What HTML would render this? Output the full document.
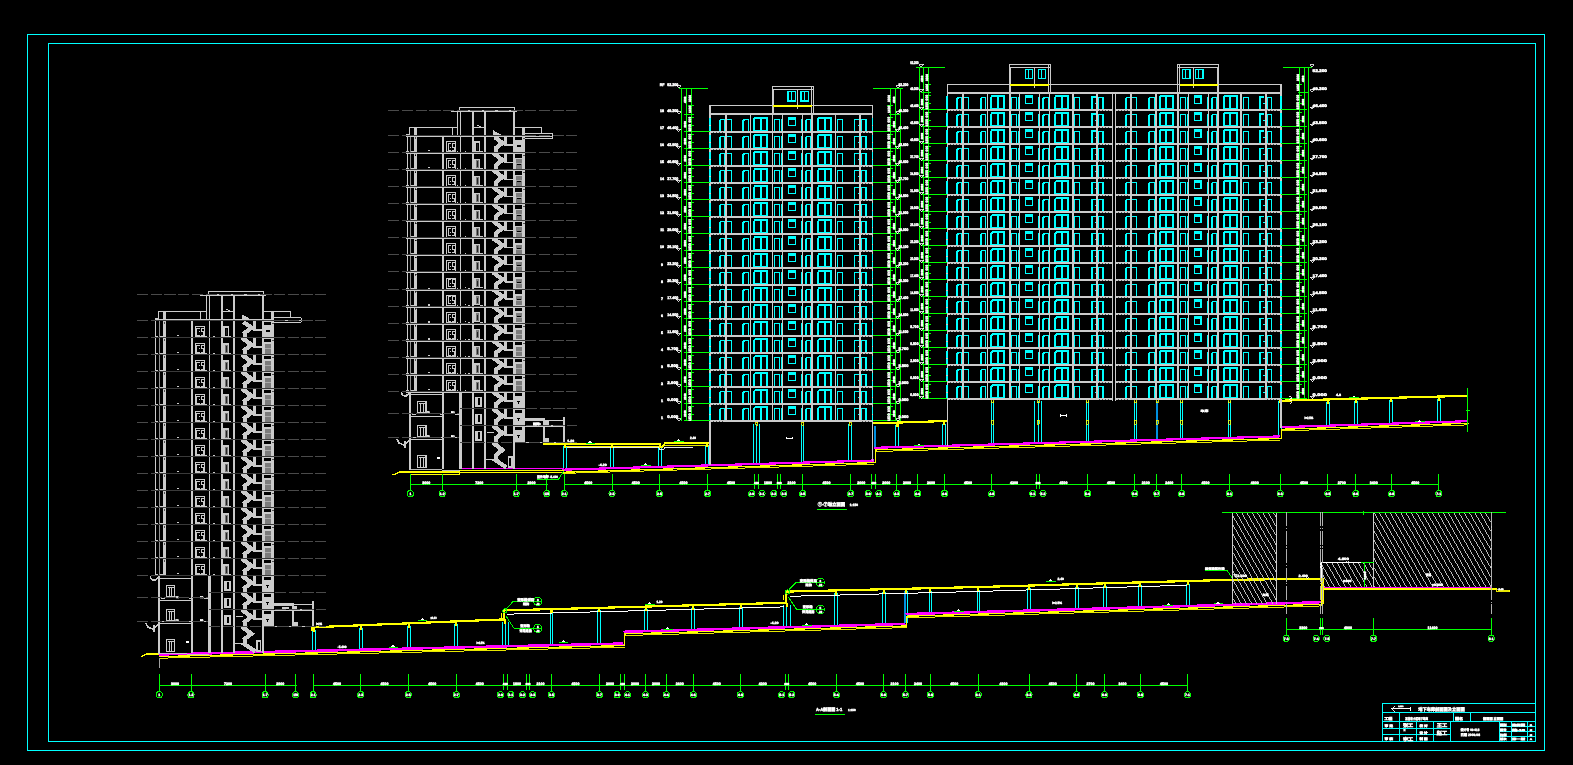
<!DOCTYPE html>
<html lang="zh"><head><meta charset="utf-8"><title>CAD</title>
<style>
html,body{margin:0;padding:0;background:#000;overflow:hidden}
svg{display:block;will-change:transform;transform:translateZ(0)}
text{font-family:"Liberation Sans","Noto Sans CJK SC",sans-serif;fill:#fff;stroke:#fff;stroke-width:.45px;text-rendering:geometricPrecision}
</style></head><body>
<svg width="1573" height="765" viewBox="0 0 1573 765" fill="none" stroke-linecap="butt" shape-rendering="crispEdges">
<rect x="0" y="0" width="1573" height="765" fill="#000"/>
<path d="M27.3 34.2L1544.6 34.2L1544.6 750.3L27.3 750.3ZM48.6 43.4L1535.7 43.4L1535.7 741.4L48.6 741.4ZM1382.3 703.5L1535.7 703.5M1382.5 703.4L1382.5 741.4M1382.3 712.5L1535.7 712.5M1382.3 721.5L1535.7 721.5M1399.5 712.3L1399.5 721.3M1453.5 712.3L1453.5 721.3M1470.5 712.3L1470.5 721.3M1382.3 728.5L1450.7 728.5M1382.3 734.5L1450.7 734.5M1399.5 721.3L1399.5 741.4M1416.5 721.3L1416.5 741.4M1433.5 721.3L1433.5 741.4M1450.5 721.3L1450.5 741.4M1499.5 721.3L1499.5 741.4M1511.5 721.3L1511.5 741.4M1527.5 721.3L1527.5 741.4M1499.3 726.5L1535.7 726.5M1499.3 731.5L1535.7 731.5M1499.3 736.5L1535.7 736.5M312.5 629.8L312.5 649.9M315.5 629.8L315.5 649.9M359.5 627.8L359.5 648.8M362.5 627.8L362.5 648.8M407.5 625.9L407.5 647.6M410.5 625.9L410.5 647.6M454.5 623.9L454.5 646.5M457.5 623.9L457.5 646.5M502.5 621.9L502.5 645.4M505.5 621.9L505.5 645.4M508.5 621.9L508.5 645.4M550.5 611.6L550.5 644.2M552.5 611.6L552.5 644.2M597.5 610.4L597.5 643.1M600.5 610.4L600.5 643.1M644.5 609.1L644.5 630.2M647.5 609.1L647.5 630.2M691.5 607.8L691.5 628.9M694.5 607.8L694.5 628.9M739.5 606.5L739.5 627.5M742.5 606.5L742.5 627.5M783.5 605.4L783.5 626.3M786.5 605.4L786.5 626.3M790.5 605.4L790.5 626.3M834.5 592.9L834.5 624.9M837.5 592.9L837.5 624.9M882.5 591.8L882.5 623.5M885.5 591.8L885.5 623.5" stroke="#00ffff"/>
<path d="M904.9 591.3L904.9 622.9" stroke="#0090e0" stroke-width="2"/>
<path d="M907.5 591.3L907.5 622.9M929.5 590.7L929.5 612.4M931.5 590.7L931.5 612.4M977.5 589.6L977.5 611.1M979.5 589.6L979.5 611.1M1027.5 588.1L1027.5 609.6M1030.5 588.1L1030.5 609.6M1075.5 586.7L1075.5 608.2M1078.5 586.7L1078.5 608.2M1103.5 585.9L1103.5 607.4M1106.5 585.9L1106.5 607.4M1138.5 584.9L1138.5 606.4M1141.5 584.9L1141.5 606.4M1186.5 583.6L1186.5 605.1M1189.5 583.6L1189.5 605.1" stroke="#00ffff"/>
<path d="M506.9 614.2L783.9 606.9M789.8 596.3L980 591.4L1187.5 585.2" stroke="#ffffff"/>
<path d="M159.2 654.5L623.5 643.5M623.5 631.8L905.5 623.9M905.5 614.1L1321.5 602.2" stroke="#ff00ff" stroke-width="2.5"/>
<path d="M141.2 656.5L146.5 654.1L159.2 654" stroke="#ffff00" stroke-width="1.4"/>
<path d="M159.2 656.6L624.7 645.6L624.7 633.9L906.7 626L906.7 616.2L1322.7 604.3" stroke="#ffff00" stroke-width="1.3"/>
<path d="M160.2 658.2L624.5 647.2M624.5 635.5L906.5 627.6M906.5 617.8L1322.5 605.9" stroke="#ffff00" stroke-width="0.9"/>
<path d="M159.5 657.5L159.5 668" stroke="#a0a0a0"/>
<path d="M312.2 627.3L312.2 630.5" stroke="#ffff00" stroke-width="1.6"/>
<path d="M312.2 627.3L503.9 619.4M503.9 610.4L785.9 602.8M785.9 591.6L980 587M980 587L1100 583.5M1100 583.5L1232 579.8M1232 579.8L1321.5 578.7M503.9 620.5L503.9 609" stroke="#ffff00" stroke-width="2.2"/>
<path d="M501.5 613L501.5 618" stroke="#ffff00"/>
<path d="M785.9 603.8L785.9 590.4" stroke="#ffff00" stroke-width="2.2"/>
<path d="M783.5 595L783.5 600" stroke="#ffff00"/>
<path d="M313.8 627.3L313.8 631.5M361.1 625.3L361.1 629.5M408.9 623.4L408.9 627.6M456 621.4L456 625.6M505.3 619.4L505.3 623.6M551.5 609.1L551.5 613.3M599 607.9L599 612.1M646.2 606.6L646.2 610.8M693 605.3L693 609.5M741.2 604L741.2 608.2M786.8 602.9L786.8 607.1M836.2 590.4L836.2 594.6M884.2 589.3L884.2 593.5M906 588.8L906 593M930.3 588.2L930.3 592.4M978.3 587.1L978.3 591.3M1028.8 585.6L1028.8 589.8M1077.2 584.2L1077.2 588.4M1104.8 583.4L1104.8 587.6M1139.9 582.4L1139.9 586.6M1188 581.1L1188 585.3" stroke="#ffff00" stroke-width="2.2"/>
<path d="M1322.3 577.6L1322.3 604.2" stroke="#ffff00" stroke-width="2.6"/>
<path d="M1322.3 588.9L1496.5 588.9" stroke="#ffff00" stroke-width="1.8"/>
<path d="M1496.5 589.2L1496.5 591.6L1509.8 591.6L1509.8 590L1497.5 590" stroke="#ffff00" stroke-width="0.9"/>
<path d="M1323.5 587.5L1491.6 587.5" stroke="#ff00ff"/>
<path d="M563.5 446.4L563.5 468.6M566.5 446.4L566.5 468.6M610.5 446.4L610.5 467.2M613.5 446.4L613.5 467.2M658.5 446.4L658.5 465.8M661.5 446.4L661.5 465.8M705.5 445.7L705.5 464.5M708.5 445.7L708.5 464.5M753.5 424.1L753.5 463M756.5 424.1L756.5 463M759.5 424.1L759.5 463M801.5 424.1L801.5 461.6M803.5 424.1L803.5 461.6M848.5 424.1L848.5 460.3M851.5 424.1L851.5 460.3M895.5 425L895.5 446.2M898.5 425L898.5 446.2M942.5 423.5L942.5 444.9M945.5 423.5L945.5 444.9M991.5 401.3L991.5 443.5M993.5 401.3L993.5 443.5M1034.5 401.3L1034.5 442.3M1038.5 401.3L1038.5 442.3M1041.5 401.3L1041.5 442.3M1086.5 401.3L1086.5 440.8M1088.5 401.3L1088.5 440.8M1134.5 401.3L1134.5 439.5M1136.5 401.3L1136.5 439.5" stroke="#00ffff"/>
<path d="M1156.9 400.8L1156.9 438.9" stroke="#0090e0" stroke-width="2.4"/>
<path d="M1180.5 401.3L1180.5 438.2M1182.5 401.3L1182.5 438.2M1228.5 401.3L1228.5 436.9M1230.5 401.3L1230.5 436.9M1278.5 401.3L1278.5 435.4M1281.5 401.3L1281.5 435.4M1326.5 401.9L1326.5 424.7M1329.5 401.9L1329.5 424.7M1354.5 401.2L1354.5 423.8M1357.5 401.2L1357.5 423.8M1389.5 400.2L1389.5 422.7M1392.5 400.2L1392.5 422.7M1437.5 399L1437.5 421.2M1440.5 399L1440.5 421.2" stroke="#00ffff"/>
<path d="M875.2 426L875.2 446.6" stroke="#0090e0" stroke-width="2"/>
<path d="M566.5 447.9L659 447.9L659 449L664 449L664 447.6L693 447.6" stroke="#ffffff" stroke-width="0.9"/>
<path d="M459.4 468.5L564.3 468.5" stroke="#ff00ff"/>
<path d="M562 469.7L874.3 460.5M874.3 447.8L1280 436.4M1280 427.2L1467.8 421.2" stroke="#ff00ff" stroke-width="2.2"/>
<path d="M392.2 474.6L395.5 474L399.6 472L459.4 472M410.4 474.3L459.4 474.3L459.4 470.5L564.3 470.5" stroke="#ffff00" stroke-width="1.3"/>
<path d="M459.4 472.5L564.3 472.5" stroke="#ffff00"/>
<path d="M564.3 472.2L875.5 462.6L875.5 449.9L1281.2 438.5L1281.2 429.3L1469 423.3" stroke="#ffff00" stroke-width="1.3"/>
<path d="M563 473.4L873.8 464.2M875.3 451.5L1279.5 440.1M1281 430.9L1467.3 424.9" stroke="#ffff00" stroke-width="0.9"/>
<path d="M543.3 443.7L660.4 443.7" stroke="#ffff00" stroke-width="1.8"/>
<path d="M566 446.5L659.5 446.5" stroke="#ffff00"/>
<path d="M660.4 443L660.4 447L662.3 447L664.3 444.6L664.3 443.1L709.3 442.9" stroke="#ffff00" stroke-width="1.6"/>
<path d="M665 445.3L709 445.2" stroke="#ffff00" stroke-width="0.9"/>
<path d="M872.7 423.4L946.7 421M1281 400.7L1467.8 395.8" stroke="#ffff00" stroke-width="2.2"/>
<path d="M1467.5 388.2L1467.5 432M1466 410.5L1469.6 410.5" stroke="#00ff00"/>
<path d="M565 443.9L565 448.1M612.3 443.9L612.3 448.1M660 443.9L660 448.1M707.2 443.2L707.2 447.4" stroke="#ffff00" stroke-width="2.2"/>
<path d="M755.5 422.4L757.5 422.4L757.5 425.4L755.5 425.4ZM801.8 422.4L803.8 422.4L803.8 425.4L801.8 425.4ZM849.1 422.4L851.1 422.4L851.1 425.4L849.1 425.4Z" stroke="#ffff00" stroke-width="0.8"/>
<path d="M897.4 422.5L897.4 426.7M944.2 421L944.2 425.2" stroke="#ffff00" stroke-width="2.2"/>
<path d="M991.5 399.6L993.5 399.6L993.5 402.6L991.5 402.6ZM991.5 420L993.5 420L993.5 424.2L991.5 424.2ZM1037 399.6L1039 399.6L1039 402.6L1037 402.6ZM1037 420L1039 420L1039 424.2L1037 424.2ZM1086.4 399.6L1088.4 399.6L1088.4 402.6L1086.4 402.6ZM1086.4 420L1088.4 420L1088.4 424.2L1086.4 424.2ZM1134.4 399.6L1136.4 399.6L1136.4 402.6L1134.4 402.6ZM1134.4 420L1136.4 420L1136.4 424.2L1134.4 424.2ZM1156.2 399.6L1158.2 399.6L1158.2 402.6L1156.2 402.6ZM1156.2 420L1158.2 420L1158.2 424.2L1156.2 424.2ZM1180.5 399.6L1182.5 399.6L1182.5 402.6L1180.5 402.6ZM1180.5 420L1182.5 420L1182.5 424.2L1180.5 424.2ZM1228.5 399.6L1230.5 399.6L1230.5 402.6L1228.5 402.6ZM1228.5 420L1230.5 420L1230.5 424.2L1228.5 424.2Z" stroke="#ffff00" stroke-width="0.8"/>
<path d="M1280 398.8L1280 403M1328.3 399.4L1328.3 403.6M1356 398.7L1356 402.9M1391.1 397.7L1391.1 401.9M1439.2 396.5L1439.2 400.7" stroke="#ffff00" stroke-width="2.2"/>
<path d="M159.2 685.5L296.5 685.5M313.1 685.5L1187.5 685.5M159.5 674L159.5 691.8M191.5 674L191.5 691.8M265.5 674L265.5 691.8M295.5 674L295.5 691.8M313.5 674L313.5 691.8M360.5 674L360.5 691.8M408.5 674L408.5 691.8M456.5 674L456.5 691.8M503.5 674L503.5 689.7M507.5 674L507.5 689.7M526.5 674L526.5 689.7M529.5 674L529.5 689.7M551.5 674L551.5 691.8M599.5 674L599.5 691.8M620.5 674L620.5 689.7M624.5 674L624.5 689.7M645.5 674L645.5 691.8M666.5 674L666.5 691.8M693.5 674L693.5 691.8M740.5 674L740.5 691.8M785.5 674L785.5 689.7M788.5 674L788.5 689.7M836.5 674L836.5 691.8M883.5 674L883.5 691.8M905.5 674L905.5 691.8M930.5 674L930.5 691.8M978.5 674L978.5 691.8M1029.5 674L1029.5 691.8M1076.5 674L1076.5 691.8M1104.5 674L1104.5 691.8M1140.5 674L1140.5 691.8M1187.5 674L1187.5 691.8" stroke="#00ff00"/>
<circle cx="159.2" cy="694.8" r="3.1" stroke="#00ff00"/>
<circle cx="191" cy="694.8" r="3.1" stroke="#00ff00"/>
<circle cx="265.1" cy="694.8" r="3.1" stroke="#00ff00"/>
<circle cx="295.5" cy="694.8" r="3.1" stroke="#00ff00"/>
<circle cx="313.1" cy="694.8" r="3.1" stroke="#00ff00"/>
<circle cx="360.8" cy="694.8" r="3.1" stroke="#00ff00"/>
<circle cx="408.2" cy="694.8" r="3.1" stroke="#00ff00"/>
<circle cx="456.3" cy="694.8" r="3.1" stroke="#00ff00"/>
<circle cx="500.4" cy="694.8" r="3.1" stroke="#00ff00"/>
<circle cx="510.8" cy="694.8" r="3.1" stroke="#00ff00"/>
<circle cx="522.5" cy="694.8" r="3.1" stroke="#00ff00"/>
<circle cx="532.7" cy="694.8" r="3.1" stroke="#00ff00"/>
<circle cx="551.4" cy="694.8" r="3.1" stroke="#00ff00"/>
<circle cx="599.4" cy="694.8" r="3.1" stroke="#00ff00"/>
<circle cx="617.1" cy="694.8" r="3.1" stroke="#00ff00"/>
<circle cx="627.5" cy="694.8" r="3.1" stroke="#00ff00"/>
<circle cx="645.5" cy="694.8" r="3.1" stroke="#00ff00"/>
<circle cx="666.3" cy="694.8" r="3.1" stroke="#00ff00"/>
<circle cx="693.3" cy="694.8" r="3.1" stroke="#00ff00"/>
<circle cx="740.4" cy="694.8" r="3.1" stroke="#00ff00"/>
<circle cx="781.6" cy="694.8" r="3.1" stroke="#00ff00"/>
<circle cx="791.8" cy="694.8" r="3.1" stroke="#00ff00"/>
<circle cx="836.3" cy="694.8" r="3.1" stroke="#00ff00"/>
<circle cx="883.5" cy="694.8" r="3.1" stroke="#00ff00"/>
<circle cx="905.5" cy="694.8" r="3.1" stroke="#00ff00"/>
<circle cx="930.4" cy="694.8" r="3.1" stroke="#00ff00"/>
<circle cx="978.2" cy="694.8" r="3.1" stroke="#00ff00"/>
<circle cx="1029" cy="694.8" r="3.1" stroke="#00ff00"/>
<circle cx="1076.7" cy="694.8" r="3.1" stroke="#00ff00"/>
<circle cx="1104.5" cy="694.8" r="3.1" stroke="#00ff00"/>
<circle cx="1140.4" cy="694.8" r="3.1" stroke="#00ff00"/>
<circle cx="1187.5" cy="694.8" r="3.1" stroke="#00ff00"/>
<text x="159.2" y="696" font-size="3.4" text-anchor="middle" font-weight="bold">1</text>
<text x="191" y="696" font-size="3.4" text-anchor="middle" font-weight="bold">1-2</text>
<text x="265.1" y="696" font-size="3.4" text-anchor="middle" font-weight="bold">1-7</text>
<text x="295.5" y="696" font-size="3.4" text-anchor="middle" font-weight="bold">1/8</text>
<text x="313.1" y="696" font-size="3.4" text-anchor="middle" font-weight="bold">2-1</text>
<text x="360.8" y="696" font-size="3.4" text-anchor="middle" font-weight="bold">2-3</text>
<text x="408.2" y="696" font-size="3.4" text-anchor="middle" font-weight="bold">2-5</text>
<text x="456.3" y="696" font-size="3.4" text-anchor="middle" font-weight="bold">2-7</text>
<text x="500.4" y="696" font-size="3.4" text-anchor="middle" font-weight="bold">2-9</text>
<text x="510.8" y="696" font-size="3.4" text-anchor="middle" font-weight="bold">3-1</text>
<text x="522.5" y="696" font-size="3.4" text-anchor="middle" font-weight="bold">3-2</text>
<text x="532.7" y="696" font-size="3.4" text-anchor="middle" font-weight="bold">3-3</text>
<text x="551.4" y="696" font-size="3.4" text-anchor="middle" font-weight="bold">3-5</text>
<text x="599.4" y="696" font-size="3.4" text-anchor="middle" font-weight="bold">3-7</text>
<text x="617.1" y="696" font-size="3.4" text-anchor="middle" font-weight="bold">3-9</text>
<text x="627.5" y="696" font-size="3.4" text-anchor="middle" font-weight="bold">4-1</text>
<text x="645.5" y="696" font-size="3.4" text-anchor="middle" font-weight="bold">4-3</text>
<text x="666.3" y="696" font-size="3.4" text-anchor="middle" font-weight="bold">4-4</text>
<text x="693.3" y="696" font-size="3.4" text-anchor="middle" font-weight="bold">4-6</text>
<text x="740.4" y="696" font-size="3.4" text-anchor="middle" font-weight="bold">4-8</text>
<text x="781.6" y="696" font-size="3.4" text-anchor="middle" font-weight="bold">5-1</text>
<text x="791.8" y="696" font-size="3.4" text-anchor="middle" font-weight="bold">5-2</text>
<text x="836.3" y="696" font-size="3.4" text-anchor="middle" font-weight="bold">5-4</text>
<text x="883.5" y="696" font-size="3.4" text-anchor="middle" font-weight="bold">5-6</text>
<text x="905.5" y="696" font-size="3.4" text-anchor="middle" font-weight="bold">5-7</text>
<text x="930.4" y="696" font-size="3.4" text-anchor="middle" font-weight="bold">5-8</text>
<text x="978.2" y="696" font-size="3.4" text-anchor="middle" font-weight="bold">6-1</text>
<text x="1029" y="696" font-size="3.4" text-anchor="middle" font-weight="bold">6-3</text>
<text x="1076.7" y="696" font-size="3.4" text-anchor="middle" font-weight="bold">6-5</text>
<text x="1104.5" y="696" font-size="3.4" text-anchor="middle" font-weight="bold">6-6</text>
<text x="1140.4" y="696" font-size="3.4" text-anchor="middle" font-weight="bold">6-8</text>
<text x="1187.5" y="696" font-size="3.4" text-anchor="middle" font-weight="bold">7-1</text>
<text x="175.1" y="684.5" font-size="3.6" text-anchor="middle" font-weight="bold">3000</text>
<text x="228.1" y="684.5" font-size="3.6" text-anchor="middle" font-weight="bold">7200</text>
<text x="280.3" y="684.5" font-size="3.6" text-anchor="middle" font-weight="bold">2900</text>
<text x="337" y="684.5" font-size="3.6" text-anchor="middle" font-weight="bold">4500</text>
<text x="384.5" y="684.5" font-size="3.6" text-anchor="middle" font-weight="bold">4500</text>
<text x="432.2" y="684.5" font-size="3.6" text-anchor="middle" font-weight="bold">4500</text>
<text x="479.8" y="684.5" font-size="3.6" text-anchor="middle" font-weight="bold">4500</text>
<text x="505.3" y="684.5" font-size="3" text-anchor="middle" font-weight="bold">400</text>
<text x="516.9" y="684.5" font-size="3.6" text-anchor="middle" font-weight="bold">1800</text>
<text x="528" y="684.5" font-size="3" text-anchor="middle" font-weight="bold">300</text>
<text x="540.4" y="684.5" font-size="3.6" text-anchor="middle" font-weight="bold">2100</text>
<text x="575.4" y="684.5" font-size="3.6" text-anchor="middle" font-weight="bold">4500</text>
<text x="610" y="684.5" font-size="3.6" text-anchor="middle" font-weight="bold">2000</text>
<text x="622.5" y="684.5" font-size="3" text-anchor="middle" font-weight="bold">400</text>
<text x="635" y="684.5" font-size="3.6" text-anchor="middle" font-weight="bold">2000</text>
<text x="655.9" y="684.5" font-size="3.6" text-anchor="middle" font-weight="bold">2000</text>
<text x="679.8" y="684.5" font-size="3.6" text-anchor="middle" font-weight="bold">2600</text>
<text x="716.8" y="684.5" font-size="3.6" text-anchor="middle" font-weight="bold">4500</text>
<text x="762.8" y="684.5" font-size="3.6" text-anchor="middle" font-weight="bold">4200</text>
<text x="786.8" y="684.5" font-size="3" text-anchor="middle" font-weight="bold">300</text>
<text x="812.3" y="684.5" font-size="3.6" text-anchor="middle" font-weight="bold">4500</text>
<text x="859.9" y="684.5" font-size="3.6" text-anchor="middle" font-weight="bold">4500</text>
<text x="894.5" y="684.5" font-size="3.6" text-anchor="middle" font-weight="bold">2100</text>
<text x="918" y="684.5" font-size="3.6" text-anchor="middle" font-weight="bold">2400</text>
<text x="954.3" y="684.5" font-size="3.6" text-anchor="middle" font-weight="bold">4500</text>
<text x="1003.6" y="684.5" font-size="3.6" text-anchor="middle" font-weight="bold">4800</text>
<text x="1052.8" y="684.5" font-size="3.6" text-anchor="middle" font-weight="bold">4500</text>
<text x="1090.6" y="684.5" font-size="3.6" text-anchor="middle" font-weight="bold">2700</text>
<text x="1122.5" y="684.5" font-size="3.6" text-anchor="middle" font-weight="bold">3400</text>
<text x="1164" y="684.5" font-size="3.6" text-anchor="middle" font-weight="bold">4500</text>
<path d="M410.4 484.5L547.7 484.5M564.3 484.5L1438.7 484.5M410.5 474.4L410.5 490.6M442.5 474.4L442.5 490.6M516.5 474.4L516.5 490.6M546.5 474.4L546.5 490.6M564.5 474.4L564.5 490.6M612.5 474.4L612.5 490.6M659.5 474.4L659.5 490.6M707.5 474.4L707.5 490.6M754.5 474.4L754.5 488.8M758.5 474.4L758.5 488.8M777.5 474.4L777.5 488.8M780.5 474.4L780.5 488.8M802.5 474.4L802.5 490.6M850.5 474.4L850.5 490.6M871.5 474.4L871.5 488.8M875.5 474.4L875.5 488.8M896.5 474.4L896.5 490.6M917.5 474.4L917.5 490.6M944.5 474.4L944.5 490.6M991.5 474.4L991.5 490.6M1036.5 474.4L1036.5 488.8M1039.5 474.4L1039.5 488.8M1087.5 474.4L1087.5 490.6M1134.5 474.4L1134.5 490.6M1156.5 474.4L1156.5 490.6M1181.5 474.4L1181.5 490.6M1229.5 474.4L1229.5 490.6M1280.5 474.4L1280.5 490.6M1327.5 474.4L1327.5 490.6M1355.5 474.4L1355.5 490.6M1391.5 474.4L1391.5 490.6M1438.5 474.4L1438.5 490.6" stroke="#00ff00"/>
<circle cx="410.4" cy="493.6" r="3.1" stroke="#00ff00"/>
<circle cx="442.2" cy="493.6" r="3.1" stroke="#00ff00"/>
<circle cx="516.3" cy="493.6" r="3.1" stroke="#00ff00"/>
<circle cx="546.7" cy="493.6" r="3.1" stroke="#00ff00"/>
<circle cx="564.3" cy="493.6" r="3.1" stroke="#00ff00"/>
<circle cx="612" cy="493.6" r="3.1" stroke="#00ff00"/>
<circle cx="659.4" cy="493.6" r="3.1" stroke="#00ff00"/>
<circle cx="707.5" cy="493.6" r="3.1" stroke="#00ff00"/>
<circle cx="751.6" cy="493.6" r="3.1" stroke="#00ff00"/>
<circle cx="762" cy="493.6" r="3.1" stroke="#00ff00"/>
<circle cx="773.7" cy="493.6" r="3.1" stroke="#00ff00"/>
<circle cx="783.9" cy="493.6" r="3.1" stroke="#00ff00"/>
<circle cx="802.6" cy="493.6" r="3.1" stroke="#00ff00"/>
<circle cx="850.6" cy="493.6" r="3.1" stroke="#00ff00"/>
<circle cx="868.3" cy="493.6" r="3.1" stroke="#00ff00"/>
<circle cx="878.7" cy="493.6" r="3.1" stroke="#00ff00"/>
<circle cx="896.7" cy="493.6" r="3.1" stroke="#00ff00"/>
<circle cx="917.5" cy="493.6" r="3.1" stroke="#00ff00"/>
<circle cx="944.5" cy="493.6" r="3.1" stroke="#00ff00"/>
<circle cx="991.6" cy="493.6" r="3.1" stroke="#00ff00"/>
<circle cx="1032.8" cy="493.6" r="3.1" stroke="#00ff00"/>
<circle cx="1043" cy="493.6" r="3.1" stroke="#00ff00"/>
<circle cx="1087.5" cy="493.6" r="3.1" stroke="#00ff00"/>
<circle cx="1134.7" cy="493.6" r="3.1" stroke="#00ff00"/>
<circle cx="1156.7" cy="493.6" r="3.1" stroke="#00ff00"/>
<circle cx="1181.6" cy="493.6" r="3.1" stroke="#00ff00"/>
<circle cx="1229.4" cy="493.6" r="3.1" stroke="#00ff00"/>
<circle cx="1280.2" cy="493.6" r="3.1" stroke="#00ff00"/>
<circle cx="1327.9" cy="493.6" r="3.1" stroke="#00ff00"/>
<circle cx="1355.7" cy="493.6" r="3.1" stroke="#00ff00"/>
<circle cx="1391.6" cy="493.6" r="3.1" stroke="#00ff00"/>
<circle cx="1438.7" cy="493.6" r="3.1" stroke="#00ff00"/>
<text x="410.4" y="494.8" font-size="3.4" text-anchor="middle" font-weight="bold">1</text>
<text x="442.2" y="494.8" font-size="3.4" text-anchor="middle" font-weight="bold">1-2</text>
<text x="516.3" y="494.8" font-size="3.4" text-anchor="middle" font-weight="bold">1-7</text>
<text x="546.7" y="494.8" font-size="3.4" text-anchor="middle" font-weight="bold">1/8</text>
<text x="564.3" y="494.8" font-size="3.4" text-anchor="middle" font-weight="bold">2-1</text>
<text x="612" y="494.8" font-size="3.4" text-anchor="middle" font-weight="bold">2-3</text>
<text x="659.4" y="494.8" font-size="3.4" text-anchor="middle" font-weight="bold">2-5</text>
<text x="707.5" y="494.8" font-size="3.4" text-anchor="middle" font-weight="bold">2-7</text>
<text x="751.6" y="494.8" font-size="3.4" text-anchor="middle" font-weight="bold">2-9</text>
<text x="762" y="494.8" font-size="3.4" text-anchor="middle" font-weight="bold">3-1</text>
<text x="773.7" y="494.8" font-size="3.4" text-anchor="middle" font-weight="bold">3-2</text>
<text x="783.9" y="494.8" font-size="3.4" text-anchor="middle" font-weight="bold">3-3</text>
<text x="802.6" y="494.8" font-size="3.4" text-anchor="middle" font-weight="bold">3-5</text>
<text x="850.6" y="494.8" font-size="3.4" text-anchor="middle" font-weight="bold">3-7</text>
<text x="868.3" y="494.8" font-size="3.4" text-anchor="middle" font-weight="bold">3-9</text>
<text x="878.7" y="494.8" font-size="3.4" text-anchor="middle" font-weight="bold">4-1</text>
<text x="896.7" y="494.8" font-size="3.4" text-anchor="middle" font-weight="bold">4-3</text>
<text x="917.5" y="494.8" font-size="3.4" text-anchor="middle" font-weight="bold">4-4</text>
<text x="944.5" y="494.8" font-size="3.4" text-anchor="middle" font-weight="bold">4-6</text>
<text x="991.6" y="494.8" font-size="3.4" text-anchor="middle" font-weight="bold">4-8</text>
<text x="1032.8" y="494.8" font-size="3.4" text-anchor="middle" font-weight="bold">5-1</text>
<text x="1043" y="494.8" font-size="3.4" text-anchor="middle" font-weight="bold">5-2</text>
<text x="1087.5" y="494.8" font-size="3.4" text-anchor="middle" font-weight="bold">5-4</text>
<text x="1134.7" y="494.8" font-size="3.4" text-anchor="middle" font-weight="bold">5-6</text>
<text x="1156.7" y="494.8" font-size="3.4" text-anchor="middle" font-weight="bold">5-7</text>
<text x="1181.6" y="494.8" font-size="3.4" text-anchor="middle" font-weight="bold">5-8</text>
<text x="1229.4" y="494.8" font-size="3.4" text-anchor="middle" font-weight="bold">6-1</text>
<text x="1280.2" y="494.8" font-size="3.4" text-anchor="middle" font-weight="bold">6-3</text>
<text x="1327.9" y="494.8" font-size="3.4" text-anchor="middle" font-weight="bold">6-5</text>
<text x="1355.7" y="494.8" font-size="3.4" text-anchor="middle" font-weight="bold">6-6</text>
<text x="1391.6" y="494.8" font-size="3.4" text-anchor="middle" font-weight="bold">6-8</text>
<text x="1438.7" y="494.8" font-size="3.4" text-anchor="middle" font-weight="bold">7-1</text>
<text x="426.3" y="483.6" font-size="3.6" text-anchor="middle" font-weight="bold">3000</text>
<text x="479.2" y="483.6" font-size="3.6" text-anchor="middle" font-weight="bold">7200</text>
<text x="531.5" y="483.6" font-size="3.6" text-anchor="middle" font-weight="bold">2900</text>
<text x="588.2" y="483.6" font-size="3.6" text-anchor="middle" font-weight="bold">4500</text>
<text x="635.7" y="483.6" font-size="3.6" text-anchor="middle" font-weight="bold">4500</text>
<text x="683.5" y="483.6" font-size="3.6" text-anchor="middle" font-weight="bold">4500</text>
<text x="731" y="483.6" font-size="3.6" text-anchor="middle" font-weight="bold">4500</text>
<text x="756.5" y="483.6" font-size="3" text-anchor="middle" font-weight="bold">400</text>
<text x="768.1" y="483.6" font-size="3.6" text-anchor="middle" font-weight="bold">1800</text>
<text x="779.2" y="483.6" font-size="3" text-anchor="middle" font-weight="bold">300</text>
<text x="791.6" y="483.6" font-size="3.6" text-anchor="middle" font-weight="bold">2100</text>
<text x="826.6" y="483.6" font-size="3.6" text-anchor="middle" font-weight="bold">4500</text>
<text x="861.2" y="483.6" font-size="3.6" text-anchor="middle" font-weight="bold">2000</text>
<text x="873.8" y="483.6" font-size="3" text-anchor="middle" font-weight="bold">400</text>
<text x="886.2" y="483.6" font-size="3.6" text-anchor="middle" font-weight="bold">2000</text>
<text x="907.1" y="483.6" font-size="3.6" text-anchor="middle" font-weight="bold">2000</text>
<text x="931" y="483.6" font-size="3.6" text-anchor="middle" font-weight="bold">2600</text>
<text x="968" y="483.6" font-size="3.6" text-anchor="middle" font-weight="bold">4500</text>
<text x="1014" y="483.6" font-size="3.6" text-anchor="middle" font-weight="bold">4200</text>
<text x="1038" y="483.6" font-size="3" text-anchor="middle" font-weight="bold">300</text>
<text x="1063.5" y="483.6" font-size="3.6" text-anchor="middle" font-weight="bold">4500</text>
<text x="1111.1" y="483.6" font-size="3.6" text-anchor="middle" font-weight="bold">4500</text>
<text x="1145.7" y="483.6" font-size="3.6" text-anchor="middle" font-weight="bold">2100</text>
<text x="1169.2" y="483.6" font-size="3.6" text-anchor="middle" font-weight="bold">2400</text>
<text x="1205.5" y="483.6" font-size="3.6" text-anchor="middle" font-weight="bold">4500</text>
<text x="1254.8" y="483.6" font-size="3.6" text-anchor="middle" font-weight="bold">4800</text>
<text x="1304" y="483.6" font-size="3.6" text-anchor="middle" font-weight="bold">4500</text>
<text x="1341.8" y="483.6" font-size="3.6" text-anchor="middle" font-weight="bold">2700</text>
<text x="1373.7" y="483.6" font-size="3.6" text-anchor="middle" font-weight="bold">3400</text>
<text x="1415.2" y="483.6" font-size="3.6" text-anchor="middle" font-weight="bold">4500</text>
<path d="M1286.3 629.5L1491.6 629.5M1286.5 618.2L1286.5 635.3" stroke="#00ff00"/>
<circle cx="1286.3" cy="638.4" r="3.1" stroke="#00ff00"/>
<path d="M1320.5 618.2L1320.5 635.3" stroke="#00ff00"/>
<circle cx="1316.1" cy="638.4" r="3.1" stroke="#00ff00"/>
<path d="M1322.5 618.2L1322.5 635.3" stroke="#00ff00"/>
<circle cx="1326.9" cy="638.4" r="3.1" stroke="#00ff00"/>
<path d="M1373.5 618.2L1373.5 635.3" stroke="#00ff00"/>
<circle cx="1373.5" cy="638.4" r="3.1" stroke="#00ff00"/>
<path d="M1491.5 618.2L1491.5 635.3" stroke="#00ff00"/>
<circle cx="1491.2" cy="638.4" r="3.1" stroke="#00ff00"/>
<text x="1286.3" y="639.6" font-size="3.4" text-anchor="middle" font-weight="bold">7-3</text>
<text x="1316.1" y="639.6" font-size="3.4" text-anchor="middle" font-weight="bold">7-4</text>
<text x="1326.9" y="639.6" font-size="3.4" text-anchor="middle" font-weight="bold">7-5</text>
<text x="1373.5" y="639.6" font-size="3.4" text-anchor="middle" font-weight="bold">7-7</text>
<text x="1491.2" y="639.6" font-size="3.4" text-anchor="middle" font-weight="bold">8-1</text>
<text x="1303.3" y="628.7" font-size="3.6" text-anchor="middle" font-weight="bold">3300</text>
<text x="1321.5" y="628.7" font-size="2.6" text-anchor="middle" font-weight="bold">200</text>
<text x="1348" y="628.7" font-size="3.6" text-anchor="middle" font-weight="bold">4900</text>
<text x="1432.5" y="628.7" font-size="3.6" text-anchor="middle" font-weight="bold">11400</text>
<text x="817.8" y="506" font-size="4.6" font-weight="bold" textLength="27.4" lengthAdjust="spacingAndGlyphs">①-⑦轴立面图</text>
<text x="849.8" y="506" font-size="3.2" font-weight="bold">1:150</text>
<path d="M817 509.5L847.2 509.5" stroke="#00ff00"/>
<text x="815.9" y="710.8" font-size="4.4" font-weight="bold" textLength="26.3" lengthAdjust="spacingAndGlyphs">A-A剖面图 1-1</text>
<text x="848" y="710.8" font-size="3" font-weight="bold">1:150</text>
<path d="M815.1 714.5L845.1 714.5" stroke="#00ff00"/>
<path d="M459.4 107.2L514.7 107.2L514.7 110.3L459.4 110.3ZM451.4 111.5L516.7 111.5" stroke="#cbcbcb"/>
<path d="M466 110.4L468.5 110.4M480 110.4L482.5 110.4M494 110.4L496.5 110.4M508 110.4L510.5 110.4" stroke="#cbcbcb" stroke-width="1.3"/>
<path d="M457.5 111L457.5 135.4M460.5 111L460.5 469" stroke="#cbcbcb"/>
<path d="M473 111L473 469M485 111L485 469" stroke="#cbcbcb" stroke-width="1.3"/>
<path d="M514 111L514 469" stroke="#cbcbcb" stroke-width="1.5"/>
<path d="M473.5 127.5L484.5 127.5M477.5 125L480.5 126.8" stroke="#cbcbcb"/>
<path d="M409.4 134.4L409.4 127.5L457.7 127.5" stroke="#cbcbcb" stroke-width="1.2"/>
<path d="M452.5 127.5L452.5 135.4M407.5 134L407.5 392" stroke="#cbcbcb"/>
<path d="M410.5 136L410.5 392" stroke="#909090"/>
<path d="M415.4 127.8L415.4 392" stroke="#cbcbcb" stroke-width="2.7"/>
<path d="M406 134.2L410 134.2M406.3 135.9L524.8 135.9M443 135.4L443 469" stroke="#cbcbcb" stroke-width="1.4"/>
<path d="M514.8 127.5L541.7 127.5L541.7 133.6" stroke="#cbcbcb" stroke-width="1.2"/>
<path d="M523.5 127.5L523.5 135.4" stroke="#cbcbcb" stroke-width="2.2"/>
<path d="M524.8 133.6L552 133.6L553 136L552 138.4L524.8 138.4" stroke="#cbcbcb" stroke-width="1.1"/>
<path d="M524.8 136.5L553 136.5M406.2 153.5L513.5 153.5M446.5 141.5L455.5 141.5L455.5 151.9L446.5 151.9ZM448.5 142.9L448.5 150.9M447.5 143.5L450.6 143.5M447.5 150.5L450.6 150.5M449.6 147.5L450.6 147.5M451.7 143.5L454.7 143.5M452.5 142.9L452.5 147.5M451.7 147.5L454.7 147.5M454.5 146.5L454.5 150.9M451.7 150.5L454.7 150.5M456.5 151.5L458 151.5" stroke="#cbcbcb"/>
<path d="M427.6 150.4H429.8V152.4H427.6Z" fill="#cbcbcb"/>
<path d="M428.3 151H429.8V151.8H428.3Z" fill="#000"/>
<path d="M464.5 151.5L466 151.5M467.5 152.5L470 152.5" stroke="#cbcbcb"/>
<path d="M473.6 141.4H480.3V151.8H473.6Z" fill="#cbcbcb"/>
<path d="M476 142.7H479V150.7H476Z" fill="#000"/>
<path d="M477.5 144L477.5 149.7" stroke="#222"/>
<path d="M480.3 151.5L482.5 151.5M406.3 151.5L409 151.5M411 151.5L414 151.5" stroke="#cbcbcb"/>
<circle cx="415.6" cy="138.1" r="0.5" stroke="#000" stroke-width="0.6"/>
<path d="M406.2 170.5L513.5 170.5M446.5 158.6L455.5 158.6L455.5 169L446.5 169ZM448.5 160L448.5 168M447.5 160.5L450.6 160.5M447.5 167.5L450.6 167.5M449.6 164.5L450.6 164.5M451.7 160.5L454.7 160.5M452.5 160L452.5 164.6M451.7 164.5L454.7 164.5M454.5 163.6L454.5 168M451.7 167.5L454.7 167.5M456.5 168.5L458 168.5" stroke="#cbcbcb"/>
<path d="M427.6 167.4H429.8V169.4H427.6Z" fill="#cbcbcb"/>
<path d="M428.3 168H429.8V168.8H428.3Z" fill="#000"/>
<path d="M464.5 168.5L466 168.5M467.5 169.5L470 169.5" stroke="#cbcbcb"/>
<path d="M473.6 158.5H480.3V168.9H473.6Z" fill="#cbcbcb"/>
<path d="M476 159.8H479V167.8H476Z" fill="#777"/>
<path d="M477.5 161.1L477.5 166.8" stroke="#222"/>
<path d="M480.3 168.5L482.5 168.5M406.3 168.5L409 168.5M411 168.5L414 168.5" stroke="#cbcbcb"/>
<circle cx="415.6" cy="155.2" r="0.5" stroke="#000" stroke-width="0.6"/>
<path d="M406.2 187.5L513.5 187.5M446.5 175.6L455.5 175.6L455.5 186L446.5 186ZM448.5 177L448.5 185M447.5 177.5L450.6 177.5M447.5 184.5L450.6 184.5M449.6 181.5L450.6 181.5M451.7 177.5L454.7 177.5M452.5 177L452.5 181.6M451.7 181.5L454.7 181.5M454.5 180.6L454.5 185M451.7 184.5L454.7 184.5M456.5 185.5L458 185.5" stroke="#cbcbcb"/>
<path d="M427.6 184.5H429.8V186.5H427.6Z" fill="#cbcbcb"/>
<path d="M428.3 185.1H429.8V185.9H428.3Z" fill="#000"/>
<path d="M464.5 185.5L466 185.5M467.5 186.5L470 186.5" stroke="#cbcbcb"/>
<path d="M473.6 175.5H480.3V185.9H473.6Z" fill="#cbcbcb"/>
<path d="M476 176.8H479V184.8H476Z" fill="#777"/>
<path d="M477.5 178.1L477.5 183.8" stroke="#222"/>
<path d="M480.3 185.5L482.5 185.5M406.3 185.5L409 185.5M411 185.5L414 185.5" stroke="#cbcbcb"/>
<circle cx="415.6" cy="172.2" r="0.5" stroke="#000" stroke-width="0.6"/>
<path d="M406.2 204.5L513.5 204.5M446.5 192.7L455.5 192.7L455.5 203.1L446.5 203.1ZM448.5 194.1L448.5 202.1M447.5 194.5L450.6 194.5M447.5 201.5L450.6 201.5M449.6 198.5L450.6 198.5M451.7 194.5L454.7 194.5M452.5 194.1L452.5 198.7M451.7 198.5L454.7 198.5M454.5 197.7L454.5 202.1M451.7 201.5L454.7 201.5M456.5 202.5L458 202.5" stroke="#cbcbcb"/>
<path d="M427.6 201.5H429.8V203.5H427.6Z" fill="#cbcbcb"/>
<path d="M428.3 202.1H429.8V202.9H428.3Z" fill="#000"/>
<path d="M464.5 202.5L466 202.5M467.5 203.5L470 203.5" stroke="#cbcbcb"/>
<path d="M473.6 192.6H480.3V203H473.6Z" fill="#cbcbcb"/>
<path d="M476 193.9H479V201.9H476Z" fill="#777"/>
<path d="M477.5 195.2L477.5 200.9" stroke="#222"/>
<path d="M480.3 202.5L482.5 202.5M406.3 202.5L409 202.5M411 202.5L414 202.5" stroke="#cbcbcb"/>
<circle cx="415.6" cy="189.3" r="0.5" stroke="#000" stroke-width="0.6"/>
<path d="M406.2 221.5L513.5 221.5M446.5 209.7L455.5 209.7L455.5 220.1L446.5 220.1ZM448.5 211.1L448.5 219.1M447.5 211.5L450.6 211.5M447.5 218.5L450.6 218.5M449.6 215.5L450.6 215.5M451.7 211.5L454.7 211.5M452.5 211.1L452.5 215.7M451.7 215.5L454.7 215.5M454.5 214.7L454.5 219.1M451.7 218.5L454.7 218.5M456.5 220.5L458 220.5" stroke="#cbcbcb"/>
<path d="M427.6 218.6H429.8V220.6H427.6Z" fill="#cbcbcb"/>
<path d="M428.3 219.2H429.8V220H428.3Z" fill="#000"/>
<path d="M464.5 219.5L466 219.5M467.5 220.5L470 220.5" stroke="#cbcbcb"/>
<path d="M473.6 209.6H480.3V220H473.6Z" fill="#cbcbcb"/>
<path d="M476 210.9H479V218.9H476Z" fill="#777"/>
<path d="M477.5 212.2L477.5 217.9" stroke="#222"/>
<path d="M480.3 219.5L482.5 219.5M406.3 220.5L409 220.5M411 219.5L414 219.5" stroke="#cbcbcb"/>
<circle cx="415.6" cy="206.3" r="0.5" stroke="#000" stroke-width="0.6"/>
<path d="M406.2 238.5L513.5 238.5M446.5 226.8L455.5 226.8L455.5 237.2L446.5 237.2ZM448.5 228.2L448.5 236.2M447.5 228.5L450.6 228.5M447.5 235.5L450.6 235.5M449.6 232.5L450.6 232.5M451.7 228.5L454.7 228.5M452.5 228.2L452.5 232.8M451.7 232.5L454.7 232.5M454.5 231.8L454.5 236.2M451.7 235.5L454.7 235.5M456.5 237.5L458 237.5" stroke="#cbcbcb"/>
<path d="M427.6 235.7H429.8V237.7H427.6Z" fill="#cbcbcb"/>
<path d="M428.3 236.3H429.8V237.1H428.3Z" fill="#000"/>
<path d="M464.5 236.5L466 236.5M467.5 237.5L470 237.5" stroke="#cbcbcb"/>
<path d="M473.6 226.7H480.3V237.1H473.6Z" fill="#cbcbcb"/>
<path d="M476 228H479V236H476Z" fill="#777"/>
<path d="M477.5 229.3L477.5 235" stroke="#222"/>
<path d="M480.3 236.5L482.5 236.5M406.3 237.5L409 237.5M411 236.5L414 236.5" stroke="#cbcbcb"/>
<circle cx="415.6" cy="223.4" r="0.5" stroke="#000" stroke-width="0.6"/>
<path d="M406.2 255.5L513.5 255.5M446.5 243.9L455.5 243.9L455.5 254.3L446.5 254.3ZM448.5 245.3L448.5 253.3M447.5 245.5L450.6 245.5M447.5 252.5L450.6 252.5M449.6 249.5L450.6 249.5M451.7 245.5L454.7 245.5M452.5 245.3L452.5 249.9M451.7 249.5L454.7 249.5M454.5 248.9L454.5 253.3M451.7 252.5L454.7 252.5M456.5 254.5L458 254.5" stroke="#cbcbcb"/>
<path d="M427.6 252.7H429.8V254.7H427.6Z" fill="#cbcbcb"/>
<path d="M428.3 253.3H429.8V254.1H428.3Z" fill="#000"/>
<path d="M464.5 253.5L466 253.5M467.5 254.5L470 254.5" stroke="#cbcbcb"/>
<path d="M473.6 243.8H480.3V254.2H473.6Z" fill="#cbcbcb"/>
<path d="M476 245.1H479V253.1H476Z" fill="#777"/>
<path d="M477.5 246.4L477.5 252.1" stroke="#222"/>
<path d="M480.3 253.5L482.5 253.5M406.3 254.5L409 254.5M411 253.5L414 253.5" stroke="#cbcbcb"/>
<circle cx="415.6" cy="240.5" r="0.5" stroke="#000" stroke-width="0.6"/>
<path d="M406.2 272.5L513.5 272.5M446.5 260.9L455.5 260.9L455.5 271.3L446.5 271.3ZM448.5 262.3L448.5 270.3M447.5 262.5L450.6 262.5M447.5 269.5L450.6 269.5M449.6 266.5L450.6 266.5M451.7 262.5L454.7 262.5M452.5 262.3L452.5 266.9M451.7 266.5L454.7 266.5M454.5 265.9L454.5 270.3M451.7 269.5L454.7 269.5M456.5 271.5L458 271.5" stroke="#cbcbcb"/>
<path d="M427.6 269.8H429.8V271.8H427.6Z" fill="#cbcbcb"/>
<path d="M428.3 270.4H429.8V271.2H428.3Z" fill="#000"/>
<path d="M464.5 270.5L466 270.5M467.5 271.5L470 271.5" stroke="#cbcbcb"/>
<path d="M473.6 260.8H480.3V271.2H473.6Z" fill="#cbcbcb"/>
<path d="M476 262.1H479V270.1H476Z" fill="#777"/>
<path d="M477.5 263.4L477.5 269.1" stroke="#222"/>
<path d="M480.3 270.5L482.5 270.5M406.3 271.5L409 271.5M411 270.5L414 270.5" stroke="#cbcbcb"/>
<circle cx="415.6" cy="257.5" r="0.5" stroke="#000" stroke-width="0.6"/>
<path d="M406.2 290.5L513.5 290.5M446.5 278L455.5 278L455.5 288.4L446.5 288.4ZM448.5 279.4L448.5 287.4M447.5 279.5L450.6 279.5M447.5 286.5L450.6 286.5M449.6 283.5L450.6 283.5M451.7 279.5L454.7 279.5M452.5 279.4L452.5 284M451.7 283.5L454.7 283.5M454.5 283L454.5 287.4M451.7 286.5L454.7 286.5M456.5 288.5L458 288.5" stroke="#cbcbcb"/>
<path d="M427.6 286.8H429.8V288.8H427.6Z" fill="#cbcbcb"/>
<path d="M428.3 287.4H429.8V288.2H428.3Z" fill="#000"/>
<path d="M464.5 287.5L466 287.5M467.5 288.5L470 288.5" stroke="#cbcbcb"/>
<path d="M473.6 277.9H480.3V288.3H473.6Z" fill="#cbcbcb"/>
<path d="M476 279.2H479V287.2H476Z" fill="#777"/>
<path d="M477.5 280.5L477.5 286.2" stroke="#222"/>
<path d="M480.3 287.5L482.5 287.5M406.3 288.5L409 288.5M411 288.5L414 288.5" stroke="#cbcbcb"/>
<circle cx="415.6" cy="274.6" r="0.5" stroke="#000" stroke-width="0.6"/>
<path d="M406.2 307.5L513.5 307.5M446.5 295L455.5 295L455.5 305.4L446.5 305.4ZM448.5 296.4L448.5 304.4M447.5 296.5L450.6 296.5M447.5 303.5L450.6 303.5M449.6 300.5L450.6 300.5M451.7 296.5L454.7 296.5M452.5 296.4L452.5 301M451.7 300.5L454.7 300.5M454.5 300L454.5 304.4M451.7 303.5L454.7 303.5M456.5 305.5L458 305.5" stroke="#cbcbcb"/>
<path d="M427.6 303.9H429.8V305.9H427.6Z" fill="#cbcbcb"/>
<path d="M428.3 304.5H429.8V305.3H428.3Z" fill="#000"/>
<path d="M464.5 304.5L466 304.5M467.5 305.5L470 305.5" stroke="#cbcbcb"/>
<path d="M473.6 294.9H480.3V305.3H473.6Z" fill="#cbcbcb"/>
<path d="M476 296.2H479V304.2H476Z" fill="#777"/>
<path d="M477.5 297.5L477.5 303.2" stroke="#222"/>
<path d="M480.3 305.5L482.5 305.5M406.3 305.5L409 305.5M411 305.5L414 305.5" stroke="#cbcbcb"/>
<circle cx="415.6" cy="291.6" r="0.5" stroke="#000" stroke-width="0.6"/>
<path d="M406.2 324.5L513.5 324.5M446.5 312.1L455.5 312.1L455.5 322.5L446.5 322.5ZM448.5 313.5L448.5 321.5M447.5 314.5L450.6 314.5M447.5 321.5L450.6 321.5M449.6 317.5L450.6 317.5M451.7 314.5L454.7 314.5M452.5 313.5L452.5 318.1M451.7 317.5L454.7 317.5M454.5 317.1L454.5 321.5M451.7 321.5L454.7 321.5M456.5 322.5L458 322.5" stroke="#cbcbcb"/>
<path d="M427.6 321H429.8V323H427.6Z" fill="#cbcbcb"/>
<path d="M428.3 321.6H429.8V322.4H428.3Z" fill="#000"/>
<path d="M464.5 321.5L466 321.5M467.5 322.5L470 322.5" stroke="#cbcbcb"/>
<path d="M473.6 312H480.3V322.4H473.6Z" fill="#cbcbcb"/>
<path d="M476 313.3H479V321.3H476Z" fill="#777"/>
<path d="M477.5 314.6L477.5 320.3" stroke="#222"/>
<path d="M480.3 322.5L482.5 322.5M406.3 322.5L409 322.5M411 322.5L414 322.5" stroke="#cbcbcb"/>
<circle cx="415.6" cy="308.7" r="0.5" stroke="#000" stroke-width="0.6"/>
<path d="M406.2 341.5L513.5 341.5M446.5 329.2L455.5 329.2L455.5 339.6L446.5 339.6ZM448.5 330.6L448.5 338.6M447.5 331.5L450.6 331.5M447.5 338.5L450.6 338.5M449.6 334.5L450.6 334.5M451.7 331.5L454.7 331.5M452.5 330.6L452.5 335.2M451.7 334.5L454.7 334.5M454.5 334.2L454.5 338.6M451.7 338.5L454.7 338.5M456.5 339.5L458 339.5" stroke="#cbcbcb"/>
<path d="M427.6 338H429.8V340H427.6Z" fill="#cbcbcb"/>
<path d="M428.3 338.6H429.8V339.4H428.3Z" fill="#000"/>
<path d="M464.5 339.5L466 339.5M467.5 339.5L470 339.5" stroke="#cbcbcb"/>
<path d="M473.6 329.1H480.3V339.5H473.6Z" fill="#cbcbcb"/>
<path d="M476 330.4H479V338.4H476Z" fill="#777"/>
<path d="M477.5 331.7L477.5 337.4" stroke="#222"/>
<path d="M480.3 339.5L482.5 339.5M406.3 339.5L409 339.5M411 339.5L414 339.5" stroke="#cbcbcb"/>
<circle cx="415.6" cy="325.8" r="0.5" stroke="#000" stroke-width="0.6"/>
<path d="M406.2 358.5L513.5 358.5M446.5 346.2L455.5 346.2L455.5 356.6L446.5 356.6ZM448.5 347.6L448.5 355.6M447.5 348.5L450.6 348.5M447.5 355.5L450.6 355.5M449.6 351.5L450.6 351.5M451.7 348.5L454.7 348.5M452.5 347.6L452.5 352.2M451.7 351.5L454.7 351.5M454.5 351.2L454.5 355.6M451.7 355.5L454.7 355.5M456.5 356.5L458 356.5" stroke="#cbcbcb"/>
<path d="M427.6 355.1H429.8V357.1H427.6Z" fill="#cbcbcb"/>
<path d="M428.3 355.7H429.8V356.5H428.3Z" fill="#000"/>
<path d="M464.5 356.5L466 356.5M467.5 356.5L470 356.5" stroke="#cbcbcb"/>
<path d="M473.6 346.1H480.3V356.5H473.6Z" fill="#cbcbcb"/>
<path d="M476 347.4H479V355.4H476Z" fill="#777"/>
<path d="M477.5 348.7L477.5 354.4" stroke="#222"/>
<path d="M480.3 356.5L482.5 356.5M406.3 356.5L409 356.5M411 356.5L414 356.5" stroke="#cbcbcb"/>
<circle cx="415.6" cy="342.8" r="0.5" stroke="#000" stroke-width="0.6"/>
<path d="M406.2 375.5L513.5 375.5M446.5 363.3L455.5 363.3L455.5 373.7L446.5 373.7ZM448.5 364.7L448.5 372.7M447.5 365.5L450.6 365.5M447.5 372.5L450.6 372.5M449.6 368.5L450.6 368.5M451.7 365.5L454.7 365.5M452.5 364.7L452.5 369.3M451.7 368.5L454.7 368.5M454.5 368.3L454.5 372.7M451.7 372.5L454.7 372.5M456.5 373.5L458 373.5" stroke="#cbcbcb"/>
<path d="M427.6 372.1H429.8V374.1H427.6Z" fill="#cbcbcb"/>
<path d="M428.3 372.7H429.8V373.5H428.3Z" fill="#000"/>
<path d="M464.5 373.5L466 373.5M467.5 373.5L470 373.5" stroke="#cbcbcb"/>
<path d="M473.6 363.2H480.3V373.6H473.6Z" fill="#cbcbcb"/>
<path d="M476 364.5H479V372.5H476Z" fill="#777"/>
<path d="M477.5 365.8L477.5 371.5" stroke="#222"/>
<path d="M480.3 373.5L482.5 373.5M406.3 373.5L409 373.5M411 373.5L414 373.5" stroke="#cbcbcb"/>
<circle cx="415.6" cy="359.9" r="0.5" stroke="#000" stroke-width="0.6"/>
<path d="M406.2 392.5L513.5 392.5M446.5 380.3L455.5 380.3L455.5 390.7L446.5 390.7ZM448.5 381.7L448.5 389.7M447.5 382.5L450.6 382.5M447.5 389.5L450.6 389.5M449.6 385.5L450.6 385.5M451.7 382.5L454.7 382.5M452.5 381.7L452.5 386.3M451.7 385.5L454.7 385.5M454.5 385.3L454.5 389.7M451.7 389.5L454.7 389.5M456.5 390.5L458 390.5" stroke="#cbcbcb"/>
<path d="M427.6 389.2H429.8V391.2H427.6Z" fill="#cbcbcb"/>
<path d="M428.3 389.8H429.8V390.6H428.3Z" fill="#000"/>
<path d="M464.5 390.5L466 390.5M467.5 391.5L470 391.5" stroke="#cbcbcb"/>
<path d="M473.6 380.2H480.3V390.6H473.6Z" fill="#cbcbcb"/>
<path d="M476 381.5H479V389.5H476Z" fill="#777"/>
<path d="M477.5 382.8L477.5 388.5" stroke="#222"/>
<path d="M480.3 390.5L482.5 390.5M406.3 390.5L409 390.5M411 390.5L414 390.5" stroke="#cbcbcb"/>
<circle cx="415.6" cy="376.9" r="0.5" stroke="#000" stroke-width="0.6"/>
<path d="M493.2 130.2L500.8 134.6L493.2 134.8Z" fill="#cbcbcb"/>
<path d="M494.6 137.1L502.6 142.9L495.8 148.1L496.4 151.9L494.6 154.2L502.6 160L495.8 165.2L496.4 169L494.6 171.2L502.6 177L495.8 182.2L496.4 186L494.6 188.3L502.6 194.1L495.8 199.3L496.4 203.1L494.6 205.3L502.6 211.1L495.8 216.3L496.4 220.1L494.6 222.4L502.6 228.2L495.8 233.4L496.4 237.2L494.6 239.5L502.6 245.3L495.8 250.5L496.4 254.3L494.6 256.5L502.6 262.3L495.8 267.5L496.4 271.3L494.6 273.6L502.6 279.4L495.8 284.6L496.4 288.4L494.6 290.6L502.6 296.4L495.8 301.6L496.4 305.4L494.6 307.7L502.6 313.5L495.8 318.7L496.4 322.5L494.6 324.8L502.6 330.6L495.8 335.8L496.4 339.6L494.6 341.8L502.6 347.6L495.8 352.8L496.4 356.6L494.6 358.9L502.6 364.7L495.8 369.9L496.4 373.7L494.6 375.9L502.6 381.7L495.8 386.9L496.4 390.7L494.6 393L502.6 398.8L495.8 404L496.4 407.8L494.6 410.1L502.6 415.9L495.8 421.1L496.4 424.9L494.6 427.1L502.6 432.9L495.8 438.1L496.4 441.9L494.6 444.2L502.6 450L495.8 455.2L496.4 459L495.4 460L506.5 467.5" stroke="#cbcbcb" stroke-width="4.2"/>
<path d="M505.6 136.3L505.6 145.9" stroke="#cbcbcb" stroke-width="2.6"/>
<path d="M505.4 145.2L513.4 145.2" stroke="#cbcbcb" stroke-width="1.6"/>
<path d="M505.6 153.4L505.6 163" stroke="#cbcbcb" stroke-width="2.6"/>
<path d="M505.4 162.3L513.4 162.3" stroke="#cbcbcb" stroke-width="1.6"/>
<path d="M505.6 170.4L505.6 180" stroke="#cbcbcb" stroke-width="2.6"/>
<path d="M505.4 179.3L513.4 179.3" stroke="#cbcbcb" stroke-width="1.6"/>
<path d="M505.6 187.5L505.6 197.1" stroke="#cbcbcb" stroke-width="2.6"/>
<path d="M505.4 196.4L513.4 196.4" stroke="#cbcbcb" stroke-width="1.6"/>
<path d="M505.6 204.5L505.6 214.1" stroke="#cbcbcb" stroke-width="2.6"/>
<path d="M505.4 213.4L513.4 213.4" stroke="#cbcbcb" stroke-width="1.6"/>
<path d="M505.6 221.6L505.6 231.2" stroke="#cbcbcb" stroke-width="2.6"/>
<path d="M505.4 230.5L513.4 230.5" stroke="#cbcbcb" stroke-width="1.6"/>
<path d="M505.6 238.7L505.6 248.3" stroke="#cbcbcb" stroke-width="2.6"/>
<path d="M505.4 247.6L513.4 247.6" stroke="#cbcbcb" stroke-width="1.6"/>
<path d="M505.6 255.7L505.6 265.3" stroke="#cbcbcb" stroke-width="2.6"/>
<path d="M505.4 264.6L513.4 264.6" stroke="#cbcbcb" stroke-width="1.6"/>
<path d="M505.6 272.8L505.6 282.4" stroke="#cbcbcb" stroke-width="2.6"/>
<path d="M505.4 281.7L513.4 281.7" stroke="#cbcbcb" stroke-width="1.6"/>
<path d="M505.6 289.8L505.6 299.4" stroke="#cbcbcb" stroke-width="2.6"/>
<path d="M505.4 298.7L513.4 298.7" stroke="#cbcbcb" stroke-width="1.6"/>
<path d="M505.6 306.9L505.6 316.5" stroke="#cbcbcb" stroke-width="2.6"/>
<path d="M505.4 315.8L513.4 315.8" stroke="#cbcbcb" stroke-width="1.6"/>
<path d="M505.6 324L505.6 333.6" stroke="#cbcbcb" stroke-width="2.6"/>
<path d="M505.4 332.9L513.4 332.9" stroke="#cbcbcb" stroke-width="1.6"/>
<path d="M505.6 341L505.6 350.6" stroke="#cbcbcb" stroke-width="2.6"/>
<path d="M505.4 349.9L513.4 349.9" stroke="#cbcbcb" stroke-width="1.6"/>
<path d="M505.6 358.1L505.6 367.7" stroke="#cbcbcb" stroke-width="2.6"/>
<path d="M505.4 367L513.4 367" stroke="#cbcbcb" stroke-width="1.6"/>
<path d="M505.6 375.1L505.6 384.7" stroke="#cbcbcb" stroke-width="2.6"/>
<path d="M505.4 384L513.4 384" stroke="#cbcbcb" stroke-width="1.6"/>
<path d="M505.6 392.2L505.6 401.8" stroke="#cbcbcb" stroke-width="2.6"/>
<path d="M505.4 401.1L513.4 401.1" stroke="#cbcbcb" stroke-width="1.6"/>
<path d="M505.6 409.3L505.6 418.9" stroke="#cbcbcb" stroke-width="2.6"/>
<path d="M505.4 418.2L513.4 418.2" stroke="#cbcbcb" stroke-width="1.6"/>
<path d="M505.6 426.3L505.6 435.9" stroke="#cbcbcb" stroke-width="2.6"/>
<path d="M505.4 435.2L513.4 435.2" stroke="#cbcbcb" stroke-width="1.6"/>
<path d="M485 459.5L495 459.5" stroke="#cbcbcb"/>
<path d="M507.5 456H512.5V467.5H507.5Z" fill="#cbcbcb"/>
<path d="M509 458H511V466H509Z" fill="#000"/>
<path d="M487 432.5L494 432.5" stroke="#cbcbcb"/>
<path d="M513.3 136.5H524.8V442H513.3Z" fill="#cbcbcb"/>
<path d="M524.5 127.5L524.5 442" stroke="#cbcbcb"/>
<path d="M514.9 136.9H522.3V140.4H514.9ZM516.8 144.9H520.6V147.3H516.8Z" fill="#000"/>
<circle cx="524" cy="138.5" r="0.5" stroke="#000" stroke-width="0.6"/>
<path d="M514.9 154H522.3V157.5H514.9Z" fill="#000"/>
<path d="M516.2 159.2H522V168.8H516.2Z" fill="#7c7c7c"/>
<path d="M517.3 162.9H520.6V164.6H517.3Z" fill="#000"/>
<path d="M516.2 163.5L522 163.5" stroke="#aaa"/>
<circle cx="524" cy="155.6" r="0.5" stroke="#000" stroke-width="0.6"/>
<path d="M514.9 171H522.3V174.5H514.9Z" fill="#000"/>
<path d="M516.2 176.2H522V185.8H516.2Z" fill="#7c7c7c"/>
<path d="M517.3 179.9H520.6V181.6H517.3Z" fill="#000"/>
<path d="M516.2 180.5L522 180.5" stroke="#aaa"/>
<circle cx="524" cy="172.6" r="0.5" stroke="#000" stroke-width="0.6"/>
<path d="M514.9 188.1H522.3V191.6H514.9Z" fill="#000"/>
<path d="M516.2 193.3H522V202.9H516.2Z" fill="#7c7c7c"/>
<path d="M517.3 197H520.6V198.7H517.3Z" fill="#000"/>
<path d="M516.2 197.5L522 197.5" stroke="#aaa"/>
<circle cx="524" cy="189.7" r="0.5" stroke="#000" stroke-width="0.6"/>
<path d="M514.9 205.1H522.3V208.6H514.9Z" fill="#000"/>
<path d="M516.2 210.3H522V219.9H516.2Z" fill="#7c7c7c"/>
<path d="M517.3 214H520.6V215.7H517.3Z" fill="#000"/>
<path d="M516.2 214.5L522 214.5" stroke="#aaa"/>
<circle cx="524" cy="206.7" r="0.5" stroke="#000" stroke-width="0.6"/>
<path d="M514.9 222.2H522.3V225.7H514.9Z" fill="#000"/>
<path d="M516.2 227.4H522V237H516.2Z" fill="#7c7c7c"/>
<path d="M517.3 231.1H520.6V232.8H517.3Z" fill="#000"/>
<path d="M516.2 232.5L522 232.5" stroke="#aaa"/>
<circle cx="524" cy="223.8" r="0.5" stroke="#000" stroke-width="0.6"/>
<path d="M514.9 239.3H522.3V242.8H514.9Z" fill="#000"/>
<path d="M516.2 244.5H522V254.1H516.2Z" fill="#7c7c7c"/>
<path d="M517.3 248.2H520.6V249.9H517.3Z" fill="#000"/>
<path d="M516.2 249.5L522 249.5" stroke="#aaa"/>
<circle cx="524" cy="240.9" r="0.5" stroke="#000" stroke-width="0.6"/>
<path d="M514.9 256.3H522.3V259.8H514.9Z" fill="#000"/>
<path d="M516.2 261.5H522V271.1H516.2Z" fill="#7c7c7c"/>
<path d="M517.3 265.2H520.6V266.9H517.3Z" fill="#000"/>
<path d="M516.2 266.5L522 266.5" stroke="#aaa"/>
<circle cx="524" cy="257.9" r="0.5" stroke="#000" stroke-width="0.6"/>
<path d="M514.9 273.4H522.3V276.9H514.9Z" fill="#000"/>
<path d="M516.2 278.6H522V288.2H516.2Z" fill="#7c7c7c"/>
<path d="M517.3 282.3H520.6V284H517.3Z" fill="#000"/>
<path d="M516.2 283.5L522 283.5" stroke="#aaa"/>
<circle cx="524" cy="275" r="0.5" stroke="#000" stroke-width="0.6"/>
<path d="M514.9 290.4H522.3V293.9H514.9Z" fill="#000"/>
<path d="M516.2 295.6H522V305.2H516.2Z" fill="#7c7c7c"/>
<path d="M517.3 299.3H520.6V301H517.3Z" fill="#000"/>
<path d="M516.2 300.5L522 300.5" stroke="#aaa"/>
<circle cx="524" cy="292" r="0.5" stroke="#000" stroke-width="0.6"/>
<path d="M514.9 307.5H522.3V311H514.9Z" fill="#000"/>
<path d="M516.2 312.7H522V322.3H516.2Z" fill="#7c7c7c"/>
<path d="M517.3 316.4H520.6V318.1H517.3Z" fill="#000"/>
<path d="M516.2 317.5L522 317.5" stroke="#aaa"/>
<circle cx="524" cy="309.1" r="0.5" stroke="#000" stroke-width="0.6"/>
<path d="M514.9 324.6H522.3V328.1H514.9Z" fill="#000"/>
<path d="M516.2 329.8H522V339.4H516.2Z" fill="#7c7c7c"/>
<path d="M517.3 333.5H520.6V335.2H517.3Z" fill="#000"/>
<path d="M516.2 334.5L522 334.5" stroke="#aaa"/>
<circle cx="524" cy="326.2" r="0.5" stroke="#000" stroke-width="0.6"/>
<path d="M514.9 341.6H522.3V345.1H514.9Z" fill="#000"/>
<path d="M516.2 346.8H522V356.4H516.2Z" fill="#7c7c7c"/>
<path d="M517.3 350.5H520.6V352.2H517.3Z" fill="#000"/>
<path d="M516.2 351.5L522 351.5" stroke="#aaa"/>
<circle cx="524" cy="343.2" r="0.5" stroke="#000" stroke-width="0.6"/>
<path d="M514.9 358.7H522.3V362.2H514.9Z" fill="#000"/>
<path d="M516.2 363.9H522V373.5H516.2Z" fill="#7c7c7c"/>
<path d="M517.3 367.6H520.6V369.3H517.3Z" fill="#000"/>
<path d="M516.2 368.5L522 368.5" stroke="#aaa"/>
<circle cx="524" cy="360.3" r="0.5" stroke="#000" stroke-width="0.6"/>
<path d="M514.9 375.7H522.3V379.2H514.9Z" fill="#000"/>
<path d="M516.2 380.9H522V390.5H516.2Z" fill="#7c7c7c"/>
<path d="M517.3 384.6H520.6V386.3H517.3Z" fill="#000"/>
<path d="M516.2 385.5L522 385.5" stroke="#aaa"/>
<circle cx="524" cy="377.3" r="0.5" stroke="#000" stroke-width="0.6"/>
<path d="M514.9 392.8H522.3V396H514.9ZM516.8 401L520.4 401L518.6 403.8ZM514.9 409.9H522.3V413.1H514.9ZM516.8 418.1L520.4 418.1L518.6 420.9ZM514.9 426.9H522.3V430.1H514.9ZM516.8 435.1L520.4 435.1L518.6 437.9Z" fill="#000"/>
<path d="M410.4 391.4L410.4 470" stroke="#cbcbcb" stroke-width="2"/>
<path d="M410.4 394.5L443 394.5M410.4 416.5L443 416.5" stroke="#cbcbcb"/>
<text x="426.5" y="413.4" font-size="2.6" fill="#cbcbcb">C1</text>
<text x="451" y="413.4" font-size="2.6" fill="#cbcbcb">M1</text>
<path d="M412 414.5L416 414.5M440 414.5L444 414.5M455 414.5L459 414.5M410.4 439.5L443 439.5" stroke="#cbcbcb"/>
<text x="426.5" y="436.9" font-size="2.6" fill="#cbcbcb">C1</text>
<text x="451" y="436.9" font-size="2.6" fill="#cbcbcb">M1</text>
<path d="M412 437.5L416 437.5M440 437.5L444 437.5M455 437.5L459 437.5" stroke="#cbcbcb"/>
<path d="M460.6 391.4L460.6 469" stroke="#cbcbcb" stroke-width="2.6"/>
<path d="M417.6 401.8L426 401.8L426 412.6L417.6 412.6Z" stroke="#cbcbcb" stroke-width="1.1"/>
<path d="M420.5 403.6L420.5 412.6M423.5 403.6L423.5 412.6M419 403.5L424.6 403.5" stroke="#cbcbcb"/>
<path d="M417.6 425.3L426 425.3L426 436.4L417.6 436.4Z" stroke="#cbcbcb" stroke-width="1.1"/>
<path d="M420.5 427.1L420.5 436.4M423.5 427.1L423.5 436.4M419 427.5L424.6 427.5" stroke="#cbcbcb"/>
<path d="M417.6 455.7L426 455.7L426 467.5L417.6 467.5Z" stroke="#cbcbcb" stroke-width="1.1"/>
<path d="M420.5 457.5L420.5 467.5M423.5 457.5L423.5 467.5M419 457.5L424.6 457.5" stroke="#cbcbcb"/>
<path d="M437.2 457.3H440.2V458.9H437.2Z" fill="#ffffff"/>
<path d="M401 392.5L403 395.5L406 396L409.5 393M397 439L399 443L404 445L409.5 440.5M405 441L405 447.5" stroke="#cbcbcb" stroke-width="1.6"/>
<path d="M475 396.9H482.4V406.9H475Z" fill="#cbcbcb"/>
<path d="M477.6 398.3H480.4V404.7H477.6Z" fill="#000"/>
<path d="M475 413.8H482.4V424H475Z" fill="#cbcbcb"/>
<path d="M477.6 415.2H480.4V421.8H477.6Z" fill="#000"/>
<path d="M475 431H482.4V441H475Z" fill="#cbcbcb"/>
<path d="M477.6 432.4H480.4V438.8H477.6Z" fill="#000"/>
<path d="M410.4 469L460 470.6" stroke="#cbcbcb" stroke-width="0.9"/>
<path d="M525 418.4H544.6V421.4H525Z" fill="#cbcbcb"/>
<path d="M544 418.4L544 442.5" stroke="#cbcbcb" stroke-width="2"/>
<path d="M564 417L564 442.5" stroke="#cbcbcb" stroke-width="2.4"/>
<path d="M544.6 420.5L563 420.5" stroke="#cbcbcb"/>
<path d="M544.6 421.4H548.5V424.5H544.6Z" fill="#cbcbcb"/>
<path d="M525 426.5L564.5 426.5" stroke="#cbcbcb"/>
<path d="M545 437.5H549V441.5H545Z" fill="#cbcbcb"/>
<path d="M525 442.5L565 442.5" stroke="#cbcbcb"/>
<path d="M533 423H540.5V424.6H533ZM551 424.6H555.5V426H551Z" fill="#cbcbcb"/>
<path d="M388.1 110.5L576.7 110.5M388.1 135.5L576.7 135.5" stroke="#4a4a4a" stroke-dasharray="11.3 2.4"/>
<path d="M406 135.5L525 135.5" stroke="#3a3a3a"/>
<path d="M388.1 152.5L576.7 152.5" stroke="#4a4a4a" stroke-dasharray="11.3 2.4"/>
<path d="M406 152.5L525 152.5" stroke="#3a3a3a"/>
<path d="M388.1 169.5L576.7 169.5" stroke="#4a4a4a" stroke-dasharray="11.3 2.4"/>
<path d="M406 169.5L525 169.5" stroke="#3a3a3a"/>
<path d="M388.1 186.5L576.7 186.5" stroke="#4a4a4a" stroke-dasharray="11.3 2.4"/>
<path d="M406 186.5L525 186.5" stroke="#3a3a3a"/>
<path d="M388.1 203.5L576.7 203.5" stroke="#4a4a4a" stroke-dasharray="11.3 2.4"/>
<path d="M406 203.5L525 203.5" stroke="#3a3a3a"/>
<path d="M388.1 220.5L576.7 220.5" stroke="#4a4a4a" stroke-dasharray="11.3 2.4"/>
<path d="M406 220.5L525 220.5" stroke="#3a3a3a"/>
<path d="M388.1 237.5L576.7 237.5" stroke="#4a4a4a" stroke-dasharray="11.3 2.4"/>
<path d="M406 237.5L525 237.5" stroke="#3a3a3a"/>
<path d="M388.1 254.5L576.7 254.5" stroke="#4a4a4a" stroke-dasharray="11.3 2.4"/>
<path d="M406 254.5L525 254.5" stroke="#3a3a3a"/>
<path d="M388.1 271.5L576.7 271.5" stroke="#4a4a4a" stroke-dasharray="11.3 2.4"/>
<path d="M406 271.5L525 271.5" stroke="#3a3a3a"/>
<path d="M388.1 289.5L576.7 289.5" stroke="#4a4a4a" stroke-dasharray="11.3 2.4"/>
<path d="M406 289.5L525 289.5" stroke="#3a3a3a"/>
<path d="M388.1 306.5L576.7 306.5" stroke="#4a4a4a" stroke-dasharray="11.3 2.4"/>
<path d="M406 306.5L525 306.5" stroke="#3a3a3a"/>
<path d="M388.1 323.5L576.7 323.5" stroke="#4a4a4a" stroke-dasharray="11.3 2.4"/>
<path d="M406 323.5L525 323.5" stroke="#3a3a3a"/>
<path d="M388.1 340.5L576.7 340.5" stroke="#4a4a4a" stroke-dasharray="11.3 2.4"/>
<path d="M406 340.5L525 340.5" stroke="#3a3a3a"/>
<path d="M388.1 357.5L576.7 357.5" stroke="#4a4a4a" stroke-dasharray="11.3 2.4"/>
<path d="M406 357.5L525 357.5" stroke="#3a3a3a"/>
<path d="M388.1 374.5L576.7 374.5" stroke="#4a4a4a" stroke-dasharray="11.3 2.4"/>
<path d="M406 374.5L525 374.5" stroke="#3a3a3a"/>
<path d="M388.1 391.5L576.7 391.5" stroke="#4a4a4a" stroke-dasharray="11.3 2.4"/>
<path d="M406 391.5L525 391.5" stroke="#3a3a3a"/>
<path d="M388.1 413.5L459.4 413.5M388.1 437.5L459.4 437.5" stroke="#4a4a4a" stroke-dasharray="11.3 2.4"/>
<path d="M460 408.5L525 408.5" stroke="#3a3a3a"/>
<path d="M526 408.5L576.7 408.5" stroke="#4a4a4a" stroke-dasharray="11.3 2.4"/>
<path d="M460 425.5L525 425.5" stroke="#3a3a3a"/>
<path d="M526 425.5L576.7 425.5M460 442.5L576.7 442.5" stroke="#4a4a4a" stroke-dasharray="11.3 2.4"/>
<path d="M208.3 291.3L263.6 291.3L263.6 294.4L208.3 294.4ZM200.3 295.5L265.6 295.5" stroke="#cbcbcb"/>
<path d="M214.9 294.5L217.4 294.5M228.9 294.5L231.4 294.5M242.9 294.5L245.4 294.5M256.9 294.5L259.4 294.5" stroke="#cbcbcb" stroke-width="1.3"/>
<path d="M206.5 295.1L206.5 319.5M209.5 295.1L209.5 653.1" stroke="#cbcbcb"/>
<path d="M221.9 295.1L221.9 653.1M233.9 295.1L233.9 653.1" stroke="#cbcbcb" stroke-width="1.3"/>
<path d="M262.9 295.1L262.9 653.1" stroke="#cbcbcb" stroke-width="1.5"/>
<path d="M222.4 311.5L233.4 311.5M226.4 309.1L229.4 310.9" stroke="#cbcbcb"/>
<path d="M158.3 318.5L158.3 311.6L206.6 311.6" stroke="#cbcbcb" stroke-width="1.2"/>
<path d="M200.5 311.6L200.5 319.5M155.5 318.1L155.5 576.1" stroke="#cbcbcb"/>
<path d="M159.5 320.1L159.5 576.1" stroke="#909090"/>
<path d="M164.3 311.9L164.3 576.1" stroke="#cbcbcb" stroke-width="2.7"/>
<path d="M154.9 318.3L158.9 318.3M155.2 320L273.7 320M191.9 319.5L191.9 653.1" stroke="#cbcbcb" stroke-width="1.4"/>
<path d="M263.7 311.6L290.6 311.6L290.6 317.7" stroke="#cbcbcb" stroke-width="1.2"/>
<path d="M272.4 311.6L272.4 319.5" stroke="#cbcbcb" stroke-width="2.2"/>
<path d="M273.7 317.7L300.9 317.7L301.9 320.1L300.9 322.5L273.7 322.5" stroke="#cbcbcb" stroke-width="1.1"/>
<path d="M273.7 320.5L301.9 320.5M174.9 337.5L177.9 337.5M189.4 337.5L193.4 337.5M203.9 337.5L205.9 337.5M216.9 337.5L220.9 337.5M195.4 326.4L204.4 326.4L204.4 336.8L195.4 336.8ZM196.5 327.8L196.5 335.8M196.4 328.5L199.5 328.5M196.4 335.5L199.5 335.5M198.5 331.5L199.5 331.5M200.6 328.5L203.6 328.5M201.5 327.8L201.5 332.4M200.6 331.5L203.6 331.5M203.5 331.4L203.5 335.8M200.6 335.5L203.6 335.5M205.4 336.5L206.9 336.5" stroke="#cbcbcb"/>
<path d="M176.5 335.2H178.7V337.2H176.5Z" fill="#cbcbcb"/>
<path d="M177.2 335.8H178.7V336.6H177.2Z" fill="#000"/>
<path d="M213.4 336.5L214.9 336.5M216.4 337.5L218.9 337.5" stroke="#cbcbcb"/>
<path d="M222.5 326.3H229.2V336.7H222.5Z" fill="#cbcbcb"/>
<path d="M224.9 327.6H227.9V335.6H224.9Z" fill="#000"/>
<path d="M226.5 328.9L226.5 334.6" stroke="#222"/>
<path d="M229.2 336.5L231.4 336.5M155.2 336.5L157.9 336.5M159.9 336.5L162.9 336.5" stroke="#cbcbcb"/>
<circle cx="164.5" cy="323" r="0.5" stroke="#000" stroke-width="0.6"/>
<path d="M174.9 354.5L177.9 354.5M189.4 354.5L193.4 354.5M203.9 354.5L205.9 354.5M216.9 354.5L220.9 354.5M195.4 343.4L204.4 343.4L204.4 353.8L195.4 353.8ZM196.5 344.8L196.5 352.8M196.4 345.5L199.5 345.5M196.4 352.5L199.5 352.5M198.5 348.5L199.5 348.5M200.6 345.5L203.6 345.5M201.5 344.8L201.5 349.4M200.6 348.5L203.6 348.5M203.5 348.4L203.5 352.8M200.6 352.5L203.6 352.5M205.4 353.5L206.9 353.5" stroke="#cbcbcb"/>
<path d="M176.5 352.2H178.7V354.2H176.5Z" fill="#cbcbcb"/>
<path d="M177.2 352.8H178.7V353.6H177.2Z" fill="#000"/>
<path d="M213.4 353.5L214.9 353.5M216.4 354.5L218.9 354.5" stroke="#cbcbcb"/>
<path d="M222.5 343.3H229.2V353.7H222.5Z" fill="#cbcbcb"/>
<path d="M224.9 344.6H227.9V352.6H224.9Z" fill="#777"/>
<path d="M226.5 345.9L226.5 351.6" stroke="#222"/>
<path d="M229.2 353.5L231.4 353.5M155.2 353.5L157.9 353.5M159.9 353.5L162.9 353.5" stroke="#cbcbcb"/>
<circle cx="164.5" cy="340" r="0.5" stroke="#000" stroke-width="0.6"/>
<path d="M174.9 371.5L177.9 371.5M189.4 371.5L193.4 371.5M203.9 371.5L205.9 371.5M216.9 371.5L220.9 371.5M195.4 360.4L204.4 360.4L204.4 370.8L195.4 370.8ZM196.5 361.8L196.5 369.8M196.4 362.5L199.5 362.5M196.4 369.5L199.5 369.5M198.5 365.5L199.5 365.5M200.6 362.5L203.6 362.5M201.5 361.8L201.5 366.4M200.6 365.5L203.6 365.5M203.5 365.4L203.5 369.8M200.6 369.5L203.6 369.5M205.4 370.5L206.9 370.5" stroke="#cbcbcb"/>
<path d="M176.5 369.2H178.7V371.2H176.5Z" fill="#cbcbcb"/>
<path d="M177.2 369.8H178.7V370.6H177.2Z" fill="#000"/>
<path d="M213.4 370.5L214.9 370.5M216.4 371.5L218.9 371.5" stroke="#cbcbcb"/>
<path d="M222.5 360.3H229.2V370.7H222.5Z" fill="#cbcbcb"/>
<path d="M224.9 361.6H227.9V369.6H224.9Z" fill="#777"/>
<path d="M226.5 362.9L226.5 368.6" stroke="#222"/>
<path d="M229.2 370.5L231.4 370.5M155.2 370.5L157.9 370.5M159.9 370.5L162.9 370.5" stroke="#cbcbcb"/>
<circle cx="164.5" cy="357" r="0.5" stroke="#000" stroke-width="0.6"/>
<path d="M174.9 388.5L177.9 388.5M189.4 388.5L193.4 388.5M203.9 388.5L205.9 388.5M216.9 388.5L220.9 388.5M195.4 377.4L204.4 377.4L204.4 387.8L195.4 387.8ZM196.5 378.8L196.5 386.8M196.4 379.5L199.5 379.5M196.4 386.5L199.5 386.5M198.5 382.5L199.5 382.5M200.6 379.5L203.6 379.5M201.5 378.8L201.5 383.4M200.6 382.5L203.6 382.5M203.5 382.4L203.5 386.8M200.6 386.5L203.6 386.5M205.4 387.5L206.9 387.5" stroke="#cbcbcb"/>
<path d="M176.5 386.2H178.7V388.2H176.5Z" fill="#cbcbcb"/>
<path d="M177.2 386.8H178.7V387.6H177.2Z" fill="#000"/>
<path d="M213.4 387.5L214.9 387.5M216.4 388.5L218.9 388.5" stroke="#cbcbcb"/>
<path d="M222.5 377.3H229.2V387.7H222.5Z" fill="#cbcbcb"/>
<path d="M224.9 378.6H227.9V386.6H224.9Z" fill="#777"/>
<path d="M226.5 379.9L226.5 385.6" stroke="#222"/>
<path d="M229.2 387.5L231.4 387.5M155.2 387.5L157.9 387.5M159.9 387.5L162.9 387.5" stroke="#cbcbcb"/>
<circle cx="164.5" cy="374" r="0.5" stroke="#000" stroke-width="0.6"/>
<path d="M174.9 405.5L177.9 405.5M189.4 405.5L193.4 405.5M203.9 405.5L205.9 405.5M216.9 405.5L220.9 405.5M195.4 394.4L204.4 394.4L204.4 404.8L195.4 404.8ZM196.5 395.8L196.5 403.8M196.4 396.5L199.5 396.5M196.4 403.5L199.5 403.5M198.5 399.5L199.5 399.5M200.6 396.5L203.6 396.5M201.5 395.8L201.5 400.4M200.6 399.5L203.6 399.5M203.5 399.4L203.5 403.8M200.6 403.5L203.6 403.5M205.4 404.5L206.9 404.5" stroke="#cbcbcb"/>
<path d="M176.5 403.2H178.7V405.2H176.5Z" fill="#cbcbcb"/>
<path d="M177.2 403.8H178.7V404.6H177.2Z" fill="#000"/>
<path d="M213.4 404.5L214.9 404.5M216.4 405.5L218.9 405.5" stroke="#cbcbcb"/>
<path d="M222.5 394.3H229.2V404.7H222.5Z" fill="#cbcbcb"/>
<path d="M224.9 395.6H227.9V403.6H224.9Z" fill="#777"/>
<path d="M226.5 396.9L226.5 402.6" stroke="#222"/>
<path d="M229.2 404.5L231.4 404.5M155.2 404.5L157.9 404.5M159.9 404.5L162.9 404.5" stroke="#cbcbcb"/>
<circle cx="164.5" cy="391" r="0.5" stroke="#000" stroke-width="0.6"/>
<path d="M174.9 422.5L177.9 422.5M189.4 422.5L193.4 422.5M203.9 422.5L205.9 422.5M216.9 422.5L220.9 422.5M195.4 411.4L204.4 411.4L204.4 421.8L195.4 421.8ZM196.5 412.8L196.5 420.8M196.4 413.5L199.5 413.5M196.4 420.5L199.5 420.5M198.5 416.5L199.5 416.5M200.6 413.5L203.6 413.5M201.5 412.8L201.5 417.4M200.6 416.5L203.6 416.5M203.5 416.4L203.5 420.8M200.6 420.5L203.6 420.5M205.4 421.5L206.9 421.5" stroke="#cbcbcb"/>
<path d="M176.5 420.2H178.7V422.2H176.5Z" fill="#cbcbcb"/>
<path d="M177.2 420.8H178.7V421.6H177.2Z" fill="#000"/>
<path d="M213.4 421.5L214.9 421.5M216.4 422.5L218.9 422.5" stroke="#cbcbcb"/>
<path d="M222.5 411.3H229.2V421.7H222.5Z" fill="#cbcbcb"/>
<path d="M224.9 412.6H227.9V420.6H224.9Z" fill="#777"/>
<path d="M226.5 413.9L226.5 419.6" stroke="#222"/>
<path d="M229.2 421.5L231.4 421.5M155.2 421.5L157.9 421.5M159.9 421.5L162.9 421.5" stroke="#cbcbcb"/>
<circle cx="164.5" cy="408" r="0.5" stroke="#000" stroke-width="0.6"/>
<path d="M174.9 439.5L177.9 439.5M189.4 439.5L193.4 439.5M203.9 439.5L205.9 439.5M216.9 439.5L220.9 439.5M195.4 428.4L204.4 428.4L204.4 438.8L195.4 438.8ZM196.5 429.8L196.5 437.8M196.4 430.5L199.5 430.5M196.4 437.5L199.5 437.5M198.5 433.5L199.5 433.5M200.6 430.5L203.6 430.5M201.5 429.8L201.5 434.4M200.6 433.5L203.6 433.5M203.5 433.4L203.5 437.8M200.6 437.5L203.6 437.5M205.4 438.5L206.9 438.5" stroke="#cbcbcb"/>
<path d="M176.5 437.2H178.7V439.2H176.5Z" fill="#cbcbcb"/>
<path d="M177.2 437.8H178.7V438.6H177.2Z" fill="#000"/>
<path d="M213.4 438.5L214.9 438.5M216.4 439.5L218.9 439.5" stroke="#cbcbcb"/>
<path d="M222.5 428.3H229.2V438.7H222.5Z" fill="#cbcbcb"/>
<path d="M224.9 429.6H227.9V437.6H224.9Z" fill="#777"/>
<path d="M226.5 430.9L226.5 436.6" stroke="#222"/>
<path d="M229.2 438.5L231.4 438.5M155.2 438.5L157.9 438.5M159.9 438.5L162.9 438.5" stroke="#cbcbcb"/>
<circle cx="164.5" cy="425" r="0.5" stroke="#000" stroke-width="0.6"/>
<path d="M174.9 456.5L177.9 456.5M189.4 456.5L193.4 456.5M203.9 456.5L205.9 456.5M216.9 456.5L220.9 456.5M195.4 445.4L204.4 445.4L204.4 455.8L195.4 455.8ZM196.5 446.8L196.5 454.8M196.4 447.5L199.5 447.5M196.4 454.5L199.5 454.5M198.5 450.5L199.5 450.5M200.6 447.5L203.6 447.5M201.5 446.8L201.5 451.4M200.6 450.5L203.6 450.5M203.5 450.4L203.5 454.8M200.6 454.5L203.6 454.5M205.4 455.5L206.9 455.5" stroke="#cbcbcb"/>
<path d="M176.5 454.2H178.7V456.2H176.5Z" fill="#cbcbcb"/>
<path d="M177.2 454.8H178.7V455.6H177.2Z" fill="#000"/>
<path d="M213.4 455.5L214.9 455.5M216.4 456.5L218.9 456.5" stroke="#cbcbcb"/>
<path d="M222.5 445.3H229.2V455.7H222.5Z" fill="#cbcbcb"/>
<path d="M224.9 446.6H227.9V454.6H224.9Z" fill="#777"/>
<path d="M226.5 447.9L226.5 453.6" stroke="#222"/>
<path d="M229.2 455.5L231.4 455.5M155.2 455.5L157.9 455.5M159.9 455.5L162.9 455.5" stroke="#cbcbcb"/>
<circle cx="164.5" cy="442" r="0.5" stroke="#000" stroke-width="0.6"/>
<path d="M174.9 473.5L177.9 473.5M189.4 473.5L193.4 473.5M203.9 473.5L205.9 473.5M216.9 473.5L220.9 473.5M195.4 462.4L204.4 462.4L204.4 472.8L195.4 472.8ZM196.5 463.8L196.5 471.8M196.4 464.5L199.5 464.5M196.4 471.5L199.5 471.5M198.5 467.5L199.5 467.5M200.6 464.5L203.6 464.5M201.5 463.8L201.5 468.4M200.6 467.5L203.6 467.5M203.5 467.4L203.5 471.8M200.6 471.5L203.6 471.5M205.4 472.5L206.9 472.5" stroke="#cbcbcb"/>
<path d="M176.5 471.2H178.7V473.2H176.5Z" fill="#cbcbcb"/>
<path d="M177.2 471.8H178.7V472.6H177.2Z" fill="#000"/>
<path d="M213.4 472.5L214.9 472.5M216.4 473.5L218.9 473.5" stroke="#cbcbcb"/>
<path d="M222.5 462.3H229.2V472.7H222.5Z" fill="#cbcbcb"/>
<path d="M224.9 463.6H227.9V471.6H224.9Z" fill="#777"/>
<path d="M226.5 464.9L226.5 470.6" stroke="#222"/>
<path d="M229.2 472.5L231.4 472.5M155.2 472.5L157.9 472.5M159.9 472.5L162.9 472.5" stroke="#cbcbcb"/>
<circle cx="164.5" cy="459" r="0.5" stroke="#000" stroke-width="0.6"/>
<path d="M174.9 490.5L177.9 490.5M189.4 490.5L193.4 490.5M203.9 490.5L205.9 490.5M216.9 490.5L220.9 490.5M195.4 479.4L204.4 479.4L204.4 489.8L195.4 489.8ZM196.5 480.8L196.5 488.8M196.4 481.5L199.5 481.5M196.4 488.5L199.5 488.5M198.5 484.5L199.5 484.5M200.6 481.5L203.6 481.5M201.5 480.8L201.5 485.4M200.6 484.5L203.6 484.5M203.5 484.4L203.5 488.8M200.6 488.5L203.6 488.5M205.4 489.5L206.9 489.5" stroke="#cbcbcb"/>
<path d="M176.5 488.2H178.7V490.2H176.5Z" fill="#cbcbcb"/>
<path d="M177.2 488.8H178.7V489.6H177.2Z" fill="#000"/>
<path d="M213.4 489.5L214.9 489.5M216.4 490.5L218.9 490.5" stroke="#cbcbcb"/>
<path d="M222.5 479.3H229.2V489.7H222.5Z" fill="#cbcbcb"/>
<path d="M224.9 480.6H227.9V488.6H224.9Z" fill="#777"/>
<path d="M226.5 481.9L226.5 487.6" stroke="#222"/>
<path d="M229.2 489.5L231.4 489.5M155.2 489.5L157.9 489.5M159.9 489.5L162.9 489.5" stroke="#cbcbcb"/>
<circle cx="164.5" cy="476" r="0.5" stroke="#000" stroke-width="0.6"/>
<path d="M174.9 507.5L177.9 507.5M189.4 507.5L193.4 507.5M203.9 507.5L205.9 507.5M216.9 507.5L220.9 507.5M195.4 496.4L204.4 496.4L204.4 506.8L195.4 506.8ZM196.5 497.8L196.5 505.8M196.4 498.5L199.5 498.5M196.4 505.5L199.5 505.5M198.5 501.5L199.5 501.5M200.6 498.5L203.6 498.5M201.5 497.8L201.5 502.4M200.6 501.5L203.6 501.5M203.5 501.4L203.5 505.8M200.6 505.5L203.6 505.5M205.4 506.5L206.9 506.5" stroke="#cbcbcb"/>
<path d="M176.5 505.2H178.7V507.2H176.5Z" fill="#cbcbcb"/>
<path d="M177.2 505.8H178.7V506.6H177.2Z" fill="#000"/>
<path d="M213.4 506.5L214.9 506.5M216.4 507.5L218.9 507.5" stroke="#cbcbcb"/>
<path d="M222.5 496.3H229.2V506.7H222.5Z" fill="#cbcbcb"/>
<path d="M224.9 497.6H227.9V505.6H224.9Z" fill="#777"/>
<path d="M226.5 498.9L226.5 504.6" stroke="#222"/>
<path d="M229.2 506.5L231.4 506.5M155.2 506.5L157.9 506.5M159.9 506.5L162.9 506.5" stroke="#cbcbcb"/>
<circle cx="164.5" cy="493" r="0.5" stroke="#000" stroke-width="0.6"/>
<path d="M174.9 524.5L177.9 524.5M189.4 524.5L193.4 524.5M203.9 524.5L205.9 524.5M216.9 524.5L220.9 524.5M195.4 513.4L204.4 513.4L204.4 523.8L195.4 523.8ZM196.5 514.8L196.5 522.8M196.4 515.5L199.5 515.5M196.4 522.5L199.5 522.5M198.5 518.5L199.5 518.5M200.6 515.5L203.6 515.5M201.5 514.8L201.5 519.4M200.6 518.5L203.6 518.5M203.5 518.4L203.5 522.8M200.6 522.5L203.6 522.5M205.4 523.5L206.9 523.5" stroke="#cbcbcb"/>
<path d="M176.5 522.2H178.7V524.2H176.5Z" fill="#cbcbcb"/>
<path d="M177.2 522.8H178.7V523.6H177.2Z" fill="#000"/>
<path d="M213.4 523.5L214.9 523.5M216.4 524.5L218.9 524.5" stroke="#cbcbcb"/>
<path d="M222.5 513.3H229.2V523.7H222.5Z" fill="#cbcbcb"/>
<path d="M224.9 514.6H227.9V522.6H224.9Z" fill="#777"/>
<path d="M226.5 515.9L226.5 521.6" stroke="#222"/>
<path d="M229.2 523.5L231.4 523.5M155.2 523.5L157.9 523.5M159.9 523.5L162.9 523.5" stroke="#cbcbcb"/>
<circle cx="164.5" cy="510" r="0.5" stroke="#000" stroke-width="0.6"/>
<path d="M174.9 541.5L177.9 541.5M189.4 541.5L193.4 541.5M203.9 541.5L205.9 541.5M216.9 541.5L220.9 541.5M195.4 530.4L204.4 530.4L204.4 540.8L195.4 540.8ZM196.5 531.8L196.5 539.8M196.4 532.5L199.5 532.5M196.4 539.5L199.5 539.5M198.5 535.5L199.5 535.5M200.6 532.5L203.6 532.5M201.5 531.8L201.5 536.4M200.6 535.5L203.6 535.5M203.5 535.4L203.5 539.8M200.6 539.5L203.6 539.5M205.4 540.5L206.9 540.5" stroke="#cbcbcb"/>
<path d="M176.5 539.2H178.7V541.2H176.5Z" fill="#cbcbcb"/>
<path d="M177.2 539.8H178.7V540.6H177.2Z" fill="#000"/>
<path d="M213.4 540.5L214.9 540.5M216.4 541.5L218.9 541.5" stroke="#cbcbcb"/>
<path d="M222.5 530.3H229.2V540.7H222.5Z" fill="#cbcbcb"/>
<path d="M224.9 531.6H227.9V539.6H224.9Z" fill="#777"/>
<path d="M226.5 532.9L226.5 538.6" stroke="#222"/>
<path d="M229.2 540.5L231.4 540.5M155.2 540.5L157.9 540.5M159.9 540.5L162.9 540.5" stroke="#cbcbcb"/>
<circle cx="164.5" cy="527" r="0.5" stroke="#000" stroke-width="0.6"/>
<path d="M174.9 558.5L177.9 558.5M189.4 558.5L193.4 558.5M203.9 558.5L205.9 558.5M216.9 558.5L220.9 558.5M195.4 547.4L204.4 547.4L204.4 557.8L195.4 557.8ZM196.5 548.8L196.5 556.8M196.4 549.5L199.5 549.5M196.4 556.5L199.5 556.5M198.5 552.5L199.5 552.5M200.6 549.5L203.6 549.5M201.5 548.8L201.5 553.4M200.6 552.5L203.6 552.5M203.5 552.4L203.5 556.8M200.6 556.5L203.6 556.5M205.4 557.5L206.9 557.5" stroke="#cbcbcb"/>
<path d="M176.5 556.2H178.7V558.2H176.5Z" fill="#cbcbcb"/>
<path d="M177.2 556.8H178.7V557.6H177.2Z" fill="#000"/>
<path d="M213.4 557.5L214.9 557.5M216.4 558.5L218.9 558.5" stroke="#cbcbcb"/>
<path d="M222.5 547.3H229.2V557.7H222.5Z" fill="#cbcbcb"/>
<path d="M224.9 548.6H227.9V556.6H224.9Z" fill="#777"/>
<path d="M226.5 549.9L226.5 555.6" stroke="#222"/>
<path d="M229.2 557.5L231.4 557.5M155.2 557.5L157.9 557.5M159.9 557.5L162.9 557.5" stroke="#cbcbcb"/>
<circle cx="164.5" cy="544" r="0.5" stroke="#000" stroke-width="0.6"/>
<path d="M174.9 575.5L177.9 575.5M189.4 575.5L193.4 575.5M203.9 575.5L205.9 575.5M216.9 575.5L220.9 575.5M195.4 564.4L204.4 564.4L204.4 574.8L195.4 574.8ZM196.5 565.8L196.5 573.8M196.4 566.5L199.5 566.5M196.4 573.5L199.5 573.5M198.5 569.5L199.5 569.5M200.6 566.5L203.6 566.5M201.5 565.8L201.5 570.4M200.6 569.5L203.6 569.5M203.5 569.4L203.5 573.8M200.6 573.5L203.6 573.5M205.4 574.5L206.9 574.5" stroke="#cbcbcb"/>
<path d="M176.5 573.2H178.7V575.2H176.5Z" fill="#cbcbcb"/>
<path d="M177.2 573.8H178.7V574.6H177.2Z" fill="#000"/>
<path d="M213.4 574.5L214.9 574.5M216.4 575.5L218.9 575.5" stroke="#cbcbcb"/>
<path d="M222.5 564.3H229.2V574.7H222.5Z" fill="#cbcbcb"/>
<path d="M224.9 565.6H227.9V573.6H224.9Z" fill="#777"/>
<path d="M226.5 566.9L226.5 572.6" stroke="#222"/>
<path d="M229.2 574.5L231.4 574.5M155.2 574.5L157.9 574.5M159.9 574.5L162.9 574.5" stroke="#cbcbcb"/>
<circle cx="164.5" cy="561" r="0.5" stroke="#000" stroke-width="0.6"/>
<path d="M242.1 314.3L249.7 318.7L242.1 318.9Z" fill="#cbcbcb"/>
<path d="M243.5 322L251.5 327.8L244.7 333L245.3 336.8L243.5 339L251.5 344.8L244.7 350L245.3 353.8L243.5 356L251.5 361.8L244.7 367L245.3 370.8L243.5 373L251.5 378.8L244.7 384L245.3 387.8L243.5 390L251.5 395.8L244.7 401L245.3 404.8L243.5 407L251.5 412.8L244.7 418L245.3 421.8L243.5 424L251.5 429.8L244.7 435L245.3 438.8L243.5 441L251.5 446.8L244.7 452L245.3 455.8L243.5 458L251.5 463.8L244.7 469L245.3 472.8L243.5 475L251.5 480.8L244.7 486L245.3 489.8L243.5 492L251.5 497.8L244.7 503L245.3 506.8L243.5 509L251.5 514.8L244.7 520L245.3 523.8L243.5 526L251.5 531.8L244.7 537L245.3 540.8L243.5 543L251.5 548.8L244.7 554L245.3 557.8L243.5 560L251.5 565.8L244.7 571L245.3 574.8L243.5 577L251.5 582.8L244.7 588L245.3 591.8L243.5 594L251.5 599.8L244.7 605L245.3 608.8L243.5 611L251.5 616.8L244.7 622L245.3 625.8L243.5 628L251.5 633.8L244.7 639L245.3 642.8L244.3 644.1L255.4 651.6" stroke="#cbcbcb" stroke-width="4.2"/>
<path d="M254.5 321.2L254.5 330.8" stroke="#cbcbcb" stroke-width="2.6"/>
<path d="M254.3 330.1L262.3 330.1" stroke="#cbcbcb" stroke-width="1.6"/>
<path d="M254.5 338.2L254.5 347.8" stroke="#cbcbcb" stroke-width="2.6"/>
<path d="M254.3 347.1L262.3 347.1" stroke="#cbcbcb" stroke-width="1.6"/>
<path d="M254.5 355.2L254.5 364.8" stroke="#cbcbcb" stroke-width="2.6"/>
<path d="M254.3 364.1L262.3 364.1" stroke="#cbcbcb" stroke-width="1.6"/>
<path d="M254.5 372.2L254.5 381.8" stroke="#cbcbcb" stroke-width="2.6"/>
<path d="M254.3 381.1L262.3 381.1" stroke="#cbcbcb" stroke-width="1.6"/>
<path d="M254.5 389.2L254.5 398.8" stroke="#cbcbcb" stroke-width="2.6"/>
<path d="M254.3 398.1L262.3 398.1" stroke="#cbcbcb" stroke-width="1.6"/>
<path d="M254.5 406.2L254.5 415.8" stroke="#cbcbcb" stroke-width="2.6"/>
<path d="M254.3 415.1L262.3 415.1" stroke="#cbcbcb" stroke-width="1.6"/>
<path d="M254.5 423.2L254.5 432.8" stroke="#cbcbcb" stroke-width="2.6"/>
<path d="M254.3 432.1L262.3 432.1" stroke="#cbcbcb" stroke-width="1.6"/>
<path d="M254.5 440.2L254.5 449.8" stroke="#cbcbcb" stroke-width="2.6"/>
<path d="M254.3 449.1L262.3 449.1" stroke="#cbcbcb" stroke-width="1.6"/>
<path d="M254.5 457.2L254.5 466.8" stroke="#cbcbcb" stroke-width="2.6"/>
<path d="M254.3 466.1L262.3 466.1" stroke="#cbcbcb" stroke-width="1.6"/>
<path d="M254.5 474.2L254.5 483.8" stroke="#cbcbcb" stroke-width="2.6"/>
<path d="M254.3 483.1L262.3 483.1" stroke="#cbcbcb" stroke-width="1.6"/>
<path d="M254.5 491.2L254.5 500.8" stroke="#cbcbcb" stroke-width="2.6"/>
<path d="M254.3 500.1L262.3 500.1" stroke="#cbcbcb" stroke-width="1.6"/>
<path d="M254.5 508.2L254.5 517.8" stroke="#cbcbcb" stroke-width="2.6"/>
<path d="M254.3 517.1L262.3 517.1" stroke="#cbcbcb" stroke-width="1.6"/>
<path d="M254.5 525.2L254.5 534.8" stroke="#cbcbcb" stroke-width="2.6"/>
<path d="M254.3 534.1L262.3 534.1" stroke="#cbcbcb" stroke-width="1.6"/>
<path d="M254.5 542.2L254.5 551.8" stroke="#cbcbcb" stroke-width="2.6"/>
<path d="M254.3 551.1L262.3 551.1" stroke="#cbcbcb" stroke-width="1.6"/>
<path d="M254.5 559.2L254.5 568.8" stroke="#cbcbcb" stroke-width="2.6"/>
<path d="M254.3 568.1L262.3 568.1" stroke="#cbcbcb" stroke-width="1.6"/>
<path d="M254.5 576.2L254.5 585.8" stroke="#cbcbcb" stroke-width="2.6"/>
<path d="M254.3 585.1L262.3 585.1" stroke="#cbcbcb" stroke-width="1.6"/>
<path d="M254.5 593.2L254.5 602.8" stroke="#cbcbcb" stroke-width="2.6"/>
<path d="M254.3 602.1L262.3 602.1" stroke="#cbcbcb" stroke-width="1.6"/>
<path d="M254.5 610.2L254.5 619.8" stroke="#cbcbcb" stroke-width="2.6"/>
<path d="M254.3 619.1L262.3 619.1" stroke="#cbcbcb" stroke-width="1.6"/>
<path d="M233.9 643.5L243.9 643.5" stroke="#cbcbcb"/>
<path d="M256.4 640.1H261.4V651.6H256.4Z" fill="#cbcbcb"/>
<path d="M257.9 642.1H259.9V650.1H257.9Z" fill="#000"/>
<path d="M235.9 616.5L242.9 616.5" stroke="#cbcbcb"/>
<path d="M262.2 321.4H273.7V626.1H262.2Z" fill="#cbcbcb"/>
<path d="M273.5 311.6L273.5 626.1" stroke="#cbcbcb"/>
<path d="M263.8 321.8H271.2V325.3H263.8ZM265.7 329.8H269.5V332.2H265.7Z" fill="#000"/>
<circle cx="272.9" cy="323.4" r="0.5" stroke="#000" stroke-width="0.6"/>
<path d="M263.8 338.8H271.2V342.3H263.8Z" fill="#000"/>
<path d="M265.1 344H270.9V353.6H265.1Z" fill="#7c7c7c"/>
<path d="M266.2 347.7H269.5V349.4H266.2Z" fill="#000"/>
<path d="M265.1 348.5L270.9 348.5" stroke="#aaa"/>
<circle cx="272.9" cy="340.4" r="0.5" stroke="#000" stroke-width="0.6"/>
<path d="M263.8 355.8H271.2V359.3H263.8Z" fill="#000"/>
<path d="M265.1 361H270.9V370.6H265.1Z" fill="#7c7c7c"/>
<path d="M266.2 364.7H269.5V366.4H266.2Z" fill="#000"/>
<path d="M265.1 365.5L270.9 365.5" stroke="#aaa"/>
<circle cx="272.9" cy="357.4" r="0.5" stroke="#000" stroke-width="0.6"/>
<path d="M263.8 372.8H271.2V376.3H263.8Z" fill="#000"/>
<path d="M265.1 378H270.9V387.6H265.1Z" fill="#7c7c7c"/>
<path d="M266.2 381.7H269.5V383.4H266.2Z" fill="#000"/>
<path d="M265.1 382.5L270.9 382.5" stroke="#aaa"/>
<circle cx="272.9" cy="374.4" r="0.5" stroke="#000" stroke-width="0.6"/>
<path d="M263.8 389.8H271.2V393.3H263.8Z" fill="#000"/>
<path d="M265.1 395H270.9V404.6H265.1Z" fill="#7c7c7c"/>
<path d="M266.2 398.7H269.5V400.4H266.2Z" fill="#000"/>
<path d="M265.1 399.5L270.9 399.5" stroke="#aaa"/>
<circle cx="272.9" cy="391.4" r="0.5" stroke="#000" stroke-width="0.6"/>
<path d="M263.8 406.8H271.2V410.3H263.8Z" fill="#000"/>
<path d="M265.1 412H270.9V421.6H265.1Z" fill="#7c7c7c"/>
<path d="M266.2 415.7H269.5V417.4H266.2Z" fill="#000"/>
<path d="M265.1 416.5L270.9 416.5" stroke="#aaa"/>
<circle cx="272.9" cy="408.4" r="0.5" stroke="#000" stroke-width="0.6"/>
<path d="M263.8 423.8H271.2V427.3H263.8Z" fill="#000"/>
<path d="M265.1 429H270.9V438.6H265.1Z" fill="#7c7c7c"/>
<path d="M266.2 432.7H269.5V434.4H266.2Z" fill="#000"/>
<path d="M265.1 433.5L270.9 433.5" stroke="#aaa"/>
<circle cx="272.9" cy="425.4" r="0.5" stroke="#000" stroke-width="0.6"/>
<path d="M263.8 440.8H271.2V444.3H263.8Z" fill="#000"/>
<path d="M265.1 446H270.9V455.6H265.1Z" fill="#7c7c7c"/>
<path d="M266.2 449.7H269.5V451.4H266.2Z" fill="#000"/>
<path d="M265.1 450.5L270.9 450.5" stroke="#aaa"/>
<circle cx="272.9" cy="442.4" r="0.5" stroke="#000" stroke-width="0.6"/>
<path d="M263.8 457.8H271.2V461.3H263.8Z" fill="#000"/>
<path d="M265.1 463H270.9V472.6H265.1Z" fill="#7c7c7c"/>
<path d="M266.2 466.7H269.5V468.4H266.2Z" fill="#000"/>
<path d="M265.1 467.5L270.9 467.5" stroke="#aaa"/>
<circle cx="272.9" cy="459.4" r="0.5" stroke="#000" stroke-width="0.6"/>
<path d="M263.8 474.8H271.2V478.3H263.8Z" fill="#000"/>
<path d="M265.1 480H270.9V489.6H265.1Z" fill="#7c7c7c"/>
<path d="M266.2 483.7H269.5V485.4H266.2Z" fill="#000"/>
<path d="M265.1 484.5L270.9 484.5" stroke="#aaa"/>
<circle cx="272.9" cy="476.4" r="0.5" stroke="#000" stroke-width="0.6"/>
<path d="M263.8 491.8H271.2V495.3H263.8Z" fill="#000"/>
<path d="M265.1 497H270.9V506.6H265.1Z" fill="#7c7c7c"/>
<path d="M266.2 500.7H269.5V502.4H266.2Z" fill="#000"/>
<path d="M265.1 501.5L270.9 501.5" stroke="#aaa"/>
<circle cx="272.9" cy="493.4" r="0.5" stroke="#000" stroke-width="0.6"/>
<path d="M263.8 508.8H271.2V512.3H263.8Z" fill="#000"/>
<path d="M265.1 514H270.9V523.6H265.1Z" fill="#7c7c7c"/>
<path d="M266.2 517.7H269.5V519.4H266.2Z" fill="#000"/>
<path d="M265.1 518.5L270.9 518.5" stroke="#aaa"/>
<circle cx="272.9" cy="510.4" r="0.5" stroke="#000" stroke-width="0.6"/>
<path d="M263.8 525.8H271.2V529.3H263.8Z" fill="#000"/>
<path d="M265.1 531H270.9V540.6H265.1Z" fill="#7c7c7c"/>
<path d="M266.2 534.7H269.5V536.4H266.2Z" fill="#000"/>
<path d="M265.1 535.5L270.9 535.5" stroke="#aaa"/>
<circle cx="272.9" cy="527.4" r="0.5" stroke="#000" stroke-width="0.6"/>
<path d="M263.8 542.8H271.2V546.3H263.8Z" fill="#000"/>
<path d="M265.1 548H270.9V557.6H265.1Z" fill="#7c7c7c"/>
<path d="M266.2 551.7H269.5V553.4H266.2Z" fill="#000"/>
<path d="M265.1 552.5L270.9 552.5" stroke="#aaa"/>
<circle cx="272.9" cy="544.4" r="0.5" stroke="#000" stroke-width="0.6"/>
<path d="M263.8 559.8H271.2V563.3H263.8Z" fill="#000"/>
<path d="M265.1 565H270.9V574.6H265.1Z" fill="#7c7c7c"/>
<path d="M266.2 568.7H269.5V570.4H266.2Z" fill="#000"/>
<path d="M265.1 569.5L270.9 569.5" stroke="#aaa"/>
<circle cx="272.9" cy="561.4" r="0.5" stroke="#000" stroke-width="0.6"/>
<path d="M263.8 576.8H271.2V580H263.8ZM265.7 585L269.3 585L267.5 587.8ZM263.8 593.8H271.2V597H263.8ZM265.7 602L269.3 602L267.5 604.8ZM263.8 610.8H271.2V614H263.8ZM265.7 619L269.3 619L267.5 621.8Z" fill="#000"/>
<path d="M159.3 575.5L159.3 654.1" stroke="#cbcbcb" stroke-width="2"/>
<path d="M159.3 578.5L191.9 578.5M159.3 600.5L191.9 600.5" stroke="#cbcbcb"/>
<text x="175.4" y="597.5" font-size="2.6" fill="#cbcbcb">C1</text>
<text x="199.9" y="597.5" font-size="2.6" fill="#cbcbcb">M1</text>
<path d="M160.9 598.5L164.9 598.5M188.9 598.5L192.9 598.5M203.9 598.5L207.9 598.5M159.3 623.5L191.9 623.5" stroke="#cbcbcb"/>
<text x="175.4" y="621" font-size="2.6" fill="#cbcbcb">C1</text>
<text x="199.9" y="621" font-size="2.6" fill="#cbcbcb">M1</text>
<path d="M160.9 621.5L164.9 621.5M188.9 621.5L192.9 621.5M203.9 621.5L207.9 621.5" stroke="#cbcbcb"/>
<path d="M209.5 575.5L209.5 653.1" stroke="#cbcbcb" stroke-width="2.6"/>
<path d="M166.5 585.9L174.9 585.9L174.9 596.7L166.5 596.7Z" stroke="#cbcbcb" stroke-width="1.1"/>
<path d="M169.5 587.7L169.5 596.7M171.5 587.7L171.5 596.7M167.9 587.5L173.5 587.5" stroke="#cbcbcb"/>
<path d="M166.5 609.4L174.9 609.4L174.9 620.5L166.5 620.5Z" stroke="#cbcbcb" stroke-width="1.1"/>
<path d="M169.5 611.2L169.5 620.5M171.5 611.2L171.5 620.5M167.9 611.5L173.5 611.5" stroke="#cbcbcb"/>
<path d="M166.5 639.8L174.9 639.8L174.9 651.6L166.5 651.6Z" stroke="#cbcbcb" stroke-width="1.1"/>
<path d="M169.5 641.6L169.5 651.6M171.5 641.6L171.5 651.6M167.9 641.5L173.5 641.5" stroke="#cbcbcb"/>
<path d="M186.1 641.4H189.1V643H186.1Z" fill="#ffffff"/>
<path d="M149.9 576.6L151.9 579.6L154.9 580.1L158.4 577.1M145.9 623.1L147.9 627.1L152.9 629.1L158.4 624.6M153.9 625.1L153.9 631.6" stroke="#cbcbcb" stroke-width="1.6"/>
<path d="M223.9 581H231.3V591H223.9Z" fill="#cbcbcb"/>
<path d="M226.5 582.4H229.3V588.8H226.5Z" fill="#000"/>
<path d="M223.9 597.9H231.3V608.1H223.9Z" fill="#cbcbcb"/>
<path d="M226.5 599.3H229.3V605.9H226.5Z" fill="#000"/>
<path d="M223.9 615.1H231.3V625.1H223.9Z" fill="#cbcbcb"/>
<path d="M226.5 616.5H229.3V622.9H226.5Z" fill="#000"/>
<path d="M159.3 653.1L208.9 654.7" stroke="#cbcbcb" stroke-width="0.9"/>
<path d="M273.9 602.5H293.5V605.5H273.9Z" fill="#cbcbcb"/>
<path d="M292.9 602.5L292.9 626.6" stroke="#cbcbcb" stroke-width="2"/>
<path d="M312.9 601.1L312.9 626.6" stroke="#cbcbcb" stroke-width="2.4"/>
<path d="M293.5 604.5L311.9 604.5" stroke="#cbcbcb"/>
<path d="M293.5 605.5H297.4V608.6H293.5Z" fill="#cbcbcb"/>
<path d="M273.9 610.5L313.4 610.5" stroke="#cbcbcb"/>
<path d="M293.9 621.6H297.9V625.6H293.9Z" fill="#cbcbcb"/>
<path d="M273.9 626.5L313.9 626.5" stroke="#cbcbcb"/>
<path d="M281.9 607.1H289.4V608.7H281.9ZM299.9 608.7H304.4V610.1H299.9Z" fill="#cbcbcb"/>
<path d="M137 294.5L325.6 294.5M137 320.5L325.6 320.5" stroke="#4a4a4a" stroke-dasharray="11.3 2.4"/>
<path d="M154.9 320.5L273.9 320.5" stroke="#3a3a3a"/>
<path d="M137 337.5L325.6 337.5" stroke="#4a4a4a" stroke-dasharray="11.3 2.4"/>
<path d="M154.9 337.5L273.9 337.5" stroke="#3a3a3a"/>
<path d="M137 354.5L325.6 354.5" stroke="#4a4a4a" stroke-dasharray="11.3 2.4"/>
<path d="M154.9 354.5L273.9 354.5" stroke="#3a3a3a"/>
<path d="M137 371.5L325.6 371.5" stroke="#4a4a4a" stroke-dasharray="11.3 2.4"/>
<path d="M154.9 371.5L273.9 371.5" stroke="#3a3a3a"/>
<path d="M137 388.5L325.6 388.5" stroke="#4a4a4a" stroke-dasharray="11.3 2.4"/>
<path d="M154.9 388.5L273.9 388.5" stroke="#3a3a3a"/>
<path d="M137 405.5L325.6 405.5" stroke="#4a4a4a" stroke-dasharray="11.3 2.4"/>
<path d="M154.9 405.5L273.9 405.5" stroke="#3a3a3a"/>
<path d="M137 422.5L325.6 422.5" stroke="#4a4a4a" stroke-dasharray="11.3 2.4"/>
<path d="M154.9 422.5L273.9 422.5" stroke="#3a3a3a"/>
<path d="M137 439.5L325.6 439.5" stroke="#4a4a4a" stroke-dasharray="11.3 2.4"/>
<path d="M154.9 439.5L273.9 439.5" stroke="#3a3a3a"/>
<path d="M137 456.5L325.6 456.5" stroke="#4a4a4a" stroke-dasharray="11.3 2.4"/>
<path d="M154.9 456.5L273.9 456.5" stroke="#3a3a3a"/>
<path d="M137 473.5L325.6 473.5" stroke="#4a4a4a" stroke-dasharray="11.3 2.4"/>
<path d="M154.9 473.5L273.9 473.5" stroke="#3a3a3a"/>
<path d="M137 490.5L325.6 490.5" stroke="#4a4a4a" stroke-dasharray="11.3 2.4"/>
<path d="M154.9 490.5L273.9 490.5" stroke="#3a3a3a"/>
<path d="M137 507.5L325.6 507.5" stroke="#4a4a4a" stroke-dasharray="11.3 2.4"/>
<path d="M154.9 507.5L273.9 507.5" stroke="#3a3a3a"/>
<path d="M137 524.5L325.6 524.5" stroke="#4a4a4a" stroke-dasharray="11.3 2.4"/>
<path d="M154.9 524.5L273.9 524.5" stroke="#3a3a3a"/>
<path d="M137 541.5L325.6 541.5" stroke="#4a4a4a" stroke-dasharray="11.3 2.4"/>
<path d="M154.9 541.5L273.9 541.5" stroke="#3a3a3a"/>
<path d="M137 558.5L325.6 558.5" stroke="#4a4a4a" stroke-dasharray="11.3 2.4"/>
<path d="M154.9 558.5L273.9 558.5" stroke="#3a3a3a"/>
<path d="M137 575.5L325.6 575.5" stroke="#4a4a4a" stroke-dasharray="11.3 2.4"/>
<path d="M154.9 575.5L273.9 575.5" stroke="#3a3a3a"/>
<path d="M137 597.5L208.3 597.5M137 621.5L208.3 621.5" stroke="#4a4a4a" stroke-dasharray="11.3 2.4"/>
<path d="M208.9 592.5L273.9 592.5" stroke="#3a3a3a"/>
<path d="M274.9 592.5L325.6 592.5" stroke="#4a4a4a" stroke-dasharray="11.3 2.4"/>
<path d="M208.9 609.5L273.9 609.5" stroke="#3a3a3a"/>
<path d="M274.9 609.5L325.6 609.5M208.9 626.5L325.6 626.5" stroke="#4a4a4a" stroke-dasharray="11.3 2.4"/>
<path d="M720 119.8L720 131" stroke="#00ffff" stroke-width="2"/>
<path d="M720 119.5L724.8 119.5" stroke="#00ffff"/>
<path d="M720.3 118.9H721.3V120.9H720.3Z" fill="#00ffff"/>
<path d="M724.5 118.9L724.5 131M726.6 119.4L731.2 119.4L731.2 131" stroke="#00ffff"/>
<path d="M743.3 119.8L743.3 131" stroke="#00ffff" stroke-width="2"/>
<path d="M743.3 119.5L748.8 119.5" stroke="#00ffff"/>
<path d="M743.6 118.9H744.6V120.9H743.6Z" fill="#00ffff"/>
<path d="M748.5 118.9L748.5 131" stroke="#00ffff"/>
<path d="M754 131L754 119.4L755.2 118L767 118L767 131M760.5 118L760.5 131" stroke="#00ffff" stroke-width="2"/>
<path d="M753 130.5L768 130.5M774.5 131L774.5 119.4L779.6 119.4L779.6 131M781.5 118.8L781.5 131" stroke="#00ffff"/>
<path d="M788.5 117.5L795.4 117.5L795.4 125.4L788.5 125.4Z" stroke="#00ffff" stroke-width="1.1"/>
<path d="M788 117H795.9V119.9H788Z" fill="#00ffff"/>
<path d="M801.5 118.8L801.5 131" stroke="#00ffff"/>
<path d="M805.9 119.8L805.9 131" stroke="#00ffff" stroke-width="2"/>
<path d="M805.9 119.5L811.2 119.5" stroke="#00ffff"/>
<path d="M806.2 118.9H807.2V120.9H806.2Z" fill="#00ffff"/>
<path d="M810.5 118.9L810.5 131" stroke="#00ffff"/>
<path d="M818 131L818 119.4L819.2 118L831 118L831 131M824.5 118L824.5 131" stroke="#00ffff" stroke-width="2"/>
<path d="M817 130.5L832 130.5M837.6 131L837.6 119.4L842.6 119.4L842.6 131" stroke="#00ffff"/>
<path d="M854.6 131L854.6 119.4L858.6 119.4" stroke="#00ffff" stroke-width="1.5"/>
<path d="M857.8 125.5L859.4 125.5M861.5 119.4L861.5 131M861 119.5L866.8 119.5" stroke="#00ffff"/>
<path d="M866 119.4L866 131" stroke="#00ffff" stroke-width="1.7"/>
<path d="M720 136.8L720 148" stroke="#00ffff" stroke-width="2"/>
<path d="M720 136.5L724.8 136.5" stroke="#00ffff"/>
<path d="M720.3 135.9H721.3V137.9H720.3Z" fill="#00ffff"/>
<path d="M724.5 135.9L724.5 148M726.6 136.4L731.2 136.4L731.2 148" stroke="#00ffff"/>
<path d="M743.3 136.8L743.3 148" stroke="#00ffff" stroke-width="2"/>
<path d="M743.3 136.5L748.8 136.5" stroke="#00ffff"/>
<path d="M743.6 135.9H744.6V137.9H743.6Z" fill="#00ffff"/>
<path d="M748.5 135.9L748.5 148" stroke="#00ffff"/>
<path d="M754 148L754 136.4L755.2 135L767 135L767 148M760.5 135L760.5 148" stroke="#00ffff" stroke-width="2"/>
<path d="M753 147.5L768 147.5M774.5 148L774.5 136.4L779.6 136.4L779.6 148M781.5 135.8L781.5 148" stroke="#00ffff"/>
<path d="M788.5 134.5L795.4 134.5L795.4 142.4L788.5 142.4Z" stroke="#00ffff" stroke-width="1.1"/>
<path d="M788 134H795.9V136.9H788Z" fill="#00ffff"/>
<path d="M801.5 135.8L801.5 148" stroke="#00ffff"/>
<path d="M805.9 136.8L805.9 148" stroke="#00ffff" stroke-width="2"/>
<path d="M805.9 136.5L811.2 136.5" stroke="#00ffff"/>
<path d="M806.2 135.9H807.2V137.9H806.2Z" fill="#00ffff"/>
<path d="M810.5 135.9L810.5 148" stroke="#00ffff"/>
<path d="M818 148L818 136.4L819.2 135L831 135L831 148M824.5 135L824.5 148" stroke="#00ffff" stroke-width="2"/>
<path d="M817 147.5L832 147.5M837.6 148L837.6 136.4L842.6 136.4L842.6 148" stroke="#00ffff"/>
<path d="M854.6 148L854.6 136.4L858.6 136.4" stroke="#00ffff" stroke-width="1.5"/>
<path d="M857.8 142.5L859.4 142.5M861.5 136.4L861.5 148M861 136.5L866.8 136.5" stroke="#00ffff"/>
<path d="M866 136.4L866 148" stroke="#00ffff" stroke-width="1.7"/>
<path d="M720 153.8L720 165" stroke="#00ffff" stroke-width="2"/>
<path d="M720 153.5L724.8 153.5" stroke="#00ffff"/>
<path d="M720.3 152.9H721.3V154.9H720.3Z" fill="#00ffff"/>
<path d="M724.5 152.9L724.5 165M726.6 153.4L731.2 153.4L731.2 165" stroke="#00ffff"/>
<path d="M743.3 153.8L743.3 165" stroke="#00ffff" stroke-width="2"/>
<path d="M743.3 153.5L748.8 153.5" stroke="#00ffff"/>
<path d="M743.6 152.9H744.6V154.9H743.6Z" fill="#00ffff"/>
<path d="M748.5 152.9L748.5 165" stroke="#00ffff"/>
<path d="M754 165L754 153.4L755.2 152L767 152L767 165M760.5 152L760.5 165" stroke="#00ffff" stroke-width="2"/>
<path d="M753 164.5L768 164.5M774.5 165L774.5 153.4L779.6 153.4L779.6 165M781.5 152.8L781.5 165" stroke="#00ffff"/>
<path d="M788.5 151.5L795.4 151.5L795.4 159.4L788.5 159.4Z" stroke="#00ffff" stroke-width="1.1"/>
<path d="M788 151H795.9V153.9H788Z" fill="#00ffff"/>
<path d="M801.5 152.8L801.5 165" stroke="#00ffff"/>
<path d="M805.9 153.8L805.9 165" stroke="#00ffff" stroke-width="2"/>
<path d="M805.9 153.5L811.2 153.5" stroke="#00ffff"/>
<path d="M806.2 152.9H807.2V154.9H806.2Z" fill="#00ffff"/>
<path d="M810.5 152.9L810.5 165" stroke="#00ffff"/>
<path d="M818 165L818 153.4L819.2 152L831 152L831 165M824.5 152L824.5 165" stroke="#00ffff" stroke-width="2"/>
<path d="M817 164.5L832 164.5M837.6 165L837.6 153.4L842.6 153.4L842.6 165" stroke="#00ffff"/>
<path d="M854.6 165L854.6 153.4L858.6 153.4" stroke="#00ffff" stroke-width="1.5"/>
<path d="M857.8 159.5L859.4 159.5M861.5 153.4L861.5 165M861 153.5L866.8 153.5" stroke="#00ffff"/>
<path d="M866 153.4L866 165" stroke="#00ffff" stroke-width="1.7"/>
<path d="M720 170.9L720 182.1" stroke="#00ffff" stroke-width="2"/>
<path d="M720 170.5L724.8 170.5" stroke="#00ffff"/>
<path d="M720.3 170H721.3V172H720.3Z" fill="#00ffff"/>
<path d="M724.5 170L724.5 182.1M726.6 170.5L731.2 170.5L731.2 182.1" stroke="#00ffff"/>
<path d="M743.3 170.9L743.3 182.1" stroke="#00ffff" stroke-width="2"/>
<path d="M743.3 170.5L748.8 170.5" stroke="#00ffff"/>
<path d="M743.6 170H744.6V172H743.6Z" fill="#00ffff"/>
<path d="M748.5 170L748.5 182.1" stroke="#00ffff"/>
<path d="M754 182.1L754 170.5L755.2 169.1L767 169.1L767 182.1M760.5 169.1L760.5 182.1" stroke="#00ffff" stroke-width="2"/>
<path d="M753 181.5L768 181.5M774.5 182.1L774.5 170.5L779.6 170.5L779.6 182.1M781.5 169.9L781.5 182.1" stroke="#00ffff"/>
<path d="M788.5 168.6L795.4 168.6L795.4 176.5L788.5 176.5Z" stroke="#00ffff" stroke-width="1.1"/>
<path d="M788 168.1H795.9V171H788Z" fill="#00ffff"/>
<path d="M801.5 169.9L801.5 182.1" stroke="#00ffff"/>
<path d="M805.9 170.9L805.9 182.1" stroke="#00ffff" stroke-width="2"/>
<path d="M805.9 170.5L811.2 170.5" stroke="#00ffff"/>
<path d="M806.2 170H807.2V172H806.2Z" fill="#00ffff"/>
<path d="M810.5 170L810.5 182.1" stroke="#00ffff"/>
<path d="M818 182.1L818 170.5L819.2 169.1L831 169.1L831 182.1M824.5 169.1L824.5 182.1" stroke="#00ffff" stroke-width="2"/>
<path d="M817 181.5L832 181.5M837.6 182.1L837.6 170.5L842.6 170.5L842.6 182.1" stroke="#00ffff"/>
<path d="M854.6 182.1L854.6 170.5L858.6 170.5" stroke="#00ffff" stroke-width="1.5"/>
<path d="M857.8 176.5L859.4 176.5M861.5 170.5L861.5 182.1M861 170.5L866.8 170.5" stroke="#00ffff"/>
<path d="M866 170.5L866 182.1" stroke="#00ffff" stroke-width="1.7"/>
<path d="M720 187.9L720 199.1" stroke="#00ffff" stroke-width="2"/>
<path d="M720 187.5L724.8 187.5" stroke="#00ffff"/>
<path d="M720.3 187H721.3V189H720.3Z" fill="#00ffff"/>
<path d="M724.5 187L724.5 199.1M726.6 187.5L731.2 187.5L731.2 199.1" stroke="#00ffff"/>
<path d="M743.3 187.9L743.3 199.1" stroke="#00ffff" stroke-width="2"/>
<path d="M743.3 187.5L748.8 187.5" stroke="#00ffff"/>
<path d="M743.6 187H744.6V189H743.6Z" fill="#00ffff"/>
<path d="M748.5 187L748.5 199.1" stroke="#00ffff"/>
<path d="M754 199.1L754 187.5L755.2 186.1L767 186.1L767 199.1M760.5 186.1L760.5 199.1" stroke="#00ffff" stroke-width="2"/>
<path d="M753 198.5L768 198.5M774.5 199.1L774.5 187.5L779.6 187.5L779.6 199.1M781.5 186.9L781.5 199.1" stroke="#00ffff"/>
<path d="M788.5 185.6L795.4 185.6L795.4 193.5L788.5 193.5Z" stroke="#00ffff" stroke-width="1.1"/>
<path d="M788 185.1H795.9V188H788Z" fill="#00ffff"/>
<path d="M801.5 186.9L801.5 199.1" stroke="#00ffff"/>
<path d="M805.9 187.9L805.9 199.1" stroke="#00ffff" stroke-width="2"/>
<path d="M805.9 187.5L811.2 187.5" stroke="#00ffff"/>
<path d="M806.2 187H807.2V189H806.2Z" fill="#00ffff"/>
<path d="M810.5 187L810.5 199.1" stroke="#00ffff"/>
<path d="M818 199.1L818 187.5L819.2 186.1L831 186.1L831 199.1M824.5 186.1L824.5 199.1" stroke="#00ffff" stroke-width="2"/>
<path d="M817 198.5L832 198.5M837.6 199.1L837.6 187.5L842.6 187.5L842.6 199.1" stroke="#00ffff"/>
<path d="M854.6 199.1L854.6 187.5L858.6 187.5" stroke="#00ffff" stroke-width="1.5"/>
<path d="M857.8 193.5L859.4 193.5M861.5 187.5L861.5 199.1M861 187.5L866.8 187.5" stroke="#00ffff"/>
<path d="M866 187.5L866 199.1" stroke="#00ffff" stroke-width="1.7"/>
<path d="M720 204.9L720 216.1" stroke="#00ffff" stroke-width="2"/>
<path d="M720 204.5L724.8 204.5" stroke="#00ffff"/>
<path d="M720.3 204H721.3V206H720.3Z" fill="#00ffff"/>
<path d="M724.5 204L724.5 216.1M726.6 204.5L731.2 204.5L731.2 216.1" stroke="#00ffff"/>
<path d="M743.3 204.9L743.3 216.1" stroke="#00ffff" stroke-width="2"/>
<path d="M743.3 204.5L748.8 204.5" stroke="#00ffff"/>
<path d="M743.6 204H744.6V206H743.6Z" fill="#00ffff"/>
<path d="M748.5 204L748.5 216.1" stroke="#00ffff"/>
<path d="M754 216.1L754 204.5L755.2 203.1L767 203.1L767 216.1M760.5 203.1L760.5 216.1" stroke="#00ffff" stroke-width="2"/>
<path d="M753 215.5L768 215.5M774.5 216.1L774.5 204.5L779.6 204.5L779.6 216.1M781.5 203.9L781.5 216.1" stroke="#00ffff"/>
<path d="M788.5 202.6L795.4 202.6L795.4 210.5L788.5 210.5Z" stroke="#00ffff" stroke-width="1.1"/>
<path d="M788 202.1H795.9V205H788Z" fill="#00ffff"/>
<path d="M801.5 203.9L801.5 216.1" stroke="#00ffff"/>
<path d="M805.9 204.9L805.9 216.1" stroke="#00ffff" stroke-width="2"/>
<path d="M805.9 204.5L811.2 204.5" stroke="#00ffff"/>
<path d="M806.2 204H807.2V206H806.2Z" fill="#00ffff"/>
<path d="M810.5 204L810.5 216.1" stroke="#00ffff"/>
<path d="M818 216.1L818 204.5L819.2 203.1L831 203.1L831 216.1M824.5 203.1L824.5 216.1" stroke="#00ffff" stroke-width="2"/>
<path d="M817 215.5L832 215.5M837.6 216.1L837.6 204.5L842.6 204.5L842.6 216.1" stroke="#00ffff"/>
<path d="M854.6 216.1L854.6 204.5L858.6 204.5" stroke="#00ffff" stroke-width="1.5"/>
<path d="M857.8 210.5L859.4 210.5M861.5 204.5L861.5 216.1M861 204.5L866.8 204.5" stroke="#00ffff"/>
<path d="M866 204.5L866 216.1" stroke="#00ffff" stroke-width="1.7"/>
<path d="M720 221.9L720 233.1" stroke="#00ffff" stroke-width="2"/>
<path d="M720 221.5L724.8 221.5" stroke="#00ffff"/>
<path d="M720.3 221H721.3V223H720.3Z" fill="#00ffff"/>
<path d="M724.5 221L724.5 233.1M726.6 221.5L731.2 221.5L731.2 233.1" stroke="#00ffff"/>
<path d="M743.3 221.9L743.3 233.1" stroke="#00ffff" stroke-width="2"/>
<path d="M743.3 221.5L748.8 221.5" stroke="#00ffff"/>
<path d="M743.6 221H744.6V223H743.6Z" fill="#00ffff"/>
<path d="M748.5 221L748.5 233.1" stroke="#00ffff"/>
<path d="M754 233.1L754 221.5L755.2 220.1L767 220.1L767 233.1M760.5 220.1L760.5 233.1" stroke="#00ffff" stroke-width="2"/>
<path d="M753 232.5L768 232.5M774.5 233.1L774.5 221.5L779.6 221.5L779.6 233.1M781.5 220.9L781.5 233.1" stroke="#00ffff"/>
<path d="M788.5 219.6L795.4 219.6L795.4 227.5L788.5 227.5Z" stroke="#00ffff" stroke-width="1.1"/>
<path d="M788 219.1H795.9V222H788Z" fill="#00ffff"/>
<path d="M801.5 220.9L801.5 233.1" stroke="#00ffff"/>
<path d="M805.9 221.9L805.9 233.1" stroke="#00ffff" stroke-width="2"/>
<path d="M805.9 221.5L811.2 221.5" stroke="#00ffff"/>
<path d="M806.2 221H807.2V223H806.2Z" fill="#00ffff"/>
<path d="M810.5 221L810.5 233.1" stroke="#00ffff"/>
<path d="M818 233.1L818 221.5L819.2 220.1L831 220.1L831 233.1M824.5 220.1L824.5 233.1" stroke="#00ffff" stroke-width="2"/>
<path d="M817 232.5L832 232.5M837.6 233.1L837.6 221.5L842.6 221.5L842.6 233.1" stroke="#00ffff"/>
<path d="M854.6 233.1L854.6 221.5L858.6 221.5" stroke="#00ffff" stroke-width="1.5"/>
<path d="M857.8 227.5L859.4 227.5M861.5 221.5L861.5 233.1M861 221.5L866.8 221.5" stroke="#00ffff"/>
<path d="M866 221.5L866 233.1" stroke="#00ffff" stroke-width="1.7"/>
<path d="M720 238.9L720 250.1" stroke="#00ffff" stroke-width="2"/>
<path d="M720 238.5L724.8 238.5" stroke="#00ffff"/>
<path d="M720.3 238H721.3V240H720.3Z" fill="#00ffff"/>
<path d="M724.5 238L724.5 250.1M726.6 238.5L731.2 238.5L731.2 250.1" stroke="#00ffff"/>
<path d="M743.3 238.9L743.3 250.1" stroke="#00ffff" stroke-width="2"/>
<path d="M743.3 238.5L748.8 238.5" stroke="#00ffff"/>
<path d="M743.6 238H744.6V240H743.6Z" fill="#00ffff"/>
<path d="M748.5 238L748.5 250.1" stroke="#00ffff"/>
<path d="M754 250.1L754 238.5L755.2 237.1L767 237.1L767 250.1M760.5 237.1L760.5 250.1" stroke="#00ffff" stroke-width="2"/>
<path d="M753 249.5L768 249.5M774.5 250.1L774.5 238.5L779.6 238.5L779.6 250.1M781.5 237.9L781.5 250.1" stroke="#00ffff"/>
<path d="M788.5 236.6L795.4 236.6L795.4 244.5L788.5 244.5Z" stroke="#00ffff" stroke-width="1.1"/>
<path d="M788 236.1H795.9V239H788Z" fill="#00ffff"/>
<path d="M801.5 237.9L801.5 250.1" stroke="#00ffff"/>
<path d="M805.9 238.9L805.9 250.1" stroke="#00ffff" stroke-width="2"/>
<path d="M805.9 238.5L811.2 238.5" stroke="#00ffff"/>
<path d="M806.2 238H807.2V240H806.2Z" fill="#00ffff"/>
<path d="M810.5 238L810.5 250.1" stroke="#00ffff"/>
<path d="M818 250.1L818 238.5L819.2 237.1L831 237.1L831 250.1M824.5 237.1L824.5 250.1" stroke="#00ffff" stroke-width="2"/>
<path d="M817 249.5L832 249.5M837.6 250.1L837.6 238.5L842.6 238.5L842.6 250.1" stroke="#00ffff"/>
<path d="M854.6 250.1L854.6 238.5L858.6 238.5" stroke="#00ffff" stroke-width="1.5"/>
<path d="M857.8 244.5L859.4 244.5M861.5 238.5L861.5 250.1M861 238.5L866.8 238.5" stroke="#00ffff"/>
<path d="M866 238.5L866 250.1" stroke="#00ffff" stroke-width="1.7"/>
<path d="M720 256L720 267.2" stroke="#00ffff" stroke-width="2"/>
<path d="M720 255.5L724.8 255.5" stroke="#00ffff"/>
<path d="M720.3 255.1H721.3V257.1H720.3Z" fill="#00ffff"/>
<path d="M724.5 255.1L724.5 267.2M726.6 255.6L731.2 255.6L731.2 267.2" stroke="#00ffff"/>
<path d="M743.3 256L743.3 267.2" stroke="#00ffff" stroke-width="2"/>
<path d="M743.3 255.5L748.8 255.5" stroke="#00ffff"/>
<path d="M743.6 255.1H744.6V257.1H743.6Z" fill="#00ffff"/>
<path d="M748.5 255.1L748.5 267.2" stroke="#00ffff"/>
<path d="M754 267.2L754 255.6L755.2 254.2L767 254.2L767 267.2M760.5 254.2L760.5 267.2" stroke="#00ffff" stroke-width="2"/>
<path d="M753 266.5L768 266.5M774.5 267.2L774.5 255.6L779.6 255.6L779.6 267.2M781.5 255L781.5 267.2" stroke="#00ffff"/>
<path d="M788.5 253.7L795.4 253.7L795.4 261.6L788.5 261.6Z" stroke="#00ffff" stroke-width="1.1"/>
<path d="M788 253.2H795.9V256.1H788Z" fill="#00ffff"/>
<path d="M801.5 255L801.5 267.2" stroke="#00ffff"/>
<path d="M805.9 256L805.9 267.2" stroke="#00ffff" stroke-width="2"/>
<path d="M805.9 255.5L811.2 255.5" stroke="#00ffff"/>
<path d="M806.2 255.1H807.2V257.1H806.2Z" fill="#00ffff"/>
<path d="M810.5 255.1L810.5 267.2" stroke="#00ffff"/>
<path d="M818 267.2L818 255.6L819.2 254.2L831 254.2L831 267.2M824.5 254.2L824.5 267.2" stroke="#00ffff" stroke-width="2"/>
<path d="M817 266.5L832 266.5M837.6 267.2L837.6 255.6L842.6 255.6L842.6 267.2" stroke="#00ffff"/>
<path d="M854.6 267.2L854.6 255.6L858.6 255.6" stroke="#00ffff" stroke-width="1.5"/>
<path d="M857.8 261.5L859.4 261.5M861.5 255.6L861.5 267.2M861 255.5L866.8 255.5" stroke="#00ffff"/>
<path d="M866 255.6L866 267.2" stroke="#00ffff" stroke-width="1.7"/>
<path d="M720 273L720 284.2" stroke="#00ffff" stroke-width="2"/>
<path d="M720 272.5L724.8 272.5" stroke="#00ffff"/>
<path d="M720.3 272.1H721.3V274.1H720.3Z" fill="#00ffff"/>
<path d="M724.5 272.1L724.5 284.2M726.6 272.6L731.2 272.6L731.2 284.2" stroke="#00ffff"/>
<path d="M743.3 273L743.3 284.2" stroke="#00ffff" stroke-width="2"/>
<path d="M743.3 272.5L748.8 272.5" stroke="#00ffff"/>
<path d="M743.6 272.1H744.6V274.1H743.6Z" fill="#00ffff"/>
<path d="M748.5 272.1L748.5 284.2" stroke="#00ffff"/>
<path d="M754 284.2L754 272.6L755.2 271.2L767 271.2L767 284.2M760.5 271.2L760.5 284.2" stroke="#00ffff" stroke-width="2"/>
<path d="M753 283.5L768 283.5M774.5 284.2L774.5 272.6L779.6 272.6L779.6 284.2M781.5 272L781.5 284.2" stroke="#00ffff"/>
<path d="M788.5 270.7L795.4 270.7L795.4 278.6L788.5 278.6Z" stroke="#00ffff" stroke-width="1.1"/>
<path d="M788 270.2H795.9V273.1H788Z" fill="#00ffff"/>
<path d="M801.5 272L801.5 284.2" stroke="#00ffff"/>
<path d="M805.9 273L805.9 284.2" stroke="#00ffff" stroke-width="2"/>
<path d="M805.9 272.5L811.2 272.5" stroke="#00ffff"/>
<path d="M806.2 272.1H807.2V274.1H806.2Z" fill="#00ffff"/>
<path d="M810.5 272.1L810.5 284.2" stroke="#00ffff"/>
<path d="M818 284.2L818 272.6L819.2 271.2L831 271.2L831 284.2M824.5 271.2L824.5 284.2" stroke="#00ffff" stroke-width="2"/>
<path d="M817 283.5L832 283.5M837.6 284.2L837.6 272.6L842.6 272.6L842.6 284.2" stroke="#00ffff"/>
<path d="M854.6 284.2L854.6 272.6L858.6 272.6" stroke="#00ffff" stroke-width="1.5"/>
<path d="M857.8 278.5L859.4 278.5M861.5 272.6L861.5 284.2M861 272.5L866.8 272.5" stroke="#00ffff"/>
<path d="M866 272.6L866 284.2" stroke="#00ffff" stroke-width="1.7"/>
<path d="M720 290L720 301.2" stroke="#00ffff" stroke-width="2"/>
<path d="M720 289.5L724.8 289.5" stroke="#00ffff"/>
<path d="M720.3 289.1H721.3V291.1H720.3Z" fill="#00ffff"/>
<path d="M724.5 289.1L724.5 301.2M726.6 289.6L731.2 289.6L731.2 301.2" stroke="#00ffff"/>
<path d="M743.3 290L743.3 301.2" stroke="#00ffff" stroke-width="2"/>
<path d="M743.3 289.5L748.8 289.5" stroke="#00ffff"/>
<path d="M743.6 289.1H744.6V291.1H743.6Z" fill="#00ffff"/>
<path d="M748.5 289.1L748.5 301.2" stroke="#00ffff"/>
<path d="M754 301.2L754 289.6L755.2 288.2L767 288.2L767 301.2M760.5 288.2L760.5 301.2" stroke="#00ffff" stroke-width="2"/>
<path d="M753 301.5L768 301.5M774.5 301.2L774.5 289.6L779.6 289.6L779.6 301.2M781.5 289L781.5 301.2" stroke="#00ffff"/>
<path d="M788.5 287.7L795.4 287.7L795.4 295.6L788.5 295.6Z" stroke="#00ffff" stroke-width="1.1"/>
<path d="M788 287.2H795.9V290.1H788Z" fill="#00ffff"/>
<path d="M801.5 289L801.5 301.2" stroke="#00ffff"/>
<path d="M805.9 290L805.9 301.2" stroke="#00ffff" stroke-width="2"/>
<path d="M805.9 289.5L811.2 289.5" stroke="#00ffff"/>
<path d="M806.2 289.1H807.2V291.1H806.2Z" fill="#00ffff"/>
<path d="M810.5 289.1L810.5 301.2" stroke="#00ffff"/>
<path d="M818 301.2L818 289.6L819.2 288.2L831 288.2L831 301.2M824.5 288.2L824.5 301.2" stroke="#00ffff" stroke-width="2"/>
<path d="M817 301.5L832 301.5M837.6 301.2L837.6 289.6L842.6 289.6L842.6 301.2" stroke="#00ffff"/>
<path d="M854.6 301.2L854.6 289.6L858.6 289.6" stroke="#00ffff" stroke-width="1.5"/>
<path d="M857.8 295.5L859.4 295.5M861.5 289.6L861.5 301.2M861 289.5L866.8 289.5" stroke="#00ffff"/>
<path d="M866 289.6L866 301.2" stroke="#00ffff" stroke-width="1.7"/>
<path d="M720 307L720 318.2" stroke="#00ffff" stroke-width="2"/>
<path d="M720 306.5L724.8 306.5" stroke="#00ffff"/>
<path d="M720.3 306.1H721.3V308.1H720.3Z" fill="#00ffff"/>
<path d="M724.5 306.1L724.5 318.2M726.6 306.6L731.2 306.6L731.2 318.2" stroke="#00ffff"/>
<path d="M743.3 307L743.3 318.2" stroke="#00ffff" stroke-width="2"/>
<path d="M743.3 306.5L748.8 306.5" stroke="#00ffff"/>
<path d="M743.6 306.1H744.6V308.1H743.6Z" fill="#00ffff"/>
<path d="M748.5 306.1L748.5 318.2" stroke="#00ffff"/>
<path d="M754 318.2L754 306.6L755.2 305.2L767 305.2L767 318.2M760.5 305.2L760.5 318.2" stroke="#00ffff" stroke-width="2"/>
<path d="M753 318.5L768 318.5M774.5 318.2L774.5 306.6L779.6 306.6L779.6 318.2M781.5 306L781.5 318.2" stroke="#00ffff"/>
<path d="M788.5 304.7L795.4 304.7L795.4 312.6L788.5 312.6Z" stroke="#00ffff" stroke-width="1.1"/>
<path d="M788 304.2H795.9V307.1H788Z" fill="#00ffff"/>
<path d="M801.5 306L801.5 318.2" stroke="#00ffff"/>
<path d="M805.9 307L805.9 318.2" stroke="#00ffff" stroke-width="2"/>
<path d="M805.9 306.5L811.2 306.5" stroke="#00ffff"/>
<path d="M806.2 306.1H807.2V308.1H806.2Z" fill="#00ffff"/>
<path d="M810.5 306.1L810.5 318.2" stroke="#00ffff"/>
<path d="M818 318.2L818 306.6L819.2 305.2L831 305.2L831 318.2M824.5 305.2L824.5 318.2" stroke="#00ffff" stroke-width="2"/>
<path d="M817 318.5L832 318.5M837.6 318.2L837.6 306.6L842.6 306.6L842.6 318.2" stroke="#00ffff"/>
<path d="M854.6 318.2L854.6 306.6L858.6 306.6" stroke="#00ffff" stroke-width="1.5"/>
<path d="M857.8 312.5L859.4 312.5M861.5 306.6L861.5 318.2M861 306.5L866.8 306.5" stroke="#00ffff"/>
<path d="M866 306.6L866 318.2" stroke="#00ffff" stroke-width="1.7"/>
<path d="M720 324L720 335.2" stroke="#00ffff" stroke-width="2"/>
<path d="M720 323.5L724.8 323.5" stroke="#00ffff"/>
<path d="M720.3 323.1H721.3V325.1H720.3Z" fill="#00ffff"/>
<path d="M724.5 323.1L724.5 335.2M726.6 323.6L731.2 323.6L731.2 335.2" stroke="#00ffff"/>
<path d="M743.3 324L743.3 335.2" stroke="#00ffff" stroke-width="2"/>
<path d="M743.3 323.5L748.8 323.5" stroke="#00ffff"/>
<path d="M743.6 323.1H744.6V325.1H743.6Z" fill="#00ffff"/>
<path d="M748.5 323.1L748.5 335.2" stroke="#00ffff"/>
<path d="M754 335.2L754 323.6L755.2 322.2L767 322.2L767 335.2M760.5 322.2L760.5 335.2" stroke="#00ffff" stroke-width="2"/>
<path d="M753 335.5L768 335.5M774.5 335.2L774.5 323.6L779.6 323.6L779.6 335.2M781.5 323L781.5 335.2" stroke="#00ffff"/>
<path d="M788.5 321.7L795.4 321.7L795.4 329.6L788.5 329.6Z" stroke="#00ffff" stroke-width="1.1"/>
<path d="M788 321.2H795.9V324.1H788Z" fill="#00ffff"/>
<path d="M801.5 323L801.5 335.2" stroke="#00ffff"/>
<path d="M805.9 324L805.9 335.2" stroke="#00ffff" stroke-width="2"/>
<path d="M805.9 323.5L811.2 323.5" stroke="#00ffff"/>
<path d="M806.2 323.1H807.2V325.1H806.2Z" fill="#00ffff"/>
<path d="M810.5 323.1L810.5 335.2" stroke="#00ffff"/>
<path d="M818 335.2L818 323.6L819.2 322.2L831 322.2L831 335.2M824.5 322.2L824.5 335.2" stroke="#00ffff" stroke-width="2"/>
<path d="M817 335.5L832 335.5M837.6 335.2L837.6 323.6L842.6 323.6L842.6 335.2" stroke="#00ffff"/>
<path d="M854.6 335.2L854.6 323.6L858.6 323.6" stroke="#00ffff" stroke-width="1.5"/>
<path d="M857.8 329.5L859.4 329.5M861.5 323.6L861.5 335.2M861 323.5L866.8 323.5" stroke="#00ffff"/>
<path d="M866 323.6L866 335.2" stroke="#00ffff" stroke-width="1.7"/>
<path d="M720 341.1L720 352.3" stroke="#00ffff" stroke-width="2"/>
<path d="M720 340.5L724.8 340.5" stroke="#00ffff"/>
<path d="M720.3 340.2H721.3V342.2H720.3Z" fill="#00ffff"/>
<path d="M724.5 340.2L724.5 352.3M726.6 340.7L731.2 340.7L731.2 352.3" stroke="#00ffff"/>
<path d="M743.3 341.1L743.3 352.3" stroke="#00ffff" stroke-width="2"/>
<path d="M743.3 340.5L748.8 340.5" stroke="#00ffff"/>
<path d="M743.6 340.2H744.6V342.2H743.6Z" fill="#00ffff"/>
<path d="M748.5 340.2L748.5 352.3" stroke="#00ffff"/>
<path d="M754 352.3L754 340.7L755.2 339.3L767 339.3L767 352.3M760.5 339.3L760.5 352.3" stroke="#00ffff" stroke-width="2"/>
<path d="M753 352.5L768 352.5M774.5 352.3L774.5 340.7L779.6 340.7L779.6 352.3M781.5 340.1L781.5 352.3" stroke="#00ffff"/>
<path d="M788.5 338.8L795.4 338.8L795.4 346.7L788.5 346.7Z" stroke="#00ffff" stroke-width="1.1"/>
<path d="M788 338.3H795.9V341.2H788Z" fill="#00ffff"/>
<path d="M801.5 340.1L801.5 352.3" stroke="#00ffff"/>
<path d="M805.9 341.1L805.9 352.3" stroke="#00ffff" stroke-width="2"/>
<path d="M805.9 340.5L811.2 340.5" stroke="#00ffff"/>
<path d="M806.2 340.2H807.2V342.2H806.2Z" fill="#00ffff"/>
<path d="M810.5 340.2L810.5 352.3" stroke="#00ffff"/>
<path d="M818 352.3L818 340.7L819.2 339.3L831 339.3L831 352.3M824.5 339.3L824.5 352.3" stroke="#00ffff" stroke-width="2"/>
<path d="M817 352.5L832 352.5M837.6 352.3L837.6 340.7L842.6 340.7L842.6 352.3" stroke="#00ffff"/>
<path d="M854.6 352.3L854.6 340.7L858.6 340.7" stroke="#00ffff" stroke-width="1.5"/>
<path d="M857.8 346.5L859.4 346.5M861.5 340.7L861.5 352.3M861 340.5L866.8 340.5" stroke="#00ffff"/>
<path d="M866 340.7L866 352.3" stroke="#00ffff" stroke-width="1.7"/>
<path d="M720 358.1L720 369.3" stroke="#00ffff" stroke-width="2"/>
<path d="M720 357.5L724.8 357.5" stroke="#00ffff"/>
<path d="M720.3 357.2H721.3V359.2H720.3Z" fill="#00ffff"/>
<path d="M724.5 357.2L724.5 369.3M726.6 357.7L731.2 357.7L731.2 369.3" stroke="#00ffff"/>
<path d="M743.3 358.1L743.3 369.3" stroke="#00ffff" stroke-width="2"/>
<path d="M743.3 357.5L748.8 357.5" stroke="#00ffff"/>
<path d="M743.6 357.2H744.6V359.2H743.6Z" fill="#00ffff"/>
<path d="M748.5 357.2L748.5 369.3" stroke="#00ffff"/>
<path d="M754 369.3L754 357.7L755.2 356.3L767 356.3L767 369.3M760.5 356.3L760.5 369.3" stroke="#00ffff" stroke-width="2"/>
<path d="M753 369.5L768 369.5M774.5 369.3L774.5 357.7L779.6 357.7L779.6 369.3M781.5 357.1L781.5 369.3" stroke="#00ffff"/>
<path d="M788.5 355.8L795.4 355.8L795.4 363.7L788.5 363.7Z" stroke="#00ffff" stroke-width="1.1"/>
<path d="M788 355.3H795.9V358.2H788Z" fill="#00ffff"/>
<path d="M801.5 357.1L801.5 369.3" stroke="#00ffff"/>
<path d="M805.9 358.1L805.9 369.3" stroke="#00ffff" stroke-width="2"/>
<path d="M805.9 357.5L811.2 357.5" stroke="#00ffff"/>
<path d="M806.2 357.2H807.2V359.2H806.2Z" fill="#00ffff"/>
<path d="M810.5 357.2L810.5 369.3" stroke="#00ffff"/>
<path d="M818 369.3L818 357.7L819.2 356.3L831 356.3L831 369.3M824.5 356.3L824.5 369.3" stroke="#00ffff" stroke-width="2"/>
<path d="M817 369.5L832 369.5M837.6 369.3L837.6 357.7L842.6 357.7L842.6 369.3" stroke="#00ffff"/>
<path d="M854.6 369.3L854.6 357.7L858.6 357.7" stroke="#00ffff" stroke-width="1.5"/>
<path d="M857.8 363.5L859.4 363.5M861.5 357.7L861.5 369.3M861 357.5L866.8 357.5" stroke="#00ffff"/>
<path d="M866 357.7L866 369.3" stroke="#00ffff" stroke-width="1.7"/>
<path d="M720 375.1L720 386.3" stroke="#00ffff" stroke-width="2"/>
<path d="M720 374.5L724.8 374.5" stroke="#00ffff"/>
<path d="M720.3 374.2H721.3V376.2H720.3Z" fill="#00ffff"/>
<path d="M724.5 374.2L724.5 386.3M726.6 374.7L731.2 374.7L731.2 386.3" stroke="#00ffff"/>
<path d="M743.3 375.1L743.3 386.3" stroke="#00ffff" stroke-width="2"/>
<path d="M743.3 374.5L748.8 374.5" stroke="#00ffff"/>
<path d="M743.6 374.2H744.6V376.2H743.6Z" fill="#00ffff"/>
<path d="M748.5 374.2L748.5 386.3" stroke="#00ffff"/>
<path d="M754 386.3L754 374.7L755.2 373.3L767 373.3L767 386.3M760.5 373.3L760.5 386.3" stroke="#00ffff" stroke-width="2"/>
<path d="M753 386.5L768 386.5M774.5 386.3L774.5 374.7L779.6 374.7L779.6 386.3M781.5 374.1L781.5 386.3" stroke="#00ffff"/>
<path d="M788.5 372.8L795.4 372.8L795.4 380.7L788.5 380.7Z" stroke="#00ffff" stroke-width="1.1"/>
<path d="M788 372.3H795.9V375.2H788Z" fill="#00ffff"/>
<path d="M801.5 374.1L801.5 386.3" stroke="#00ffff"/>
<path d="M805.9 375.1L805.9 386.3" stroke="#00ffff" stroke-width="2"/>
<path d="M805.9 374.5L811.2 374.5" stroke="#00ffff"/>
<path d="M806.2 374.2H807.2V376.2H806.2Z" fill="#00ffff"/>
<path d="M810.5 374.2L810.5 386.3" stroke="#00ffff"/>
<path d="M818 386.3L818 374.7L819.2 373.3L831 373.3L831 386.3M824.5 373.3L824.5 386.3" stroke="#00ffff" stroke-width="2"/>
<path d="M817 386.5L832 386.5M837.6 386.3L837.6 374.7L842.6 374.7L842.6 386.3" stroke="#00ffff"/>
<path d="M854.6 386.3L854.6 374.7L858.6 374.7" stroke="#00ffff" stroke-width="1.5"/>
<path d="M857.8 380.5L859.4 380.5M861.5 374.7L861.5 386.3M861 374.5L866.8 374.5" stroke="#00ffff"/>
<path d="M866 374.7L866 386.3" stroke="#00ffff" stroke-width="1.7"/>
<path d="M720 392.1L720 403.3" stroke="#00ffff" stroke-width="2"/>
<path d="M720 391.5L724.8 391.5" stroke="#00ffff"/>
<path d="M720.3 391.2H721.3V393.2H720.3Z" fill="#00ffff"/>
<path d="M724.5 391.2L724.5 403.3M726.6 391.7L731.2 391.7L731.2 403.3" stroke="#00ffff"/>
<path d="M743.3 392.1L743.3 403.3" stroke="#00ffff" stroke-width="2"/>
<path d="M743.3 391.5L748.8 391.5" stroke="#00ffff"/>
<path d="M743.6 391.2H744.6V393.2H743.6Z" fill="#00ffff"/>
<path d="M748.5 391.2L748.5 403.3" stroke="#00ffff"/>
<path d="M754 403.3L754 391.7L755.2 390.3L767 390.3L767 403.3M760.5 390.3L760.5 403.3" stroke="#00ffff" stroke-width="2"/>
<path d="M753 403.5L768 403.5M774.5 403.3L774.5 391.7L779.6 391.7L779.6 403.3M781.5 391.1L781.5 403.3" stroke="#00ffff"/>
<path d="M788.5 389.8L795.4 389.8L795.4 397.7L788.5 397.7Z" stroke="#00ffff" stroke-width="1.1"/>
<path d="M788 389.3H795.9V392.2H788Z" fill="#00ffff"/>
<path d="M801.5 391.1L801.5 403.3" stroke="#00ffff"/>
<path d="M805.9 392.1L805.9 403.3" stroke="#00ffff" stroke-width="2"/>
<path d="M805.9 391.5L811.2 391.5" stroke="#00ffff"/>
<path d="M806.2 391.2H807.2V393.2H806.2Z" fill="#00ffff"/>
<path d="M810.5 391.2L810.5 403.3" stroke="#00ffff"/>
<path d="M818 403.3L818 391.7L819.2 390.3L831 390.3L831 403.3M824.5 390.3L824.5 403.3" stroke="#00ffff" stroke-width="2"/>
<path d="M817 403.5L832 403.5M837.6 403.3L837.6 391.7L842.6 391.7L842.6 403.3" stroke="#00ffff"/>
<path d="M854.6 403.3L854.6 391.7L858.6 391.7" stroke="#00ffff" stroke-width="1.5"/>
<path d="M857.8 397.5L859.4 397.5M861.5 391.7L861.5 403.3M861 391.5L866.8 391.5" stroke="#00ffff"/>
<path d="M866 391.7L866 403.3" stroke="#00ffff" stroke-width="1.7"/>
<path d="M720 409.1L720 420.3" stroke="#00ffff" stroke-width="2"/>
<path d="M720 408.5L724.8 408.5" stroke="#00ffff"/>
<path d="M720.3 408.2H721.3V410.2H720.3Z" fill="#00ffff"/>
<path d="M724.5 408.2L724.5 420.3M726.6 408.7L731.2 408.7L731.2 420.3" stroke="#00ffff"/>
<path d="M743.3 409.1L743.3 420.3" stroke="#00ffff" stroke-width="2"/>
<path d="M743.3 408.5L748.8 408.5" stroke="#00ffff"/>
<path d="M743.6 408.2H744.6V410.2H743.6Z" fill="#00ffff"/>
<path d="M748.5 408.2L748.5 420.3" stroke="#00ffff"/>
<path d="M754 420.3L754 408.7L755.2 407.3L767 407.3L767 420.3M760.5 407.3L760.5 420.3" stroke="#00ffff" stroke-width="2"/>
<path d="M753 420.5L768 420.5M774.5 420.3L774.5 408.7L779.6 408.7L779.6 420.3M781.5 408.1L781.5 420.3" stroke="#00ffff"/>
<path d="M788.5 406.8L795.4 406.8L795.4 414.7L788.5 414.7Z" stroke="#00ffff" stroke-width="1.1"/>
<path d="M788 406.3H795.9V409.2H788Z" fill="#00ffff"/>
<path d="M801.5 408.1L801.5 420.3" stroke="#00ffff"/>
<path d="M805.9 409.1L805.9 420.3" stroke="#00ffff" stroke-width="2"/>
<path d="M805.9 408.5L811.2 408.5" stroke="#00ffff"/>
<path d="M806.2 408.2H807.2V410.2H806.2Z" fill="#00ffff"/>
<path d="M810.5 408.2L810.5 420.3" stroke="#00ffff"/>
<path d="M818 420.3L818 408.7L819.2 407.3L831 407.3L831 420.3M824.5 407.3L824.5 420.3" stroke="#00ffff" stroke-width="2"/>
<path d="M817 420.5L832 420.5M837.6 420.3L837.6 408.7L842.6 408.7L842.6 420.3" stroke="#00ffff"/>
<path d="M854.6 420.3L854.6 408.7L858.6 408.7" stroke="#00ffff" stroke-width="1.5"/>
<path d="M857.8 414.5L859.4 414.5M861.5 408.7L861.5 420.3M861 408.5L866.8 408.5" stroke="#00ffff"/>
<path d="M866 408.7L866 420.3" stroke="#00ffff" stroke-width="1.7"/>
<path d="M725.7 114L725.7 422.3" stroke="#cbcbcb" stroke-width="2"/>
<path d="M750.4 114L750.4 422.3M772.6 114L772.6 422.3" stroke="#cbcbcb" stroke-width="1.5"/>
<path d="M782.5 114L782.5 422.3M802.5 114L802.5 422.3" stroke="#cbcbcb"/>
<path d="M812.2 114L812.2 422.3M835.6 114L835.6 422.3" stroke="#cbcbcb" stroke-width="1.5"/>
<path d="M860 114L860 422.3M709.6 132L872.7 132" stroke="#cbcbcb" stroke-width="2"/>
<path d="M712.6 132.5L724.6 132.5M861.6 132.5L870.7 132.5" stroke="#555" stroke-dasharray="1 2"/>
<path d="M709.6 149L872.7 149" stroke="#cbcbcb" stroke-width="2"/>
<path d="M712.6 149.5L724.6 149.5M861.6 149.5L870.7 149.5" stroke="#555" stroke-dasharray="1 2"/>
<path d="M709.6 166L872.7 166" stroke="#cbcbcb" stroke-width="2"/>
<path d="M712.6 166.5L724.6 166.5M861.6 166.5L870.7 166.5" stroke="#555" stroke-dasharray="1 2"/>
<path d="M709.6 183.1L872.7 183.1" stroke="#cbcbcb" stroke-width="2"/>
<path d="M712.6 183.5L724.6 183.5M861.6 183.5L870.7 183.5" stroke="#555" stroke-dasharray="1 2"/>
<path d="M709.6 200.1L872.7 200.1" stroke="#cbcbcb" stroke-width="2"/>
<path d="M712.6 200.5L724.6 200.5M861.6 200.5L870.7 200.5" stroke="#555" stroke-dasharray="1 2"/>
<path d="M709.6 217.1L872.7 217.1" stroke="#cbcbcb" stroke-width="2"/>
<path d="M712.6 217.5L724.6 217.5M861.6 217.5L870.7 217.5" stroke="#555" stroke-dasharray="1 2"/>
<path d="M709.6 234.1L872.7 234.1" stroke="#cbcbcb" stroke-width="2"/>
<path d="M712.6 234.5L724.6 234.5M861.6 234.5L870.7 234.5" stroke="#555" stroke-dasharray="1 2"/>
<path d="M709.6 251.1L872.7 251.1" stroke="#cbcbcb" stroke-width="2"/>
<path d="M712.6 251.5L724.6 251.5M861.6 251.5L870.7 251.5" stroke="#555" stroke-dasharray="1 2"/>
<path d="M709.6 268.2L872.7 268.2" stroke="#cbcbcb" stroke-width="2"/>
<path d="M712.6 268.5L724.6 268.5M861.6 268.5L870.7 268.5" stroke="#555" stroke-dasharray="1 2"/>
<path d="M709.6 285.2L872.7 285.2" stroke="#cbcbcb" stroke-width="2"/>
<path d="M712.6 285.5L724.6 285.5M861.6 285.5L870.7 285.5" stroke="#555" stroke-dasharray="1 2"/>
<path d="M709.6 302.2L872.7 302.2" stroke="#cbcbcb" stroke-width="2"/>
<path d="M712.6 302.5L724.6 302.5M861.6 302.5L870.7 302.5" stroke="#555" stroke-dasharray="1 2"/>
<path d="M709.6 319.2L872.7 319.2" stroke="#cbcbcb" stroke-width="2"/>
<path d="M712.6 319.5L724.6 319.5M861.6 319.5L870.7 319.5" stroke="#555" stroke-dasharray="1 2"/>
<path d="M709.6 336.2L872.7 336.2" stroke="#cbcbcb" stroke-width="2"/>
<path d="M712.6 336.5L724.6 336.5M861.6 336.5L870.7 336.5" stroke="#555" stroke-dasharray="1 2"/>
<path d="M709.6 353.3L872.7 353.3" stroke="#cbcbcb" stroke-width="2"/>
<path d="M712.6 353.5L724.6 353.5M861.6 353.5L870.7 353.5" stroke="#555" stroke-dasharray="1 2"/>
<path d="M709.6 370.3L872.7 370.3" stroke="#cbcbcb" stroke-width="2"/>
<path d="M712.6 370.5L724.6 370.5M861.6 370.5L870.7 370.5" stroke="#555" stroke-dasharray="1 2"/>
<path d="M709.6 387.3L872.7 387.3" stroke="#cbcbcb" stroke-width="2"/>
<path d="M712.6 387.5L724.6 387.5M861.6 387.5L870.7 387.5" stroke="#555" stroke-dasharray="1 2"/>
<path d="M709.6 404.3L872.7 404.3" stroke="#cbcbcb" stroke-width="2"/>
<path d="M712.6 404.5L724.6 404.5M861.6 404.5L870.7 404.5" stroke="#555" stroke-dasharray="1 2"/>
<path d="M709.6 421.3L872.7 421.3" stroke="#cbcbcb" stroke-width="2"/>
<path d="M712.6 421.5L724.6 421.5M861.6 421.5L870.7 421.5" stroke="#555" stroke-dasharray="1 2"/>
<path d="M709.9 464.8L709.9 105.5L872.4 105.5L872.4 461" stroke="#cbcbcb" stroke-width="1.4"/>
<path d="M709.6 114L872.7 114" stroke="#cbcbcb" stroke-width="2"/>
<path d="M709.9 118L709.9 131.1" stroke="#00ffff" stroke-width="1.6"/>
<path d="M709.9 124.8L709.9 125.5" stroke="#cbcbcb" stroke-width="1.6"/>
<path d="M709.9 135L709.9 148.1" stroke="#00ffff" stroke-width="1.6"/>
<path d="M709.9 141.8L709.9 142.5" stroke="#cbcbcb" stroke-width="1.6"/>
<path d="M709.9 152L709.9 165.1" stroke="#00ffff" stroke-width="1.6"/>
<path d="M709.9 158.8L709.9 159.5" stroke="#cbcbcb" stroke-width="1.6"/>
<path d="M709.9 169.1L709.9 182.2" stroke="#00ffff" stroke-width="1.6"/>
<path d="M709.9 175.9L709.9 176.6" stroke="#cbcbcb" stroke-width="1.6"/>
<path d="M709.9 186.1L709.9 199.2" stroke="#00ffff" stroke-width="1.6"/>
<path d="M709.9 192.9L709.9 193.6" stroke="#cbcbcb" stroke-width="1.6"/>
<path d="M709.9 203.1L709.9 216.2" stroke="#00ffff" stroke-width="1.6"/>
<path d="M709.9 209.9L709.9 210.6" stroke="#cbcbcb" stroke-width="1.6"/>
<path d="M709.9 220.1L709.9 233.2" stroke="#00ffff" stroke-width="1.6"/>
<path d="M709.9 226.9L709.9 227.6" stroke="#cbcbcb" stroke-width="1.6"/>
<path d="M709.9 237.1L709.9 250.2" stroke="#00ffff" stroke-width="1.6"/>
<path d="M709.9 243.9L709.9 244.6" stroke="#cbcbcb" stroke-width="1.6"/>
<path d="M709.9 254.2L709.9 267.3" stroke="#00ffff" stroke-width="1.6"/>
<path d="M709.9 261L709.9 261.7" stroke="#cbcbcb" stroke-width="1.6"/>
<path d="M709.9 271.2L709.9 284.3" stroke="#00ffff" stroke-width="1.6"/>
<path d="M709.9 278L709.9 278.7" stroke="#cbcbcb" stroke-width="1.6"/>
<path d="M709.9 288.2L709.9 301.3" stroke="#00ffff" stroke-width="1.6"/>
<path d="M709.9 295L709.9 295.7" stroke="#cbcbcb" stroke-width="1.6"/>
<path d="M709.9 305.2L709.9 318.3" stroke="#00ffff" stroke-width="1.6"/>
<path d="M709.9 312L709.9 312.7" stroke="#cbcbcb" stroke-width="1.6"/>
<path d="M709.9 322.2L709.9 335.3" stroke="#00ffff" stroke-width="1.6"/>
<path d="M709.9 329L709.9 329.7" stroke="#cbcbcb" stroke-width="1.6"/>
<path d="M709.9 339.3L709.9 352.4" stroke="#00ffff" stroke-width="1.6"/>
<path d="M709.9 346.1L709.9 346.8" stroke="#cbcbcb" stroke-width="1.6"/>
<path d="M709.9 356.3L709.9 369.4" stroke="#00ffff" stroke-width="1.6"/>
<path d="M709.9 363.1L709.9 363.8" stroke="#cbcbcb" stroke-width="1.6"/>
<path d="M709.9 373.3L709.9 386.4" stroke="#00ffff" stroke-width="1.6"/>
<path d="M709.9 380.1L709.9 380.8" stroke="#cbcbcb" stroke-width="1.6"/>
<path d="M709.9 390.3L709.9 403.4" stroke="#00ffff" stroke-width="1.6"/>
<path d="M709.9 397.1L709.9 397.8" stroke="#cbcbcb" stroke-width="1.6"/>
<path d="M709.9 407.3L709.9 420.4" stroke="#00ffff" stroke-width="1.6"/>
<path d="M709.9 414.1L709.9 414.8" stroke="#cbcbcb" stroke-width="1.6"/>
<path d="M872.4 118L872.4 131.1" stroke="#00ffff" stroke-width="1.6"/>
<path d="M872.4 124.8L872.4 125.5" stroke="#cbcbcb" stroke-width="1.6"/>
<path d="M872.4 135L872.4 148.1" stroke="#00ffff" stroke-width="1.6"/>
<path d="M872.4 141.8L872.4 142.5" stroke="#cbcbcb" stroke-width="1.6"/>
<path d="M872.4 152L872.4 165.1" stroke="#00ffff" stroke-width="1.6"/>
<path d="M872.4 158.8L872.4 159.5" stroke="#cbcbcb" stroke-width="1.6"/>
<path d="M872.4 169.1L872.4 182.2" stroke="#00ffff" stroke-width="1.6"/>
<path d="M872.4 175.9L872.4 176.6" stroke="#cbcbcb" stroke-width="1.6"/>
<path d="M872.4 186.1L872.4 199.2" stroke="#00ffff" stroke-width="1.6"/>
<path d="M872.4 192.9L872.4 193.6" stroke="#cbcbcb" stroke-width="1.6"/>
<path d="M872.4 203.1L872.4 216.2" stroke="#00ffff" stroke-width="1.6"/>
<path d="M872.4 209.9L872.4 210.6" stroke="#cbcbcb" stroke-width="1.6"/>
<path d="M872.4 220.1L872.4 233.2" stroke="#00ffff" stroke-width="1.6"/>
<path d="M872.4 226.9L872.4 227.6" stroke="#cbcbcb" stroke-width="1.6"/>
<path d="M872.4 237.1L872.4 250.2" stroke="#00ffff" stroke-width="1.6"/>
<path d="M872.4 243.9L872.4 244.6" stroke="#cbcbcb" stroke-width="1.6"/>
<path d="M872.4 254.2L872.4 267.3" stroke="#00ffff" stroke-width="1.6"/>
<path d="M872.4 261L872.4 261.7" stroke="#cbcbcb" stroke-width="1.6"/>
<path d="M872.4 271.2L872.4 284.3" stroke="#00ffff" stroke-width="1.6"/>
<path d="M872.4 278L872.4 278.7" stroke="#cbcbcb" stroke-width="1.6"/>
<path d="M872.4 288.2L872.4 301.3" stroke="#00ffff" stroke-width="1.6"/>
<path d="M872.4 295L872.4 295.7" stroke="#cbcbcb" stroke-width="1.6"/>
<path d="M872.4 305.2L872.4 318.3" stroke="#00ffff" stroke-width="1.6"/>
<path d="M872.4 312L872.4 312.7" stroke="#cbcbcb" stroke-width="1.6"/>
<path d="M872.4 322.2L872.4 335.3" stroke="#00ffff" stroke-width="1.6"/>
<path d="M872.4 329L872.4 329.7" stroke="#cbcbcb" stroke-width="1.6"/>
<path d="M872.4 339.3L872.4 352.4" stroke="#00ffff" stroke-width="1.6"/>
<path d="M872.4 346.1L872.4 346.8" stroke="#cbcbcb" stroke-width="1.6"/>
<path d="M872.4 356.3L872.4 369.4" stroke="#00ffff" stroke-width="1.6"/>
<path d="M872.4 363.1L872.4 363.8" stroke="#cbcbcb" stroke-width="1.6"/>
<path d="M872.4 373.3L872.4 386.4" stroke="#00ffff" stroke-width="1.6"/>
<path d="M872.4 380.1L872.4 380.8" stroke="#cbcbcb" stroke-width="1.6"/>
<path d="M872.4 390.3L872.4 403.4" stroke="#00ffff" stroke-width="1.6"/>
<path d="M872.4 397.1L872.4 397.8" stroke="#cbcbcb" stroke-width="1.6"/>
<path d="M872.4 407.3L872.4 420.4" stroke="#00ffff" stroke-width="1.6"/>
<path d="M872.4 414.1L872.4 414.8" stroke="#cbcbcb" stroke-width="1.6"/>
<path d="M772.3 114L772.3 86.9L813.8 86.9L813.8 114" stroke="#cbcbcb" stroke-width="1.1"/>
<path d="M772.3 89.5L813.8 89.5M773.5 89.5L773.5 114M811.5 86.9L811.5 114M797.5 89.9L797.5 108.9" stroke="#cbcbcb"/>
<path d="M788.1 91.8L795.5 91.8L795.5 100.9L788.1 100.9Z" stroke="#00ffff" stroke-width="1.3"/>
<path d="M791.5 91.8L791.5 100.9" stroke="#00ffff"/>
<path d="M801.1 91.8L808.5 91.8L808.5 100.9L801.1 100.9Z" stroke="#00ffff" stroke-width="1.3"/>
<path d="M804.5 91.8L804.5 100.9" stroke="#00ffff"/>
<path d="M773.1 106.1L811.6 106.1" stroke="#ffff00" stroke-width="1.8"/>
<path d="M957.3 97.6L957.3 108.8" stroke="#00ffff" stroke-width="2"/>
<path d="M957.3 97.5L962.1 97.5" stroke="#00ffff"/>
<path d="M957.6 96.7H958.6V98.7H957.6Z" fill="#00ffff"/>
<path d="M961.5 96.7L961.5 108.8M963.9 97.2L968.5 97.2L968.5 108.8" stroke="#00ffff"/>
<path d="M980.6 97.6L980.6 108.8" stroke="#00ffff" stroke-width="2"/>
<path d="M980.6 97.5L986.1 97.5" stroke="#00ffff"/>
<path d="M980.9 96.7H981.9V98.7H980.9Z" fill="#00ffff"/>
<path d="M985.5 96.7L985.5 108.8" stroke="#00ffff"/>
<path d="M991.3 108.8L991.3 97.2L992.5 95.8L1004.3 95.8L1004.3 108.8M997.8 95.8L997.8 108.8" stroke="#00ffff" stroke-width="2"/>
<path d="M990.3 108.5L1005.3 108.5M1011.8 108.8L1011.8 97.2L1016.9 97.2L1016.9 108.8M1018.5 96.6L1018.5 108.8" stroke="#00ffff"/>
<path d="M1025.8 95.3L1032.7 95.3L1032.7 103.2L1025.8 103.2Z" stroke="#00ffff" stroke-width="1.1"/>
<path d="M1025.3 94.8H1033.2V97.7H1025.3Z" fill="#00ffff"/>
<path d="M1038.5 96.6L1038.5 108.8" stroke="#00ffff"/>
<path d="M1043.2 97.6L1043.2 108.8" stroke="#00ffff" stroke-width="2"/>
<path d="M1043.2 97.5L1048.5 97.5" stroke="#00ffff"/>
<path d="M1043.5 96.7H1044.5V98.7H1043.5Z" fill="#00ffff"/>
<path d="M1048.5 96.7L1048.5 108.8" stroke="#00ffff"/>
<path d="M1055.3 108.8L1055.3 97.2L1056.5 95.8L1068.3 95.8L1068.3 108.8M1061.8 95.8L1061.8 108.8" stroke="#00ffff" stroke-width="2"/>
<path d="M1054.3 108.5L1069.3 108.5M1074.9 108.8L1074.9 97.2L1079.9 97.2L1079.9 108.8" stroke="#00ffff"/>
<path d="M1091.9 108.8L1091.9 97.2L1095.9 97.2" stroke="#00ffff" stroke-width="1.5"/>
<path d="M1095.1 103.5L1096.7 103.5M1098.5 97.2L1098.5 108.8M1098.3 97.5L1104.1 97.5" stroke="#00ffff"/>
<path d="M1103.3 97.2L1103.3 108.8" stroke="#00ffff" stroke-width="1.7"/>
<path d="M957.3 114.6L957.3 125.8" stroke="#00ffff" stroke-width="2"/>
<path d="M957.3 114.5L962.1 114.5" stroke="#00ffff"/>
<path d="M957.6 113.7H958.6V115.7H957.6Z" fill="#00ffff"/>
<path d="M961.5 113.7L961.5 125.8M963.9 114.2L968.5 114.2L968.5 125.8" stroke="#00ffff"/>
<path d="M980.6 114.6L980.6 125.8" stroke="#00ffff" stroke-width="2"/>
<path d="M980.6 114.5L986.1 114.5" stroke="#00ffff"/>
<path d="M980.9 113.7H981.9V115.7H980.9Z" fill="#00ffff"/>
<path d="M985.5 113.7L985.5 125.8" stroke="#00ffff"/>
<path d="M991.3 125.8L991.3 114.2L992.5 112.8L1004.3 112.8L1004.3 125.8M997.8 112.8L997.8 125.8" stroke="#00ffff" stroke-width="2"/>
<path d="M990.3 125.5L1005.3 125.5M1011.8 125.8L1011.8 114.2L1016.9 114.2L1016.9 125.8M1018.5 113.6L1018.5 125.8" stroke="#00ffff"/>
<path d="M1025.8 112.3L1032.7 112.3L1032.7 120.2L1025.8 120.2Z" stroke="#00ffff" stroke-width="1.1"/>
<path d="M1025.3 111.8H1033.2V114.7H1025.3Z" fill="#00ffff"/>
<path d="M1038.5 113.6L1038.5 125.8" stroke="#00ffff"/>
<path d="M1043.2 114.6L1043.2 125.8" stroke="#00ffff" stroke-width="2"/>
<path d="M1043.2 114.5L1048.5 114.5" stroke="#00ffff"/>
<path d="M1043.5 113.7H1044.5V115.7H1043.5Z" fill="#00ffff"/>
<path d="M1048.5 113.7L1048.5 125.8" stroke="#00ffff"/>
<path d="M1055.3 125.8L1055.3 114.2L1056.5 112.8L1068.3 112.8L1068.3 125.8M1061.8 112.8L1061.8 125.8" stroke="#00ffff" stroke-width="2"/>
<path d="M1054.3 125.5L1069.3 125.5M1074.9 125.8L1074.9 114.2L1079.9 114.2L1079.9 125.8" stroke="#00ffff"/>
<path d="M1091.9 125.8L1091.9 114.2L1095.9 114.2" stroke="#00ffff" stroke-width="1.5"/>
<path d="M1095.1 120.5L1096.7 120.5M1098.5 114.2L1098.5 125.8M1098.3 114.5L1104.1 114.5" stroke="#00ffff"/>
<path d="M1103.3 114.2L1103.3 125.8" stroke="#00ffff" stroke-width="1.7"/>
<path d="M957.3 131.6L957.3 142.8" stroke="#00ffff" stroke-width="2"/>
<path d="M957.3 131.5L962.1 131.5" stroke="#00ffff"/>
<path d="M957.6 130.7H958.6V132.7H957.6Z" fill="#00ffff"/>
<path d="M961.5 130.7L961.5 142.8M963.9 131.2L968.5 131.2L968.5 142.8" stroke="#00ffff"/>
<path d="M980.6 131.6L980.6 142.8" stroke="#00ffff" stroke-width="2"/>
<path d="M980.6 131.5L986.1 131.5" stroke="#00ffff"/>
<path d="M980.9 130.7H981.9V132.7H980.9Z" fill="#00ffff"/>
<path d="M985.5 130.7L985.5 142.8" stroke="#00ffff"/>
<path d="M991.3 142.8L991.3 131.2L992.5 129.8L1004.3 129.8L1004.3 142.8M997.8 129.8L997.8 142.8" stroke="#00ffff" stroke-width="2"/>
<path d="M990.3 142.5L1005.3 142.5M1011.8 142.8L1011.8 131.2L1016.9 131.2L1016.9 142.8M1018.5 130.6L1018.5 142.8" stroke="#00ffff"/>
<path d="M1025.8 129.3L1032.7 129.3L1032.7 137.2L1025.8 137.2Z" stroke="#00ffff" stroke-width="1.1"/>
<path d="M1025.3 128.8H1033.2V131.7H1025.3Z" fill="#00ffff"/>
<path d="M1038.5 130.6L1038.5 142.8" stroke="#00ffff"/>
<path d="M1043.2 131.6L1043.2 142.8" stroke="#00ffff" stroke-width="2"/>
<path d="M1043.2 131.5L1048.5 131.5" stroke="#00ffff"/>
<path d="M1043.5 130.7H1044.5V132.7H1043.5Z" fill="#00ffff"/>
<path d="M1048.5 130.7L1048.5 142.8" stroke="#00ffff"/>
<path d="M1055.3 142.8L1055.3 131.2L1056.5 129.8L1068.3 129.8L1068.3 142.8M1061.8 129.8L1061.8 142.8" stroke="#00ffff" stroke-width="2"/>
<path d="M1054.3 142.5L1069.3 142.5M1074.9 142.8L1074.9 131.2L1079.9 131.2L1079.9 142.8" stroke="#00ffff"/>
<path d="M1091.9 142.8L1091.9 131.2L1095.9 131.2" stroke="#00ffff" stroke-width="1.5"/>
<path d="M1095.1 137.5L1096.7 137.5M1098.5 131.2L1098.5 142.8M1098.3 131.5L1104.1 131.5" stroke="#00ffff"/>
<path d="M1103.3 131.2L1103.3 142.8" stroke="#00ffff" stroke-width="1.7"/>
<path d="M957.3 148.7L957.3 159.9" stroke="#00ffff" stroke-width="2"/>
<path d="M957.3 148.5L962.1 148.5" stroke="#00ffff"/>
<path d="M957.6 147.8H958.6V149.8H957.6Z" fill="#00ffff"/>
<path d="M961.5 147.8L961.5 159.9M963.9 148.3L968.5 148.3L968.5 159.9" stroke="#00ffff"/>
<path d="M980.6 148.7L980.6 159.9" stroke="#00ffff" stroke-width="2"/>
<path d="M980.6 148.5L986.1 148.5" stroke="#00ffff"/>
<path d="M980.9 147.8H981.9V149.8H980.9Z" fill="#00ffff"/>
<path d="M985.5 147.8L985.5 159.9" stroke="#00ffff"/>
<path d="M991.3 159.9L991.3 148.3L992.5 146.9L1004.3 146.9L1004.3 159.9M997.8 146.9L997.8 159.9" stroke="#00ffff" stroke-width="2"/>
<path d="M990.3 159.5L1005.3 159.5M1011.8 159.9L1011.8 148.3L1016.9 148.3L1016.9 159.9M1018.5 147.7L1018.5 159.9" stroke="#00ffff"/>
<path d="M1025.8 146.4L1032.7 146.4L1032.7 154.3L1025.8 154.3Z" stroke="#00ffff" stroke-width="1.1"/>
<path d="M1025.3 145.9H1033.2V148.8H1025.3Z" fill="#00ffff"/>
<path d="M1038.5 147.7L1038.5 159.9" stroke="#00ffff"/>
<path d="M1043.2 148.7L1043.2 159.9" stroke="#00ffff" stroke-width="2"/>
<path d="M1043.2 148.5L1048.5 148.5" stroke="#00ffff"/>
<path d="M1043.5 147.8H1044.5V149.8H1043.5Z" fill="#00ffff"/>
<path d="M1048.5 147.8L1048.5 159.9" stroke="#00ffff"/>
<path d="M1055.3 159.9L1055.3 148.3L1056.5 146.9L1068.3 146.9L1068.3 159.9M1061.8 146.9L1061.8 159.9" stroke="#00ffff" stroke-width="2"/>
<path d="M1054.3 159.5L1069.3 159.5M1074.9 159.9L1074.9 148.3L1079.9 148.3L1079.9 159.9" stroke="#00ffff"/>
<path d="M1091.9 159.9L1091.9 148.3L1095.9 148.3" stroke="#00ffff" stroke-width="1.5"/>
<path d="M1095.1 154.5L1096.7 154.5M1098.5 148.3L1098.5 159.9M1098.3 148.5L1104.1 148.5" stroke="#00ffff"/>
<path d="M1103.3 148.3L1103.3 159.9" stroke="#00ffff" stroke-width="1.7"/>
<path d="M957.3 165.7L957.3 176.9" stroke="#00ffff" stroke-width="2"/>
<path d="M957.3 165.5L962.1 165.5" stroke="#00ffff"/>
<path d="M957.6 164.8H958.6V166.8H957.6Z" fill="#00ffff"/>
<path d="M961.5 164.8L961.5 176.9M963.9 165.3L968.5 165.3L968.5 176.9" stroke="#00ffff"/>
<path d="M980.6 165.7L980.6 176.9" stroke="#00ffff" stroke-width="2"/>
<path d="M980.6 165.5L986.1 165.5" stroke="#00ffff"/>
<path d="M980.9 164.8H981.9V166.8H980.9Z" fill="#00ffff"/>
<path d="M985.5 164.8L985.5 176.9" stroke="#00ffff"/>
<path d="M991.3 176.9L991.3 165.3L992.5 163.9L1004.3 163.9L1004.3 176.9M997.8 163.9L997.8 176.9" stroke="#00ffff" stroke-width="2"/>
<path d="M990.3 176.5L1005.3 176.5M1011.8 176.9L1011.8 165.3L1016.9 165.3L1016.9 176.9M1018.5 164.7L1018.5 176.9" stroke="#00ffff"/>
<path d="M1025.8 163.4L1032.7 163.4L1032.7 171.3L1025.8 171.3Z" stroke="#00ffff" stroke-width="1.1"/>
<path d="M1025.3 162.9H1033.2V165.8H1025.3Z" fill="#00ffff"/>
<path d="M1038.5 164.7L1038.5 176.9" stroke="#00ffff"/>
<path d="M1043.2 165.7L1043.2 176.9" stroke="#00ffff" stroke-width="2"/>
<path d="M1043.2 165.5L1048.5 165.5" stroke="#00ffff"/>
<path d="M1043.5 164.8H1044.5V166.8H1043.5Z" fill="#00ffff"/>
<path d="M1048.5 164.8L1048.5 176.9" stroke="#00ffff"/>
<path d="M1055.3 176.9L1055.3 165.3L1056.5 163.9L1068.3 163.9L1068.3 176.9M1061.8 163.9L1061.8 176.9" stroke="#00ffff" stroke-width="2"/>
<path d="M1054.3 176.5L1069.3 176.5M1074.9 176.9L1074.9 165.3L1079.9 165.3L1079.9 176.9" stroke="#00ffff"/>
<path d="M1091.9 176.9L1091.9 165.3L1095.9 165.3" stroke="#00ffff" stroke-width="1.5"/>
<path d="M1095.1 171.5L1096.7 171.5M1098.5 165.3L1098.5 176.9M1098.3 165.5L1104.1 165.5" stroke="#00ffff"/>
<path d="M1103.3 165.3L1103.3 176.9" stroke="#00ffff" stroke-width="1.7"/>
<path d="M957.3 182.7L957.3 193.9" stroke="#00ffff" stroke-width="2"/>
<path d="M957.3 182.5L962.1 182.5" stroke="#00ffff"/>
<path d="M957.6 181.8H958.6V183.8H957.6Z" fill="#00ffff"/>
<path d="M961.5 181.8L961.5 193.9M963.9 182.3L968.5 182.3L968.5 193.9" stroke="#00ffff"/>
<path d="M980.6 182.7L980.6 193.9" stroke="#00ffff" stroke-width="2"/>
<path d="M980.6 182.5L986.1 182.5" stroke="#00ffff"/>
<path d="M980.9 181.8H981.9V183.8H980.9Z" fill="#00ffff"/>
<path d="M985.5 181.8L985.5 193.9" stroke="#00ffff"/>
<path d="M991.3 193.9L991.3 182.3L992.5 180.9L1004.3 180.9L1004.3 193.9M997.8 180.9L997.8 193.9" stroke="#00ffff" stroke-width="2"/>
<path d="M990.3 193.5L1005.3 193.5M1011.8 193.9L1011.8 182.3L1016.9 182.3L1016.9 193.9M1018.5 181.7L1018.5 193.9" stroke="#00ffff"/>
<path d="M1025.8 180.4L1032.7 180.4L1032.7 188.3L1025.8 188.3Z" stroke="#00ffff" stroke-width="1.1"/>
<path d="M1025.3 179.9H1033.2V182.8H1025.3Z" fill="#00ffff"/>
<path d="M1038.5 181.7L1038.5 193.9" stroke="#00ffff"/>
<path d="M1043.2 182.7L1043.2 193.9" stroke="#00ffff" stroke-width="2"/>
<path d="M1043.2 182.5L1048.5 182.5" stroke="#00ffff"/>
<path d="M1043.5 181.8H1044.5V183.8H1043.5Z" fill="#00ffff"/>
<path d="M1048.5 181.8L1048.5 193.9" stroke="#00ffff"/>
<path d="M1055.3 193.9L1055.3 182.3L1056.5 180.9L1068.3 180.9L1068.3 193.9M1061.8 180.9L1061.8 193.9" stroke="#00ffff" stroke-width="2"/>
<path d="M1054.3 193.5L1069.3 193.5M1074.9 193.9L1074.9 182.3L1079.9 182.3L1079.9 193.9" stroke="#00ffff"/>
<path d="M1091.9 193.9L1091.9 182.3L1095.9 182.3" stroke="#00ffff" stroke-width="1.5"/>
<path d="M1095.1 188.5L1096.7 188.5M1098.5 182.3L1098.5 193.9M1098.3 182.5L1104.1 182.5" stroke="#00ffff"/>
<path d="M1103.3 182.3L1103.3 193.9" stroke="#00ffff" stroke-width="1.7"/>
<path d="M957.3 199.7L957.3 210.9" stroke="#00ffff" stroke-width="2"/>
<path d="M957.3 199.5L962.1 199.5" stroke="#00ffff"/>
<path d="M957.6 198.8H958.6V200.8H957.6Z" fill="#00ffff"/>
<path d="M961.5 198.8L961.5 210.9M963.9 199.3L968.5 199.3L968.5 210.9" stroke="#00ffff"/>
<path d="M980.6 199.7L980.6 210.9" stroke="#00ffff" stroke-width="2"/>
<path d="M980.6 199.5L986.1 199.5" stroke="#00ffff"/>
<path d="M980.9 198.8H981.9V200.8H980.9Z" fill="#00ffff"/>
<path d="M985.5 198.8L985.5 210.9" stroke="#00ffff"/>
<path d="M991.3 210.9L991.3 199.3L992.5 197.9L1004.3 197.9L1004.3 210.9M997.8 197.9L997.8 210.9" stroke="#00ffff" stroke-width="2"/>
<path d="M990.3 210.5L1005.3 210.5M1011.8 210.9L1011.8 199.3L1016.9 199.3L1016.9 210.9M1018.5 198.7L1018.5 210.9" stroke="#00ffff"/>
<path d="M1025.8 197.4L1032.7 197.4L1032.7 205.3L1025.8 205.3Z" stroke="#00ffff" stroke-width="1.1"/>
<path d="M1025.3 196.9H1033.2V199.8H1025.3Z" fill="#00ffff"/>
<path d="M1038.5 198.7L1038.5 210.9" stroke="#00ffff"/>
<path d="M1043.2 199.7L1043.2 210.9" stroke="#00ffff" stroke-width="2"/>
<path d="M1043.2 199.5L1048.5 199.5" stroke="#00ffff"/>
<path d="M1043.5 198.8H1044.5V200.8H1043.5Z" fill="#00ffff"/>
<path d="M1048.5 198.8L1048.5 210.9" stroke="#00ffff"/>
<path d="M1055.3 210.9L1055.3 199.3L1056.5 197.9L1068.3 197.9L1068.3 210.9M1061.8 197.9L1061.8 210.9" stroke="#00ffff" stroke-width="2"/>
<path d="M1054.3 210.5L1069.3 210.5M1074.9 210.9L1074.9 199.3L1079.9 199.3L1079.9 210.9" stroke="#00ffff"/>
<path d="M1091.9 210.9L1091.9 199.3L1095.9 199.3" stroke="#00ffff" stroke-width="1.5"/>
<path d="M1095.1 205.5L1096.7 205.5M1098.5 199.3L1098.5 210.9M1098.3 199.5L1104.1 199.5" stroke="#00ffff"/>
<path d="M1103.3 199.3L1103.3 210.9" stroke="#00ffff" stroke-width="1.7"/>
<path d="M957.3 216.7L957.3 227.9" stroke="#00ffff" stroke-width="2"/>
<path d="M957.3 216.5L962.1 216.5" stroke="#00ffff"/>
<path d="M957.6 215.8H958.6V217.8H957.6Z" fill="#00ffff"/>
<path d="M961.5 215.8L961.5 227.9M963.9 216.3L968.5 216.3L968.5 227.9" stroke="#00ffff"/>
<path d="M980.6 216.7L980.6 227.9" stroke="#00ffff" stroke-width="2"/>
<path d="M980.6 216.5L986.1 216.5" stroke="#00ffff"/>
<path d="M980.9 215.8H981.9V217.8H980.9Z" fill="#00ffff"/>
<path d="M985.5 215.8L985.5 227.9" stroke="#00ffff"/>
<path d="M991.3 227.9L991.3 216.3L992.5 214.9L1004.3 214.9L1004.3 227.9M997.8 214.9L997.8 227.9" stroke="#00ffff" stroke-width="2"/>
<path d="M990.3 227.5L1005.3 227.5M1011.8 227.9L1011.8 216.3L1016.9 216.3L1016.9 227.9M1018.5 215.7L1018.5 227.9" stroke="#00ffff"/>
<path d="M1025.8 214.4L1032.7 214.4L1032.7 222.3L1025.8 222.3Z" stroke="#00ffff" stroke-width="1.1"/>
<path d="M1025.3 213.9H1033.2V216.8H1025.3Z" fill="#00ffff"/>
<path d="M1038.5 215.7L1038.5 227.9" stroke="#00ffff"/>
<path d="M1043.2 216.7L1043.2 227.9" stroke="#00ffff" stroke-width="2"/>
<path d="M1043.2 216.5L1048.5 216.5" stroke="#00ffff"/>
<path d="M1043.5 215.8H1044.5V217.8H1043.5Z" fill="#00ffff"/>
<path d="M1048.5 215.8L1048.5 227.9" stroke="#00ffff"/>
<path d="M1055.3 227.9L1055.3 216.3L1056.5 214.9L1068.3 214.9L1068.3 227.9M1061.8 214.9L1061.8 227.9" stroke="#00ffff" stroke-width="2"/>
<path d="M1054.3 227.5L1069.3 227.5M1074.9 227.9L1074.9 216.3L1079.9 216.3L1079.9 227.9" stroke="#00ffff"/>
<path d="M1091.9 227.9L1091.9 216.3L1095.9 216.3" stroke="#00ffff" stroke-width="1.5"/>
<path d="M1095.1 222.5L1096.7 222.5M1098.5 216.3L1098.5 227.9M1098.3 216.5L1104.1 216.5" stroke="#00ffff"/>
<path d="M1103.3 216.3L1103.3 227.9" stroke="#00ffff" stroke-width="1.7"/>
<path d="M957.3 233.8L957.3 245" stroke="#00ffff" stroke-width="2"/>
<path d="M957.3 233.5L962.1 233.5" stroke="#00ffff"/>
<path d="M957.6 232.9H958.6V234.9H957.6Z" fill="#00ffff"/>
<path d="M961.5 232.9L961.5 245M963.9 233.4L968.5 233.4L968.5 245" stroke="#00ffff"/>
<path d="M980.6 233.8L980.6 245" stroke="#00ffff" stroke-width="2"/>
<path d="M980.6 233.5L986.1 233.5" stroke="#00ffff"/>
<path d="M980.9 232.9H981.9V234.9H980.9Z" fill="#00ffff"/>
<path d="M985.5 232.9L985.5 245" stroke="#00ffff"/>
<path d="M991.3 245L991.3 233.4L992.5 232L1004.3 232L1004.3 245M997.8 232L997.8 245" stroke="#00ffff" stroke-width="2"/>
<path d="M990.3 244.5L1005.3 244.5M1011.8 245L1011.8 233.4L1016.9 233.4L1016.9 245M1018.5 232.8L1018.5 245" stroke="#00ffff"/>
<path d="M1025.8 231.5L1032.7 231.5L1032.7 239.4L1025.8 239.4Z" stroke="#00ffff" stroke-width="1.1"/>
<path d="M1025.3 231H1033.2V233.9H1025.3Z" fill="#00ffff"/>
<path d="M1038.5 232.8L1038.5 245" stroke="#00ffff"/>
<path d="M1043.2 233.8L1043.2 245" stroke="#00ffff" stroke-width="2"/>
<path d="M1043.2 233.5L1048.5 233.5" stroke="#00ffff"/>
<path d="M1043.5 232.9H1044.5V234.9H1043.5Z" fill="#00ffff"/>
<path d="M1048.5 232.9L1048.5 245" stroke="#00ffff"/>
<path d="M1055.3 245L1055.3 233.4L1056.5 232L1068.3 232L1068.3 245M1061.8 232L1061.8 245" stroke="#00ffff" stroke-width="2"/>
<path d="M1054.3 244.5L1069.3 244.5M1074.9 245L1074.9 233.4L1079.9 233.4L1079.9 245" stroke="#00ffff"/>
<path d="M1091.9 245L1091.9 233.4L1095.9 233.4" stroke="#00ffff" stroke-width="1.5"/>
<path d="M1095.1 239.5L1096.7 239.5M1098.5 233.4L1098.5 245M1098.3 233.5L1104.1 233.5" stroke="#00ffff"/>
<path d="M1103.3 233.4L1103.3 245" stroke="#00ffff" stroke-width="1.7"/>
<path d="M957.3 250.8L957.3 262" stroke="#00ffff" stroke-width="2"/>
<path d="M957.3 250.5L962.1 250.5" stroke="#00ffff"/>
<path d="M957.6 249.9H958.6V251.9H957.6Z" fill="#00ffff"/>
<path d="M961.5 249.9L961.5 262M963.9 250.4L968.5 250.4L968.5 262" stroke="#00ffff"/>
<path d="M980.6 250.8L980.6 262" stroke="#00ffff" stroke-width="2"/>
<path d="M980.6 250.5L986.1 250.5" stroke="#00ffff"/>
<path d="M980.9 249.9H981.9V251.9H980.9Z" fill="#00ffff"/>
<path d="M985.5 249.9L985.5 262" stroke="#00ffff"/>
<path d="M991.3 262L991.3 250.4L992.5 249L1004.3 249L1004.3 262M997.8 249L997.8 262" stroke="#00ffff" stroke-width="2"/>
<path d="M990.3 261.5L1005.3 261.5M1011.8 262L1011.8 250.4L1016.9 250.4L1016.9 262M1018.5 249.8L1018.5 262" stroke="#00ffff"/>
<path d="M1025.8 248.5L1032.7 248.5L1032.7 256.4L1025.8 256.4Z" stroke="#00ffff" stroke-width="1.1"/>
<path d="M1025.3 248H1033.2V250.9H1025.3Z" fill="#00ffff"/>
<path d="M1038.5 249.8L1038.5 262" stroke="#00ffff"/>
<path d="M1043.2 250.8L1043.2 262" stroke="#00ffff" stroke-width="2"/>
<path d="M1043.2 250.5L1048.5 250.5" stroke="#00ffff"/>
<path d="M1043.5 249.9H1044.5V251.9H1043.5Z" fill="#00ffff"/>
<path d="M1048.5 249.9L1048.5 262" stroke="#00ffff"/>
<path d="M1055.3 262L1055.3 250.4L1056.5 249L1068.3 249L1068.3 262M1061.8 249L1061.8 262" stroke="#00ffff" stroke-width="2"/>
<path d="M1054.3 261.5L1069.3 261.5M1074.9 262L1074.9 250.4L1079.9 250.4L1079.9 262" stroke="#00ffff"/>
<path d="M1091.9 262L1091.9 250.4L1095.9 250.4" stroke="#00ffff" stroke-width="1.5"/>
<path d="M1095.1 256.5L1096.7 256.5M1098.5 250.4L1098.5 262M1098.3 250.5L1104.1 250.5" stroke="#00ffff"/>
<path d="M1103.3 250.4L1103.3 262" stroke="#00ffff" stroke-width="1.7"/>
<path d="M957.3 267.8L957.3 279" stroke="#00ffff" stroke-width="2"/>
<path d="M957.3 267.5L962.1 267.5" stroke="#00ffff"/>
<path d="M957.6 266.9H958.6V268.9H957.6Z" fill="#00ffff"/>
<path d="M961.5 266.9L961.5 279M963.9 267.4L968.5 267.4L968.5 279" stroke="#00ffff"/>
<path d="M980.6 267.8L980.6 279" stroke="#00ffff" stroke-width="2"/>
<path d="M980.6 267.5L986.1 267.5" stroke="#00ffff"/>
<path d="M980.9 266.9H981.9V268.9H980.9Z" fill="#00ffff"/>
<path d="M985.5 266.9L985.5 279" stroke="#00ffff"/>
<path d="M991.3 279L991.3 267.4L992.5 266L1004.3 266L1004.3 279M997.8 266L997.8 279" stroke="#00ffff" stroke-width="2"/>
<path d="M990.3 278.5L1005.3 278.5M1011.8 279L1011.8 267.4L1016.9 267.4L1016.9 279M1018.5 266.8L1018.5 279" stroke="#00ffff"/>
<path d="M1025.8 265.5L1032.7 265.5L1032.7 273.4L1025.8 273.4Z" stroke="#00ffff" stroke-width="1.1"/>
<path d="M1025.3 265H1033.2V267.9H1025.3Z" fill="#00ffff"/>
<path d="M1038.5 266.8L1038.5 279" stroke="#00ffff"/>
<path d="M1043.2 267.8L1043.2 279" stroke="#00ffff" stroke-width="2"/>
<path d="M1043.2 267.5L1048.5 267.5" stroke="#00ffff"/>
<path d="M1043.5 266.9H1044.5V268.9H1043.5Z" fill="#00ffff"/>
<path d="M1048.5 266.9L1048.5 279" stroke="#00ffff"/>
<path d="M1055.3 279L1055.3 267.4L1056.5 266L1068.3 266L1068.3 279M1061.8 266L1061.8 279" stroke="#00ffff" stroke-width="2"/>
<path d="M1054.3 278.5L1069.3 278.5M1074.9 279L1074.9 267.4L1079.9 267.4L1079.9 279" stroke="#00ffff"/>
<path d="M1091.9 279L1091.9 267.4L1095.9 267.4" stroke="#00ffff" stroke-width="1.5"/>
<path d="M1095.1 273.5L1096.7 273.5M1098.5 267.4L1098.5 279M1098.3 267.5L1104.1 267.5" stroke="#00ffff"/>
<path d="M1103.3 267.4L1103.3 279" stroke="#00ffff" stroke-width="1.7"/>
<path d="M957.3 284.8L957.3 296" stroke="#00ffff" stroke-width="2"/>
<path d="M957.3 284.5L962.1 284.5" stroke="#00ffff"/>
<path d="M957.6 283.9H958.6V285.9H957.6Z" fill="#00ffff"/>
<path d="M961.5 283.9L961.5 296M963.9 284.4L968.5 284.4L968.5 296" stroke="#00ffff"/>
<path d="M980.6 284.8L980.6 296" stroke="#00ffff" stroke-width="2"/>
<path d="M980.6 284.5L986.1 284.5" stroke="#00ffff"/>
<path d="M980.9 283.9H981.9V285.9H980.9Z" fill="#00ffff"/>
<path d="M985.5 283.9L985.5 296" stroke="#00ffff"/>
<path d="M991.3 296L991.3 284.4L992.5 283L1004.3 283L1004.3 296M997.8 283L997.8 296" stroke="#00ffff" stroke-width="2"/>
<path d="M990.3 295.5L1005.3 295.5M1011.8 296L1011.8 284.4L1016.9 284.4L1016.9 296M1018.5 283.8L1018.5 296" stroke="#00ffff"/>
<path d="M1025.8 282.5L1032.7 282.5L1032.7 290.4L1025.8 290.4Z" stroke="#00ffff" stroke-width="1.1"/>
<path d="M1025.3 282H1033.2V284.9H1025.3Z" fill="#00ffff"/>
<path d="M1038.5 283.8L1038.5 296" stroke="#00ffff"/>
<path d="M1043.2 284.8L1043.2 296" stroke="#00ffff" stroke-width="2"/>
<path d="M1043.2 284.5L1048.5 284.5" stroke="#00ffff"/>
<path d="M1043.5 283.9H1044.5V285.9H1043.5Z" fill="#00ffff"/>
<path d="M1048.5 283.9L1048.5 296" stroke="#00ffff"/>
<path d="M1055.3 296L1055.3 284.4L1056.5 283L1068.3 283L1068.3 296M1061.8 283L1061.8 296" stroke="#00ffff" stroke-width="2"/>
<path d="M1054.3 295.5L1069.3 295.5M1074.9 296L1074.9 284.4L1079.9 284.4L1079.9 296" stroke="#00ffff"/>
<path d="M1091.9 296L1091.9 284.4L1095.9 284.4" stroke="#00ffff" stroke-width="1.5"/>
<path d="M1095.1 290.5L1096.7 290.5M1098.5 284.4L1098.5 296M1098.3 284.5L1104.1 284.5" stroke="#00ffff"/>
<path d="M1103.3 284.4L1103.3 296" stroke="#00ffff" stroke-width="1.7"/>
<path d="M957.3 301.8L957.3 313" stroke="#00ffff" stroke-width="2"/>
<path d="M957.3 301.5L962.1 301.5" stroke="#00ffff"/>
<path d="M957.6 300.9H958.6V302.9H957.6Z" fill="#00ffff"/>
<path d="M961.5 300.9L961.5 313M963.9 301.4L968.5 301.4L968.5 313" stroke="#00ffff"/>
<path d="M980.6 301.8L980.6 313" stroke="#00ffff" stroke-width="2"/>
<path d="M980.6 301.5L986.1 301.5" stroke="#00ffff"/>
<path d="M980.9 300.9H981.9V302.9H980.9Z" fill="#00ffff"/>
<path d="M985.5 300.9L985.5 313" stroke="#00ffff"/>
<path d="M991.3 313L991.3 301.4L992.5 300L1004.3 300L1004.3 313M997.8 300L997.8 313" stroke="#00ffff" stroke-width="2"/>
<path d="M990.3 312.5L1005.3 312.5M1011.8 313L1011.8 301.4L1016.9 301.4L1016.9 313M1018.5 300.8L1018.5 313" stroke="#00ffff"/>
<path d="M1025.8 299.5L1032.7 299.5L1032.7 307.4L1025.8 307.4Z" stroke="#00ffff" stroke-width="1.1"/>
<path d="M1025.3 299H1033.2V301.9H1025.3Z" fill="#00ffff"/>
<path d="M1038.5 300.8L1038.5 313" stroke="#00ffff"/>
<path d="M1043.2 301.8L1043.2 313" stroke="#00ffff" stroke-width="2"/>
<path d="M1043.2 301.5L1048.5 301.5" stroke="#00ffff"/>
<path d="M1043.5 300.9H1044.5V302.9H1043.5Z" fill="#00ffff"/>
<path d="M1048.5 300.9L1048.5 313" stroke="#00ffff"/>
<path d="M1055.3 313L1055.3 301.4L1056.5 300L1068.3 300L1068.3 313M1061.8 300L1061.8 313" stroke="#00ffff" stroke-width="2"/>
<path d="M1054.3 312.5L1069.3 312.5M1074.9 313L1074.9 301.4L1079.9 301.4L1079.9 313" stroke="#00ffff"/>
<path d="M1091.9 313L1091.9 301.4L1095.9 301.4" stroke="#00ffff" stroke-width="1.5"/>
<path d="M1095.1 307.5L1096.7 307.5M1098.5 301.4L1098.5 313M1098.3 301.5L1104.1 301.5" stroke="#00ffff"/>
<path d="M1103.3 301.4L1103.3 313" stroke="#00ffff" stroke-width="1.7"/>
<path d="M957.3 318.9L957.3 330.1" stroke="#00ffff" stroke-width="2"/>
<path d="M957.3 318.5L962.1 318.5" stroke="#00ffff"/>
<path d="M957.6 318H958.6V320H957.6Z" fill="#00ffff"/>
<path d="M961.5 318L961.5 330.1M963.9 318.5L968.5 318.5L968.5 330.1" stroke="#00ffff"/>
<path d="M980.6 318.9L980.6 330.1" stroke="#00ffff" stroke-width="2"/>
<path d="M980.6 318.5L986.1 318.5" stroke="#00ffff"/>
<path d="M980.9 318H981.9V320H980.9Z" fill="#00ffff"/>
<path d="M985.5 318L985.5 330.1" stroke="#00ffff"/>
<path d="M991.3 330.1L991.3 318.5L992.5 317.1L1004.3 317.1L1004.3 330.1M997.8 317.1L997.8 330.1" stroke="#00ffff" stroke-width="2"/>
<path d="M990.3 329.5L1005.3 329.5M1011.8 330.1L1011.8 318.5L1016.9 318.5L1016.9 330.1M1018.5 317.9L1018.5 330.1" stroke="#00ffff"/>
<path d="M1025.8 316.6L1032.7 316.6L1032.7 324.5L1025.8 324.5Z" stroke="#00ffff" stroke-width="1.1"/>
<path d="M1025.3 316.1H1033.2V319H1025.3Z" fill="#00ffff"/>
<path d="M1038.5 317.9L1038.5 330.1" stroke="#00ffff"/>
<path d="M1043.2 318.9L1043.2 330.1" stroke="#00ffff" stroke-width="2"/>
<path d="M1043.2 318.5L1048.5 318.5" stroke="#00ffff"/>
<path d="M1043.5 318H1044.5V320H1043.5Z" fill="#00ffff"/>
<path d="M1048.5 318L1048.5 330.1" stroke="#00ffff"/>
<path d="M1055.3 330.1L1055.3 318.5L1056.5 317.1L1068.3 317.1L1068.3 330.1M1061.8 317.1L1061.8 330.1" stroke="#00ffff" stroke-width="2"/>
<path d="M1054.3 329.5L1069.3 329.5M1074.9 330.1L1074.9 318.5L1079.9 318.5L1079.9 330.1" stroke="#00ffff"/>
<path d="M1091.9 330.1L1091.9 318.5L1095.9 318.5" stroke="#00ffff" stroke-width="1.5"/>
<path d="M1095.1 324.5L1096.7 324.5M1098.5 318.5L1098.5 330.1M1098.3 318.5L1104.1 318.5" stroke="#00ffff"/>
<path d="M1103.3 318.5L1103.3 330.1" stroke="#00ffff" stroke-width="1.7"/>
<path d="M957.3 335.9L957.3 347.1" stroke="#00ffff" stroke-width="2"/>
<path d="M957.3 335.5L962.1 335.5" stroke="#00ffff"/>
<path d="M957.6 335H958.6V337H957.6Z" fill="#00ffff"/>
<path d="M961.5 335L961.5 347.1M963.9 335.5L968.5 335.5L968.5 347.1" stroke="#00ffff"/>
<path d="M980.6 335.9L980.6 347.1" stroke="#00ffff" stroke-width="2"/>
<path d="M980.6 335.5L986.1 335.5" stroke="#00ffff"/>
<path d="M980.9 335H981.9V337H980.9Z" fill="#00ffff"/>
<path d="M985.5 335L985.5 347.1" stroke="#00ffff"/>
<path d="M991.3 347.1L991.3 335.5L992.5 334.1L1004.3 334.1L1004.3 347.1M997.8 334.1L997.8 347.1" stroke="#00ffff" stroke-width="2"/>
<path d="M990.3 346.5L1005.3 346.5M1011.8 347.1L1011.8 335.5L1016.9 335.5L1016.9 347.1M1018.5 334.9L1018.5 347.1" stroke="#00ffff"/>
<path d="M1025.8 333.6L1032.7 333.6L1032.7 341.5L1025.8 341.5Z" stroke="#00ffff" stroke-width="1.1"/>
<path d="M1025.3 333.1H1033.2V336H1025.3Z" fill="#00ffff"/>
<path d="M1038.5 334.9L1038.5 347.1" stroke="#00ffff"/>
<path d="M1043.2 335.9L1043.2 347.1" stroke="#00ffff" stroke-width="2"/>
<path d="M1043.2 335.5L1048.5 335.5" stroke="#00ffff"/>
<path d="M1043.5 335H1044.5V337H1043.5Z" fill="#00ffff"/>
<path d="M1048.5 335L1048.5 347.1" stroke="#00ffff"/>
<path d="M1055.3 347.1L1055.3 335.5L1056.5 334.1L1068.3 334.1L1068.3 347.1M1061.8 334.1L1061.8 347.1" stroke="#00ffff" stroke-width="2"/>
<path d="M1054.3 346.5L1069.3 346.5M1074.9 347.1L1074.9 335.5L1079.9 335.5L1079.9 347.1" stroke="#00ffff"/>
<path d="M1091.9 347.1L1091.9 335.5L1095.9 335.5" stroke="#00ffff" stroke-width="1.5"/>
<path d="M1095.1 341.5L1096.7 341.5M1098.5 335.5L1098.5 347.1M1098.3 335.5L1104.1 335.5" stroke="#00ffff"/>
<path d="M1103.3 335.5L1103.3 347.1" stroke="#00ffff" stroke-width="1.7"/>
<path d="M957.3 352.9L957.3 364.1" stroke="#00ffff" stroke-width="2"/>
<path d="M957.3 352.5L962.1 352.5" stroke="#00ffff"/>
<path d="M957.6 352H958.6V354H957.6Z" fill="#00ffff"/>
<path d="M961.5 352L961.5 364.1M963.9 352.5L968.5 352.5L968.5 364.1" stroke="#00ffff"/>
<path d="M980.6 352.9L980.6 364.1" stroke="#00ffff" stroke-width="2"/>
<path d="M980.6 352.5L986.1 352.5" stroke="#00ffff"/>
<path d="M980.9 352H981.9V354H980.9Z" fill="#00ffff"/>
<path d="M985.5 352L985.5 364.1" stroke="#00ffff"/>
<path d="M991.3 364.1L991.3 352.5L992.5 351.1L1004.3 351.1L1004.3 364.1M997.8 351.1L997.8 364.1" stroke="#00ffff" stroke-width="2"/>
<path d="M990.3 363.5L1005.3 363.5M1011.8 364.1L1011.8 352.5L1016.9 352.5L1016.9 364.1M1018.5 351.9L1018.5 364.1" stroke="#00ffff"/>
<path d="M1025.8 350.6L1032.7 350.6L1032.7 358.5L1025.8 358.5Z" stroke="#00ffff" stroke-width="1.1"/>
<path d="M1025.3 350.1H1033.2V353H1025.3Z" fill="#00ffff"/>
<path d="M1038.5 351.9L1038.5 364.1" stroke="#00ffff"/>
<path d="M1043.2 352.9L1043.2 364.1" stroke="#00ffff" stroke-width="2"/>
<path d="M1043.2 352.5L1048.5 352.5" stroke="#00ffff"/>
<path d="M1043.5 352H1044.5V354H1043.5Z" fill="#00ffff"/>
<path d="M1048.5 352L1048.5 364.1" stroke="#00ffff"/>
<path d="M1055.3 364.1L1055.3 352.5L1056.5 351.1L1068.3 351.1L1068.3 364.1M1061.8 351.1L1061.8 364.1" stroke="#00ffff" stroke-width="2"/>
<path d="M1054.3 363.5L1069.3 363.5M1074.9 364.1L1074.9 352.5L1079.9 352.5L1079.9 364.1" stroke="#00ffff"/>
<path d="M1091.9 364.1L1091.9 352.5L1095.9 352.5" stroke="#00ffff" stroke-width="1.5"/>
<path d="M1095.1 358.5L1096.7 358.5M1098.5 352.5L1098.5 364.1M1098.3 352.5L1104.1 352.5" stroke="#00ffff"/>
<path d="M1103.3 352.5L1103.3 364.1" stroke="#00ffff" stroke-width="1.7"/>
<path d="M957.3 369.9L957.3 381.1" stroke="#00ffff" stroke-width="2"/>
<path d="M957.3 369.5L962.1 369.5" stroke="#00ffff"/>
<path d="M957.6 369H958.6V371H957.6Z" fill="#00ffff"/>
<path d="M961.5 369L961.5 381.1M963.9 369.5L968.5 369.5L968.5 381.1" stroke="#00ffff"/>
<path d="M980.6 369.9L980.6 381.1" stroke="#00ffff" stroke-width="2"/>
<path d="M980.6 369.5L986.1 369.5" stroke="#00ffff"/>
<path d="M980.9 369H981.9V371H980.9Z" fill="#00ffff"/>
<path d="M985.5 369L985.5 381.1" stroke="#00ffff"/>
<path d="M991.3 381.1L991.3 369.5L992.5 368.1L1004.3 368.1L1004.3 381.1M997.8 368.1L997.8 381.1" stroke="#00ffff" stroke-width="2"/>
<path d="M990.3 380.5L1005.3 380.5M1011.8 381.1L1011.8 369.5L1016.9 369.5L1016.9 381.1M1018.5 368.9L1018.5 381.1" stroke="#00ffff"/>
<path d="M1025.8 367.6L1032.7 367.6L1032.7 375.5L1025.8 375.5Z" stroke="#00ffff" stroke-width="1.1"/>
<path d="M1025.3 367.1H1033.2V370H1025.3Z" fill="#00ffff"/>
<path d="M1038.5 368.9L1038.5 381.1" stroke="#00ffff"/>
<path d="M1043.2 369.9L1043.2 381.1" stroke="#00ffff" stroke-width="2"/>
<path d="M1043.2 369.5L1048.5 369.5" stroke="#00ffff"/>
<path d="M1043.5 369H1044.5V371H1043.5Z" fill="#00ffff"/>
<path d="M1048.5 369L1048.5 381.1" stroke="#00ffff"/>
<path d="M1055.3 381.1L1055.3 369.5L1056.5 368.1L1068.3 368.1L1068.3 381.1M1061.8 368.1L1061.8 381.1" stroke="#00ffff" stroke-width="2"/>
<path d="M1054.3 380.5L1069.3 380.5M1074.9 381.1L1074.9 369.5L1079.9 369.5L1079.9 381.1" stroke="#00ffff"/>
<path d="M1091.9 381.1L1091.9 369.5L1095.9 369.5" stroke="#00ffff" stroke-width="1.5"/>
<path d="M1095.1 375.5L1096.7 375.5M1098.5 369.5L1098.5 381.1M1098.3 369.5L1104.1 369.5" stroke="#00ffff"/>
<path d="M1103.3 369.5L1103.3 381.1" stroke="#00ffff" stroke-width="1.7"/>
<path d="M957.3 386.9L957.3 398.1" stroke="#00ffff" stroke-width="2"/>
<path d="M957.3 386.5L962.1 386.5" stroke="#00ffff"/>
<path d="M957.6 386H958.6V388H957.6Z" fill="#00ffff"/>
<path d="M961.5 386L961.5 398.1M963.9 386.5L968.5 386.5L968.5 398.1" stroke="#00ffff"/>
<path d="M980.6 386.9L980.6 398.1" stroke="#00ffff" stroke-width="2"/>
<path d="M980.6 386.5L986.1 386.5" stroke="#00ffff"/>
<path d="M980.9 386H981.9V388H980.9Z" fill="#00ffff"/>
<path d="M985.5 386L985.5 398.1" stroke="#00ffff"/>
<path d="M991.3 398.1L991.3 386.5L992.5 385.1L1004.3 385.1L1004.3 398.1M997.8 385.1L997.8 398.1" stroke="#00ffff" stroke-width="2"/>
<path d="M990.3 397.5L1005.3 397.5M1011.8 398.1L1011.8 386.5L1016.9 386.5L1016.9 398.1M1018.5 385.9L1018.5 398.1" stroke="#00ffff"/>
<path d="M1025.8 384.6L1032.7 384.6L1032.7 392.5L1025.8 392.5Z" stroke="#00ffff" stroke-width="1.1"/>
<path d="M1025.3 384.1H1033.2V387H1025.3Z" fill="#00ffff"/>
<path d="M1038.5 385.9L1038.5 398.1" stroke="#00ffff"/>
<path d="M1043.2 386.9L1043.2 398.1" stroke="#00ffff" stroke-width="2"/>
<path d="M1043.2 386.5L1048.5 386.5" stroke="#00ffff"/>
<path d="M1043.5 386H1044.5V388H1043.5Z" fill="#00ffff"/>
<path d="M1048.5 386L1048.5 398.1" stroke="#00ffff"/>
<path d="M1055.3 398.1L1055.3 386.5L1056.5 385.1L1068.3 385.1L1068.3 398.1M1061.8 385.1L1061.8 398.1" stroke="#00ffff" stroke-width="2"/>
<path d="M1054.3 397.5L1069.3 397.5M1074.9 398.1L1074.9 386.5L1079.9 386.5L1079.9 398.1" stroke="#00ffff"/>
<path d="M1091.9 398.1L1091.9 386.5L1095.9 386.5" stroke="#00ffff" stroke-width="1.5"/>
<path d="M1095.1 392.5L1096.7 392.5M1098.5 386.5L1098.5 398.1M1098.3 386.5L1104.1 386.5" stroke="#00ffff"/>
<path d="M1103.3 386.5L1103.3 398.1" stroke="#00ffff" stroke-width="1.7"/>
<path d="M963 92.6L963 400.1" stroke="#cbcbcb" stroke-width="2"/>
<path d="M987.7 92.6L987.7 400.1M1009.9 92.6L1009.9 400.1" stroke="#cbcbcb" stroke-width="1.5"/>
<path d="M1019.5 92.6L1019.5 400.1M1039.5 92.6L1039.5 400.1" stroke="#cbcbcb"/>
<path d="M1049.5 92.6L1049.5 400.1M1072.9 92.6L1072.9 400.1" stroke="#cbcbcb" stroke-width="1.5"/>
<path d="M1097.3 92.6L1097.3 400.1M946.9 109.8L1112.4 109.8" stroke="#cbcbcb" stroke-width="2"/>
<path d="M949.9 110.5L961.9 110.5M1098.9 110.5L1110.4 110.5" stroke="#555" stroke-dasharray="1 2"/>
<path d="M946.9 126.8L1112.4 126.8" stroke="#cbcbcb" stroke-width="2"/>
<path d="M949.9 127.5L961.9 127.5M1098.9 127.5L1110.4 127.5" stroke="#555" stroke-dasharray="1 2"/>
<path d="M946.9 143.8L1112.4 143.8" stroke="#cbcbcb" stroke-width="2"/>
<path d="M949.9 144.5L961.9 144.5M1098.9 144.5L1110.4 144.5" stroke="#555" stroke-dasharray="1 2"/>
<path d="M946.9 160.9L1112.4 160.9" stroke="#cbcbcb" stroke-width="2"/>
<path d="M949.9 161.5L961.9 161.5M1098.9 161.5L1110.4 161.5" stroke="#555" stroke-dasharray="1 2"/>
<path d="M946.9 177.9L1112.4 177.9" stroke="#cbcbcb" stroke-width="2"/>
<path d="M949.9 178.5L961.9 178.5M1098.9 178.5L1110.4 178.5" stroke="#555" stroke-dasharray="1 2"/>
<path d="M946.9 194.9L1112.4 194.9" stroke="#cbcbcb" stroke-width="2"/>
<path d="M949.9 195.5L961.9 195.5M1098.9 195.5L1110.4 195.5" stroke="#555" stroke-dasharray="1 2"/>
<path d="M946.9 211.9L1112.4 211.9" stroke="#cbcbcb" stroke-width="2"/>
<path d="M949.9 212.5L961.9 212.5M1098.9 212.5L1110.4 212.5" stroke="#555" stroke-dasharray="1 2"/>
<path d="M946.9 228.9L1112.4 228.9" stroke="#cbcbcb" stroke-width="2"/>
<path d="M949.9 229.5L961.9 229.5M1098.9 229.5L1110.4 229.5" stroke="#555" stroke-dasharray="1 2"/>
<path d="M946.9 246L1112.4 246" stroke="#cbcbcb" stroke-width="2"/>
<path d="M949.9 246.5L961.9 246.5M1098.9 246.5L1110.4 246.5" stroke="#555" stroke-dasharray="1 2"/>
<path d="M946.9 263L1112.4 263" stroke="#cbcbcb" stroke-width="2"/>
<path d="M949.9 263.5L961.9 263.5M1098.9 263.5L1110.4 263.5" stroke="#555" stroke-dasharray="1 2"/>
<path d="M946.9 280L1112.4 280" stroke="#cbcbcb" stroke-width="2"/>
<path d="M949.9 280.5L961.9 280.5M1098.9 280.5L1110.4 280.5" stroke="#555" stroke-dasharray="1 2"/>
<path d="M946.9 297L1112.4 297" stroke="#cbcbcb" stroke-width="2"/>
<path d="M949.9 297.5L961.9 297.5M1098.9 297.5L1110.4 297.5" stroke="#555" stroke-dasharray="1 2"/>
<path d="M946.9 314L1112.4 314" stroke="#cbcbcb" stroke-width="2"/>
<path d="M949.9 314.5L961.9 314.5M1098.9 314.5L1110.4 314.5" stroke="#555" stroke-dasharray="1 2"/>
<path d="M946.9 331.1L1112.4 331.1" stroke="#cbcbcb" stroke-width="2"/>
<path d="M949.9 331.5L961.9 331.5M1098.9 331.5L1110.4 331.5" stroke="#555" stroke-dasharray="1 2"/>
<path d="M946.9 348.1L1112.4 348.1" stroke="#cbcbcb" stroke-width="2"/>
<path d="M949.9 348.5L961.9 348.5M1098.9 348.5L1110.4 348.5" stroke="#555" stroke-dasharray="1 2"/>
<path d="M946.9 365.1L1112.4 365.1" stroke="#cbcbcb" stroke-width="2"/>
<path d="M949.9 365.5L961.9 365.5M1098.9 365.5L1110.4 365.5" stroke="#555" stroke-dasharray="1 2"/>
<path d="M946.9 382.1L1112.4 382.1" stroke="#cbcbcb" stroke-width="2"/>
<path d="M949.9 382.5L961.9 382.5M1098.9 382.5L1110.4 382.5" stroke="#555" stroke-dasharray="1 2"/>
<path d="M946.9 399.1L1112.4 399.1" stroke="#cbcbcb" stroke-width="2"/>
<path d="M949.9 399.5L961.9 399.5M1098.9 399.5L1110.4 399.5" stroke="#555" stroke-dasharray="1 2"/>
<path d="M1125.6 97.6L1125.6 108.8" stroke="#00ffff" stroke-width="2"/>
<path d="M1125.6 97.5L1130.4 97.5" stroke="#00ffff"/>
<path d="M1125.9 96.7H1126.9V98.7H1125.9Z" fill="#00ffff"/>
<path d="M1130.5 96.7L1130.5 108.8M1132.2 97.2L1136.8 97.2L1136.8 108.8" stroke="#00ffff"/>
<path d="M1148.9 97.6L1148.9 108.8" stroke="#00ffff" stroke-width="2"/>
<path d="M1148.9 97.5L1154.4 97.5" stroke="#00ffff"/>
<path d="M1149.2 96.7H1150.2V98.7H1149.2Z" fill="#00ffff"/>
<path d="M1154.5 96.7L1154.5 108.8" stroke="#00ffff"/>
<path d="M1159.6 108.8L1159.6 97.2L1160.8 95.8L1172.6 95.8L1172.6 108.8M1166.1 95.8L1166.1 108.8" stroke="#00ffff" stroke-width="2"/>
<path d="M1158.6 108.5L1173.6 108.5M1180.1 108.8L1180.1 97.2L1185.2 97.2L1185.2 108.8M1187.5 96.6L1187.5 108.8" stroke="#00ffff"/>
<path d="M1194.1 95.3L1201 95.3L1201 103.2L1194.1 103.2Z" stroke="#00ffff" stroke-width="1.1"/>
<path d="M1193.6 94.8H1201.5V97.7H1193.6Z" fill="#00ffff"/>
<path d="M1207.5 96.6L1207.5 108.8" stroke="#00ffff"/>
<path d="M1211.5 97.6L1211.5 108.8" stroke="#00ffff" stroke-width="2"/>
<path d="M1211.5 97.5L1216.8 97.5" stroke="#00ffff"/>
<path d="M1211.8 96.7H1212.8V98.7H1211.8Z" fill="#00ffff"/>
<path d="M1216.5 96.7L1216.5 108.8" stroke="#00ffff"/>
<path d="M1223.6 108.8L1223.6 97.2L1224.8 95.8L1236.6 95.8L1236.6 108.8M1230.1 95.8L1230.1 108.8" stroke="#00ffff" stroke-width="2"/>
<path d="M1222.6 108.5L1237.6 108.5M1243.2 108.8L1243.2 97.2L1248.2 97.2L1248.2 108.8" stroke="#00ffff"/>
<path d="M1260.2 108.8L1260.2 97.2L1264.2 97.2" stroke="#00ffff" stroke-width="1.5"/>
<path d="M1263.4 103.5L1265 103.5M1267.5 97.2L1267.5 108.8M1266.6 97.5L1272.4 97.5" stroke="#00ffff"/>
<path d="M1271.6 97.2L1271.6 108.8" stroke="#00ffff" stroke-width="1.7"/>
<path d="M1125.6 103.5L1127.2 103.5" stroke="#00ffff"/>
<path d="M1125.6 114.6L1125.6 125.8" stroke="#00ffff" stroke-width="2"/>
<path d="M1125.6 114.5L1130.4 114.5" stroke="#00ffff"/>
<path d="M1125.9 113.7H1126.9V115.7H1125.9Z" fill="#00ffff"/>
<path d="M1130.5 113.7L1130.5 125.8M1132.2 114.2L1136.8 114.2L1136.8 125.8" stroke="#00ffff"/>
<path d="M1148.9 114.6L1148.9 125.8" stroke="#00ffff" stroke-width="2"/>
<path d="M1148.9 114.5L1154.4 114.5" stroke="#00ffff"/>
<path d="M1149.2 113.7H1150.2V115.7H1149.2Z" fill="#00ffff"/>
<path d="M1154.5 113.7L1154.5 125.8" stroke="#00ffff"/>
<path d="M1159.6 125.8L1159.6 114.2L1160.8 112.8L1172.6 112.8L1172.6 125.8M1166.1 112.8L1166.1 125.8" stroke="#00ffff" stroke-width="2"/>
<path d="M1158.6 125.5L1173.6 125.5M1180.1 125.8L1180.1 114.2L1185.2 114.2L1185.2 125.8M1187.5 113.6L1187.5 125.8" stroke="#00ffff"/>
<path d="M1194.1 112.3L1201 112.3L1201 120.2L1194.1 120.2Z" stroke="#00ffff" stroke-width="1.1"/>
<path d="M1193.6 111.8H1201.5V114.7H1193.6Z" fill="#00ffff"/>
<path d="M1207.5 113.6L1207.5 125.8" stroke="#00ffff"/>
<path d="M1211.5 114.6L1211.5 125.8" stroke="#00ffff" stroke-width="2"/>
<path d="M1211.5 114.5L1216.8 114.5" stroke="#00ffff"/>
<path d="M1211.8 113.7H1212.8V115.7H1211.8Z" fill="#00ffff"/>
<path d="M1216.5 113.7L1216.5 125.8" stroke="#00ffff"/>
<path d="M1223.6 125.8L1223.6 114.2L1224.8 112.8L1236.6 112.8L1236.6 125.8M1230.1 112.8L1230.1 125.8" stroke="#00ffff" stroke-width="2"/>
<path d="M1222.6 125.5L1237.6 125.5M1243.2 125.8L1243.2 114.2L1248.2 114.2L1248.2 125.8" stroke="#00ffff"/>
<path d="M1260.2 125.8L1260.2 114.2L1264.2 114.2" stroke="#00ffff" stroke-width="1.5"/>
<path d="M1263.4 120.5L1265 120.5M1267.5 114.2L1267.5 125.8M1266.6 114.5L1272.4 114.5" stroke="#00ffff"/>
<path d="M1271.6 114.2L1271.6 125.8" stroke="#00ffff" stroke-width="1.7"/>
<path d="M1125.6 120.5L1127.2 120.5" stroke="#00ffff"/>
<path d="M1125.6 131.6L1125.6 142.8" stroke="#00ffff" stroke-width="2"/>
<path d="M1125.6 131.5L1130.4 131.5" stroke="#00ffff"/>
<path d="M1125.9 130.7H1126.9V132.7H1125.9Z" fill="#00ffff"/>
<path d="M1130.5 130.7L1130.5 142.8M1132.2 131.2L1136.8 131.2L1136.8 142.8" stroke="#00ffff"/>
<path d="M1148.9 131.6L1148.9 142.8" stroke="#00ffff" stroke-width="2"/>
<path d="M1148.9 131.5L1154.4 131.5" stroke="#00ffff"/>
<path d="M1149.2 130.7H1150.2V132.7H1149.2Z" fill="#00ffff"/>
<path d="M1154.5 130.7L1154.5 142.8" stroke="#00ffff"/>
<path d="M1159.6 142.8L1159.6 131.2L1160.8 129.8L1172.6 129.8L1172.6 142.8M1166.1 129.8L1166.1 142.8" stroke="#00ffff" stroke-width="2"/>
<path d="M1158.6 142.5L1173.6 142.5M1180.1 142.8L1180.1 131.2L1185.2 131.2L1185.2 142.8M1187.5 130.6L1187.5 142.8" stroke="#00ffff"/>
<path d="M1194.1 129.3L1201 129.3L1201 137.2L1194.1 137.2Z" stroke="#00ffff" stroke-width="1.1"/>
<path d="M1193.6 128.8H1201.5V131.7H1193.6Z" fill="#00ffff"/>
<path d="M1207.5 130.6L1207.5 142.8" stroke="#00ffff"/>
<path d="M1211.5 131.6L1211.5 142.8" stroke="#00ffff" stroke-width="2"/>
<path d="M1211.5 131.5L1216.8 131.5" stroke="#00ffff"/>
<path d="M1211.8 130.7H1212.8V132.7H1211.8Z" fill="#00ffff"/>
<path d="M1216.5 130.7L1216.5 142.8" stroke="#00ffff"/>
<path d="M1223.6 142.8L1223.6 131.2L1224.8 129.8L1236.6 129.8L1236.6 142.8M1230.1 129.8L1230.1 142.8" stroke="#00ffff" stroke-width="2"/>
<path d="M1222.6 142.5L1237.6 142.5M1243.2 142.8L1243.2 131.2L1248.2 131.2L1248.2 142.8" stroke="#00ffff"/>
<path d="M1260.2 142.8L1260.2 131.2L1264.2 131.2" stroke="#00ffff" stroke-width="1.5"/>
<path d="M1263.4 137.5L1265 137.5M1267.5 131.2L1267.5 142.8M1266.6 131.5L1272.4 131.5" stroke="#00ffff"/>
<path d="M1271.6 131.2L1271.6 142.8" stroke="#00ffff" stroke-width="1.7"/>
<path d="M1125.6 137.5L1127.2 137.5" stroke="#00ffff"/>
<path d="M1125.6 148.7L1125.6 159.9" stroke="#00ffff" stroke-width="2"/>
<path d="M1125.6 148.5L1130.4 148.5" stroke="#00ffff"/>
<path d="M1125.9 147.8H1126.9V149.8H1125.9Z" fill="#00ffff"/>
<path d="M1130.5 147.8L1130.5 159.9M1132.2 148.3L1136.8 148.3L1136.8 159.9" stroke="#00ffff"/>
<path d="M1148.9 148.7L1148.9 159.9" stroke="#00ffff" stroke-width="2"/>
<path d="M1148.9 148.5L1154.4 148.5" stroke="#00ffff"/>
<path d="M1149.2 147.8H1150.2V149.8H1149.2Z" fill="#00ffff"/>
<path d="M1154.5 147.8L1154.5 159.9" stroke="#00ffff"/>
<path d="M1159.6 159.9L1159.6 148.3L1160.8 146.9L1172.6 146.9L1172.6 159.9M1166.1 146.9L1166.1 159.9" stroke="#00ffff" stroke-width="2"/>
<path d="M1158.6 159.5L1173.6 159.5M1180.1 159.9L1180.1 148.3L1185.2 148.3L1185.2 159.9M1187.5 147.7L1187.5 159.9" stroke="#00ffff"/>
<path d="M1194.1 146.4L1201 146.4L1201 154.3L1194.1 154.3Z" stroke="#00ffff" stroke-width="1.1"/>
<path d="M1193.6 145.9H1201.5V148.8H1193.6Z" fill="#00ffff"/>
<path d="M1207.5 147.7L1207.5 159.9" stroke="#00ffff"/>
<path d="M1211.5 148.7L1211.5 159.9" stroke="#00ffff" stroke-width="2"/>
<path d="M1211.5 148.5L1216.8 148.5" stroke="#00ffff"/>
<path d="M1211.8 147.8H1212.8V149.8H1211.8Z" fill="#00ffff"/>
<path d="M1216.5 147.8L1216.5 159.9" stroke="#00ffff"/>
<path d="M1223.6 159.9L1223.6 148.3L1224.8 146.9L1236.6 146.9L1236.6 159.9M1230.1 146.9L1230.1 159.9" stroke="#00ffff" stroke-width="2"/>
<path d="M1222.6 159.5L1237.6 159.5M1243.2 159.9L1243.2 148.3L1248.2 148.3L1248.2 159.9" stroke="#00ffff"/>
<path d="M1260.2 159.9L1260.2 148.3L1264.2 148.3" stroke="#00ffff" stroke-width="1.5"/>
<path d="M1263.4 154.5L1265 154.5M1267.5 148.3L1267.5 159.9M1266.6 148.5L1272.4 148.5" stroke="#00ffff"/>
<path d="M1271.6 148.3L1271.6 159.9" stroke="#00ffff" stroke-width="1.7"/>
<path d="M1125.6 154.5L1127.2 154.5" stroke="#00ffff"/>
<path d="M1125.6 165.7L1125.6 176.9" stroke="#00ffff" stroke-width="2"/>
<path d="M1125.6 165.5L1130.4 165.5" stroke="#00ffff"/>
<path d="M1125.9 164.8H1126.9V166.8H1125.9Z" fill="#00ffff"/>
<path d="M1130.5 164.8L1130.5 176.9M1132.2 165.3L1136.8 165.3L1136.8 176.9" stroke="#00ffff"/>
<path d="M1148.9 165.7L1148.9 176.9" stroke="#00ffff" stroke-width="2"/>
<path d="M1148.9 165.5L1154.4 165.5" stroke="#00ffff"/>
<path d="M1149.2 164.8H1150.2V166.8H1149.2Z" fill="#00ffff"/>
<path d="M1154.5 164.8L1154.5 176.9" stroke="#00ffff"/>
<path d="M1159.6 176.9L1159.6 165.3L1160.8 163.9L1172.6 163.9L1172.6 176.9M1166.1 163.9L1166.1 176.9" stroke="#00ffff" stroke-width="2"/>
<path d="M1158.6 176.5L1173.6 176.5M1180.1 176.9L1180.1 165.3L1185.2 165.3L1185.2 176.9M1187.5 164.7L1187.5 176.9" stroke="#00ffff"/>
<path d="M1194.1 163.4L1201 163.4L1201 171.3L1194.1 171.3Z" stroke="#00ffff" stroke-width="1.1"/>
<path d="M1193.6 162.9H1201.5V165.8H1193.6Z" fill="#00ffff"/>
<path d="M1207.5 164.7L1207.5 176.9" stroke="#00ffff"/>
<path d="M1211.5 165.7L1211.5 176.9" stroke="#00ffff" stroke-width="2"/>
<path d="M1211.5 165.5L1216.8 165.5" stroke="#00ffff"/>
<path d="M1211.8 164.8H1212.8V166.8H1211.8Z" fill="#00ffff"/>
<path d="M1216.5 164.8L1216.5 176.9" stroke="#00ffff"/>
<path d="M1223.6 176.9L1223.6 165.3L1224.8 163.9L1236.6 163.9L1236.6 176.9M1230.1 163.9L1230.1 176.9" stroke="#00ffff" stroke-width="2"/>
<path d="M1222.6 176.5L1237.6 176.5M1243.2 176.9L1243.2 165.3L1248.2 165.3L1248.2 176.9" stroke="#00ffff"/>
<path d="M1260.2 176.9L1260.2 165.3L1264.2 165.3" stroke="#00ffff" stroke-width="1.5"/>
<path d="M1263.4 171.5L1265 171.5M1267.5 165.3L1267.5 176.9M1266.6 165.5L1272.4 165.5" stroke="#00ffff"/>
<path d="M1271.6 165.3L1271.6 176.9" stroke="#00ffff" stroke-width="1.7"/>
<path d="M1125.6 171.5L1127.2 171.5" stroke="#00ffff"/>
<path d="M1125.6 182.7L1125.6 193.9" stroke="#00ffff" stroke-width="2"/>
<path d="M1125.6 182.5L1130.4 182.5" stroke="#00ffff"/>
<path d="M1125.9 181.8H1126.9V183.8H1125.9Z" fill="#00ffff"/>
<path d="M1130.5 181.8L1130.5 193.9M1132.2 182.3L1136.8 182.3L1136.8 193.9" stroke="#00ffff"/>
<path d="M1148.9 182.7L1148.9 193.9" stroke="#00ffff" stroke-width="2"/>
<path d="M1148.9 182.5L1154.4 182.5" stroke="#00ffff"/>
<path d="M1149.2 181.8H1150.2V183.8H1149.2Z" fill="#00ffff"/>
<path d="M1154.5 181.8L1154.5 193.9" stroke="#00ffff"/>
<path d="M1159.6 193.9L1159.6 182.3L1160.8 180.9L1172.6 180.9L1172.6 193.9M1166.1 180.9L1166.1 193.9" stroke="#00ffff" stroke-width="2"/>
<path d="M1158.6 193.5L1173.6 193.5M1180.1 193.9L1180.1 182.3L1185.2 182.3L1185.2 193.9M1187.5 181.7L1187.5 193.9" stroke="#00ffff"/>
<path d="M1194.1 180.4L1201 180.4L1201 188.3L1194.1 188.3Z" stroke="#00ffff" stroke-width="1.1"/>
<path d="M1193.6 179.9H1201.5V182.8H1193.6Z" fill="#00ffff"/>
<path d="M1207.5 181.7L1207.5 193.9" stroke="#00ffff"/>
<path d="M1211.5 182.7L1211.5 193.9" stroke="#00ffff" stroke-width="2"/>
<path d="M1211.5 182.5L1216.8 182.5" stroke="#00ffff"/>
<path d="M1211.8 181.8H1212.8V183.8H1211.8Z" fill="#00ffff"/>
<path d="M1216.5 181.8L1216.5 193.9" stroke="#00ffff"/>
<path d="M1223.6 193.9L1223.6 182.3L1224.8 180.9L1236.6 180.9L1236.6 193.9M1230.1 180.9L1230.1 193.9" stroke="#00ffff" stroke-width="2"/>
<path d="M1222.6 193.5L1237.6 193.5M1243.2 193.9L1243.2 182.3L1248.2 182.3L1248.2 193.9" stroke="#00ffff"/>
<path d="M1260.2 193.9L1260.2 182.3L1264.2 182.3" stroke="#00ffff" stroke-width="1.5"/>
<path d="M1263.4 188.5L1265 188.5M1267.5 182.3L1267.5 193.9M1266.6 182.5L1272.4 182.5" stroke="#00ffff"/>
<path d="M1271.6 182.3L1271.6 193.9" stroke="#00ffff" stroke-width="1.7"/>
<path d="M1125.6 188.5L1127.2 188.5" stroke="#00ffff"/>
<path d="M1125.6 199.7L1125.6 210.9" stroke="#00ffff" stroke-width="2"/>
<path d="M1125.6 199.5L1130.4 199.5" stroke="#00ffff"/>
<path d="M1125.9 198.8H1126.9V200.8H1125.9Z" fill="#00ffff"/>
<path d="M1130.5 198.8L1130.5 210.9M1132.2 199.3L1136.8 199.3L1136.8 210.9" stroke="#00ffff"/>
<path d="M1148.9 199.7L1148.9 210.9" stroke="#00ffff" stroke-width="2"/>
<path d="M1148.9 199.5L1154.4 199.5" stroke="#00ffff"/>
<path d="M1149.2 198.8H1150.2V200.8H1149.2Z" fill="#00ffff"/>
<path d="M1154.5 198.8L1154.5 210.9" stroke="#00ffff"/>
<path d="M1159.6 210.9L1159.6 199.3L1160.8 197.9L1172.6 197.9L1172.6 210.9M1166.1 197.9L1166.1 210.9" stroke="#00ffff" stroke-width="2"/>
<path d="M1158.6 210.5L1173.6 210.5M1180.1 210.9L1180.1 199.3L1185.2 199.3L1185.2 210.9M1187.5 198.7L1187.5 210.9" stroke="#00ffff"/>
<path d="M1194.1 197.4L1201 197.4L1201 205.3L1194.1 205.3Z" stroke="#00ffff" stroke-width="1.1"/>
<path d="M1193.6 196.9H1201.5V199.8H1193.6Z" fill="#00ffff"/>
<path d="M1207.5 198.7L1207.5 210.9" stroke="#00ffff"/>
<path d="M1211.5 199.7L1211.5 210.9" stroke="#00ffff" stroke-width="2"/>
<path d="M1211.5 199.5L1216.8 199.5" stroke="#00ffff"/>
<path d="M1211.8 198.8H1212.8V200.8H1211.8Z" fill="#00ffff"/>
<path d="M1216.5 198.8L1216.5 210.9" stroke="#00ffff"/>
<path d="M1223.6 210.9L1223.6 199.3L1224.8 197.9L1236.6 197.9L1236.6 210.9M1230.1 197.9L1230.1 210.9" stroke="#00ffff" stroke-width="2"/>
<path d="M1222.6 210.5L1237.6 210.5M1243.2 210.9L1243.2 199.3L1248.2 199.3L1248.2 210.9" stroke="#00ffff"/>
<path d="M1260.2 210.9L1260.2 199.3L1264.2 199.3" stroke="#00ffff" stroke-width="1.5"/>
<path d="M1263.4 205.5L1265 205.5M1267.5 199.3L1267.5 210.9M1266.6 199.5L1272.4 199.5" stroke="#00ffff"/>
<path d="M1271.6 199.3L1271.6 210.9" stroke="#00ffff" stroke-width="1.7"/>
<path d="M1125.6 205.5L1127.2 205.5" stroke="#00ffff"/>
<path d="M1125.6 216.7L1125.6 227.9" stroke="#00ffff" stroke-width="2"/>
<path d="M1125.6 216.5L1130.4 216.5" stroke="#00ffff"/>
<path d="M1125.9 215.8H1126.9V217.8H1125.9Z" fill="#00ffff"/>
<path d="M1130.5 215.8L1130.5 227.9M1132.2 216.3L1136.8 216.3L1136.8 227.9" stroke="#00ffff"/>
<path d="M1148.9 216.7L1148.9 227.9" stroke="#00ffff" stroke-width="2"/>
<path d="M1148.9 216.5L1154.4 216.5" stroke="#00ffff"/>
<path d="M1149.2 215.8H1150.2V217.8H1149.2Z" fill="#00ffff"/>
<path d="M1154.5 215.8L1154.5 227.9" stroke="#00ffff"/>
<path d="M1159.6 227.9L1159.6 216.3L1160.8 214.9L1172.6 214.9L1172.6 227.9M1166.1 214.9L1166.1 227.9" stroke="#00ffff" stroke-width="2"/>
<path d="M1158.6 227.5L1173.6 227.5M1180.1 227.9L1180.1 216.3L1185.2 216.3L1185.2 227.9M1187.5 215.7L1187.5 227.9" stroke="#00ffff"/>
<path d="M1194.1 214.4L1201 214.4L1201 222.3L1194.1 222.3Z" stroke="#00ffff" stroke-width="1.1"/>
<path d="M1193.6 213.9H1201.5V216.8H1193.6Z" fill="#00ffff"/>
<path d="M1207.5 215.7L1207.5 227.9" stroke="#00ffff"/>
<path d="M1211.5 216.7L1211.5 227.9" stroke="#00ffff" stroke-width="2"/>
<path d="M1211.5 216.5L1216.8 216.5" stroke="#00ffff"/>
<path d="M1211.8 215.8H1212.8V217.8H1211.8Z" fill="#00ffff"/>
<path d="M1216.5 215.8L1216.5 227.9" stroke="#00ffff"/>
<path d="M1223.6 227.9L1223.6 216.3L1224.8 214.9L1236.6 214.9L1236.6 227.9M1230.1 214.9L1230.1 227.9" stroke="#00ffff" stroke-width="2"/>
<path d="M1222.6 227.5L1237.6 227.5M1243.2 227.9L1243.2 216.3L1248.2 216.3L1248.2 227.9" stroke="#00ffff"/>
<path d="M1260.2 227.9L1260.2 216.3L1264.2 216.3" stroke="#00ffff" stroke-width="1.5"/>
<path d="M1263.4 222.5L1265 222.5M1267.5 216.3L1267.5 227.9M1266.6 216.5L1272.4 216.5" stroke="#00ffff"/>
<path d="M1271.6 216.3L1271.6 227.9" stroke="#00ffff" stroke-width="1.7"/>
<path d="M1125.6 222.5L1127.2 222.5" stroke="#00ffff"/>
<path d="M1125.6 233.8L1125.6 245" stroke="#00ffff" stroke-width="2"/>
<path d="M1125.6 233.5L1130.4 233.5" stroke="#00ffff"/>
<path d="M1125.9 232.9H1126.9V234.9H1125.9Z" fill="#00ffff"/>
<path d="M1130.5 232.9L1130.5 245M1132.2 233.4L1136.8 233.4L1136.8 245" stroke="#00ffff"/>
<path d="M1148.9 233.8L1148.9 245" stroke="#00ffff" stroke-width="2"/>
<path d="M1148.9 233.5L1154.4 233.5" stroke="#00ffff"/>
<path d="M1149.2 232.9H1150.2V234.9H1149.2Z" fill="#00ffff"/>
<path d="M1154.5 232.9L1154.5 245" stroke="#00ffff"/>
<path d="M1159.6 245L1159.6 233.4L1160.8 232L1172.6 232L1172.6 245M1166.1 232L1166.1 245" stroke="#00ffff" stroke-width="2"/>
<path d="M1158.6 244.5L1173.6 244.5M1180.1 245L1180.1 233.4L1185.2 233.4L1185.2 245M1187.5 232.8L1187.5 245" stroke="#00ffff"/>
<path d="M1194.1 231.5L1201 231.5L1201 239.4L1194.1 239.4Z" stroke="#00ffff" stroke-width="1.1"/>
<path d="M1193.6 231H1201.5V233.9H1193.6Z" fill="#00ffff"/>
<path d="M1207.5 232.8L1207.5 245" stroke="#00ffff"/>
<path d="M1211.5 233.8L1211.5 245" stroke="#00ffff" stroke-width="2"/>
<path d="M1211.5 233.5L1216.8 233.5" stroke="#00ffff"/>
<path d="M1211.8 232.9H1212.8V234.9H1211.8Z" fill="#00ffff"/>
<path d="M1216.5 232.9L1216.5 245" stroke="#00ffff"/>
<path d="M1223.6 245L1223.6 233.4L1224.8 232L1236.6 232L1236.6 245M1230.1 232L1230.1 245" stroke="#00ffff" stroke-width="2"/>
<path d="M1222.6 244.5L1237.6 244.5M1243.2 245L1243.2 233.4L1248.2 233.4L1248.2 245" stroke="#00ffff"/>
<path d="M1260.2 245L1260.2 233.4L1264.2 233.4" stroke="#00ffff" stroke-width="1.5"/>
<path d="M1263.4 239.5L1265 239.5M1267.5 233.4L1267.5 245M1266.6 233.5L1272.4 233.5" stroke="#00ffff"/>
<path d="M1271.6 233.4L1271.6 245" stroke="#00ffff" stroke-width="1.7"/>
<path d="M1125.6 239.5L1127.2 239.5" stroke="#00ffff"/>
<path d="M1125.6 250.8L1125.6 262" stroke="#00ffff" stroke-width="2"/>
<path d="M1125.6 250.5L1130.4 250.5" stroke="#00ffff"/>
<path d="M1125.9 249.9H1126.9V251.9H1125.9Z" fill="#00ffff"/>
<path d="M1130.5 249.9L1130.5 262M1132.2 250.4L1136.8 250.4L1136.8 262" stroke="#00ffff"/>
<path d="M1148.9 250.8L1148.9 262" stroke="#00ffff" stroke-width="2"/>
<path d="M1148.9 250.5L1154.4 250.5" stroke="#00ffff"/>
<path d="M1149.2 249.9H1150.2V251.9H1149.2Z" fill="#00ffff"/>
<path d="M1154.5 249.9L1154.5 262" stroke="#00ffff"/>
<path d="M1159.6 262L1159.6 250.4L1160.8 249L1172.6 249L1172.6 262M1166.1 249L1166.1 262" stroke="#00ffff" stroke-width="2"/>
<path d="M1158.6 261.5L1173.6 261.5M1180.1 262L1180.1 250.4L1185.2 250.4L1185.2 262M1187.5 249.8L1187.5 262" stroke="#00ffff"/>
<path d="M1194.1 248.5L1201 248.5L1201 256.4L1194.1 256.4Z" stroke="#00ffff" stroke-width="1.1"/>
<path d="M1193.6 248H1201.5V250.9H1193.6Z" fill="#00ffff"/>
<path d="M1207.5 249.8L1207.5 262" stroke="#00ffff"/>
<path d="M1211.5 250.8L1211.5 262" stroke="#00ffff" stroke-width="2"/>
<path d="M1211.5 250.5L1216.8 250.5" stroke="#00ffff"/>
<path d="M1211.8 249.9H1212.8V251.9H1211.8Z" fill="#00ffff"/>
<path d="M1216.5 249.9L1216.5 262" stroke="#00ffff"/>
<path d="M1223.6 262L1223.6 250.4L1224.8 249L1236.6 249L1236.6 262M1230.1 249L1230.1 262" stroke="#00ffff" stroke-width="2"/>
<path d="M1222.6 261.5L1237.6 261.5M1243.2 262L1243.2 250.4L1248.2 250.4L1248.2 262" stroke="#00ffff"/>
<path d="M1260.2 262L1260.2 250.4L1264.2 250.4" stroke="#00ffff" stroke-width="1.5"/>
<path d="M1263.4 256.5L1265 256.5M1267.5 250.4L1267.5 262M1266.6 250.5L1272.4 250.5" stroke="#00ffff"/>
<path d="M1271.6 250.4L1271.6 262" stroke="#00ffff" stroke-width="1.7"/>
<path d="M1125.6 256.5L1127.2 256.5" stroke="#00ffff"/>
<path d="M1125.6 267.8L1125.6 279" stroke="#00ffff" stroke-width="2"/>
<path d="M1125.6 267.5L1130.4 267.5" stroke="#00ffff"/>
<path d="M1125.9 266.9H1126.9V268.9H1125.9Z" fill="#00ffff"/>
<path d="M1130.5 266.9L1130.5 279M1132.2 267.4L1136.8 267.4L1136.8 279" stroke="#00ffff"/>
<path d="M1148.9 267.8L1148.9 279" stroke="#00ffff" stroke-width="2"/>
<path d="M1148.9 267.5L1154.4 267.5" stroke="#00ffff"/>
<path d="M1149.2 266.9H1150.2V268.9H1149.2Z" fill="#00ffff"/>
<path d="M1154.5 266.9L1154.5 279" stroke="#00ffff"/>
<path d="M1159.6 279L1159.6 267.4L1160.8 266L1172.6 266L1172.6 279M1166.1 266L1166.1 279" stroke="#00ffff" stroke-width="2"/>
<path d="M1158.6 278.5L1173.6 278.5M1180.1 279L1180.1 267.4L1185.2 267.4L1185.2 279M1187.5 266.8L1187.5 279" stroke="#00ffff"/>
<path d="M1194.1 265.5L1201 265.5L1201 273.4L1194.1 273.4Z" stroke="#00ffff" stroke-width="1.1"/>
<path d="M1193.6 265H1201.5V267.9H1193.6Z" fill="#00ffff"/>
<path d="M1207.5 266.8L1207.5 279" stroke="#00ffff"/>
<path d="M1211.5 267.8L1211.5 279" stroke="#00ffff" stroke-width="2"/>
<path d="M1211.5 267.5L1216.8 267.5" stroke="#00ffff"/>
<path d="M1211.8 266.9H1212.8V268.9H1211.8Z" fill="#00ffff"/>
<path d="M1216.5 266.9L1216.5 279" stroke="#00ffff"/>
<path d="M1223.6 279L1223.6 267.4L1224.8 266L1236.6 266L1236.6 279M1230.1 266L1230.1 279" stroke="#00ffff" stroke-width="2"/>
<path d="M1222.6 278.5L1237.6 278.5M1243.2 279L1243.2 267.4L1248.2 267.4L1248.2 279" stroke="#00ffff"/>
<path d="M1260.2 279L1260.2 267.4L1264.2 267.4" stroke="#00ffff" stroke-width="1.5"/>
<path d="M1263.4 273.5L1265 273.5M1267.5 267.4L1267.5 279M1266.6 267.5L1272.4 267.5" stroke="#00ffff"/>
<path d="M1271.6 267.4L1271.6 279" stroke="#00ffff" stroke-width="1.7"/>
<path d="M1125.6 273.5L1127.2 273.5" stroke="#00ffff"/>
<path d="M1125.6 284.8L1125.6 296" stroke="#00ffff" stroke-width="2"/>
<path d="M1125.6 284.5L1130.4 284.5" stroke="#00ffff"/>
<path d="M1125.9 283.9H1126.9V285.9H1125.9Z" fill="#00ffff"/>
<path d="M1130.5 283.9L1130.5 296M1132.2 284.4L1136.8 284.4L1136.8 296" stroke="#00ffff"/>
<path d="M1148.9 284.8L1148.9 296" stroke="#00ffff" stroke-width="2"/>
<path d="M1148.9 284.5L1154.4 284.5" stroke="#00ffff"/>
<path d="M1149.2 283.9H1150.2V285.9H1149.2Z" fill="#00ffff"/>
<path d="M1154.5 283.9L1154.5 296" stroke="#00ffff"/>
<path d="M1159.6 296L1159.6 284.4L1160.8 283L1172.6 283L1172.6 296M1166.1 283L1166.1 296" stroke="#00ffff" stroke-width="2"/>
<path d="M1158.6 295.5L1173.6 295.5M1180.1 296L1180.1 284.4L1185.2 284.4L1185.2 296M1187.5 283.8L1187.5 296" stroke="#00ffff"/>
<path d="M1194.1 282.5L1201 282.5L1201 290.4L1194.1 290.4Z" stroke="#00ffff" stroke-width="1.1"/>
<path d="M1193.6 282H1201.5V284.9H1193.6Z" fill="#00ffff"/>
<path d="M1207.5 283.8L1207.5 296" stroke="#00ffff"/>
<path d="M1211.5 284.8L1211.5 296" stroke="#00ffff" stroke-width="2"/>
<path d="M1211.5 284.5L1216.8 284.5" stroke="#00ffff"/>
<path d="M1211.8 283.9H1212.8V285.9H1211.8Z" fill="#00ffff"/>
<path d="M1216.5 283.9L1216.5 296" stroke="#00ffff"/>
<path d="M1223.6 296L1223.6 284.4L1224.8 283L1236.6 283L1236.6 296M1230.1 283L1230.1 296" stroke="#00ffff" stroke-width="2"/>
<path d="M1222.6 295.5L1237.6 295.5M1243.2 296L1243.2 284.4L1248.2 284.4L1248.2 296" stroke="#00ffff"/>
<path d="M1260.2 296L1260.2 284.4L1264.2 284.4" stroke="#00ffff" stroke-width="1.5"/>
<path d="M1263.4 290.5L1265 290.5M1267.5 284.4L1267.5 296M1266.6 284.5L1272.4 284.5" stroke="#00ffff"/>
<path d="M1271.6 284.4L1271.6 296" stroke="#00ffff" stroke-width="1.7"/>
<path d="M1125.6 290.5L1127.2 290.5" stroke="#00ffff"/>
<path d="M1125.6 301.8L1125.6 313" stroke="#00ffff" stroke-width="2"/>
<path d="M1125.6 301.5L1130.4 301.5" stroke="#00ffff"/>
<path d="M1125.9 300.9H1126.9V302.9H1125.9Z" fill="#00ffff"/>
<path d="M1130.5 300.9L1130.5 313M1132.2 301.4L1136.8 301.4L1136.8 313" stroke="#00ffff"/>
<path d="M1148.9 301.8L1148.9 313" stroke="#00ffff" stroke-width="2"/>
<path d="M1148.9 301.5L1154.4 301.5" stroke="#00ffff"/>
<path d="M1149.2 300.9H1150.2V302.9H1149.2Z" fill="#00ffff"/>
<path d="M1154.5 300.9L1154.5 313" stroke="#00ffff"/>
<path d="M1159.6 313L1159.6 301.4L1160.8 300L1172.6 300L1172.6 313M1166.1 300L1166.1 313" stroke="#00ffff" stroke-width="2"/>
<path d="M1158.6 312.5L1173.6 312.5M1180.1 313L1180.1 301.4L1185.2 301.4L1185.2 313M1187.5 300.8L1187.5 313" stroke="#00ffff"/>
<path d="M1194.1 299.5L1201 299.5L1201 307.4L1194.1 307.4Z" stroke="#00ffff" stroke-width="1.1"/>
<path d="M1193.6 299H1201.5V301.9H1193.6Z" fill="#00ffff"/>
<path d="M1207.5 300.8L1207.5 313" stroke="#00ffff"/>
<path d="M1211.5 301.8L1211.5 313" stroke="#00ffff" stroke-width="2"/>
<path d="M1211.5 301.5L1216.8 301.5" stroke="#00ffff"/>
<path d="M1211.8 300.9H1212.8V302.9H1211.8Z" fill="#00ffff"/>
<path d="M1216.5 300.9L1216.5 313" stroke="#00ffff"/>
<path d="M1223.6 313L1223.6 301.4L1224.8 300L1236.6 300L1236.6 313M1230.1 300L1230.1 313" stroke="#00ffff" stroke-width="2"/>
<path d="M1222.6 312.5L1237.6 312.5M1243.2 313L1243.2 301.4L1248.2 301.4L1248.2 313" stroke="#00ffff"/>
<path d="M1260.2 313L1260.2 301.4L1264.2 301.4" stroke="#00ffff" stroke-width="1.5"/>
<path d="M1263.4 307.5L1265 307.5M1267.5 301.4L1267.5 313M1266.6 301.5L1272.4 301.5" stroke="#00ffff"/>
<path d="M1271.6 301.4L1271.6 313" stroke="#00ffff" stroke-width="1.7"/>
<path d="M1125.6 307.5L1127.2 307.5" stroke="#00ffff"/>
<path d="M1125.6 318.9L1125.6 330.1" stroke="#00ffff" stroke-width="2"/>
<path d="M1125.6 318.5L1130.4 318.5" stroke="#00ffff"/>
<path d="M1125.9 318H1126.9V320H1125.9Z" fill="#00ffff"/>
<path d="M1130.5 318L1130.5 330.1M1132.2 318.5L1136.8 318.5L1136.8 330.1" stroke="#00ffff"/>
<path d="M1148.9 318.9L1148.9 330.1" stroke="#00ffff" stroke-width="2"/>
<path d="M1148.9 318.5L1154.4 318.5" stroke="#00ffff"/>
<path d="M1149.2 318H1150.2V320H1149.2Z" fill="#00ffff"/>
<path d="M1154.5 318L1154.5 330.1" stroke="#00ffff"/>
<path d="M1159.6 330.1L1159.6 318.5L1160.8 317.1L1172.6 317.1L1172.6 330.1M1166.1 317.1L1166.1 330.1" stroke="#00ffff" stroke-width="2"/>
<path d="M1158.6 329.5L1173.6 329.5M1180.1 330.1L1180.1 318.5L1185.2 318.5L1185.2 330.1M1187.5 317.9L1187.5 330.1" stroke="#00ffff"/>
<path d="M1194.1 316.6L1201 316.6L1201 324.5L1194.1 324.5Z" stroke="#00ffff" stroke-width="1.1"/>
<path d="M1193.6 316.1H1201.5V319H1193.6Z" fill="#00ffff"/>
<path d="M1207.5 317.9L1207.5 330.1" stroke="#00ffff"/>
<path d="M1211.5 318.9L1211.5 330.1" stroke="#00ffff" stroke-width="2"/>
<path d="M1211.5 318.5L1216.8 318.5" stroke="#00ffff"/>
<path d="M1211.8 318H1212.8V320H1211.8Z" fill="#00ffff"/>
<path d="M1216.5 318L1216.5 330.1" stroke="#00ffff"/>
<path d="M1223.6 330.1L1223.6 318.5L1224.8 317.1L1236.6 317.1L1236.6 330.1M1230.1 317.1L1230.1 330.1" stroke="#00ffff" stroke-width="2"/>
<path d="M1222.6 329.5L1237.6 329.5M1243.2 330.1L1243.2 318.5L1248.2 318.5L1248.2 330.1" stroke="#00ffff"/>
<path d="M1260.2 330.1L1260.2 318.5L1264.2 318.5" stroke="#00ffff" stroke-width="1.5"/>
<path d="M1263.4 324.5L1265 324.5M1267.5 318.5L1267.5 330.1M1266.6 318.5L1272.4 318.5" stroke="#00ffff"/>
<path d="M1271.6 318.5L1271.6 330.1" stroke="#00ffff" stroke-width="1.7"/>
<path d="M1125.6 324.5L1127.2 324.5" stroke="#00ffff"/>
<path d="M1125.6 335.9L1125.6 347.1" stroke="#00ffff" stroke-width="2"/>
<path d="M1125.6 335.5L1130.4 335.5" stroke="#00ffff"/>
<path d="M1125.9 335H1126.9V337H1125.9Z" fill="#00ffff"/>
<path d="M1130.5 335L1130.5 347.1M1132.2 335.5L1136.8 335.5L1136.8 347.1" stroke="#00ffff"/>
<path d="M1148.9 335.9L1148.9 347.1" stroke="#00ffff" stroke-width="2"/>
<path d="M1148.9 335.5L1154.4 335.5" stroke="#00ffff"/>
<path d="M1149.2 335H1150.2V337H1149.2Z" fill="#00ffff"/>
<path d="M1154.5 335L1154.5 347.1" stroke="#00ffff"/>
<path d="M1159.6 347.1L1159.6 335.5L1160.8 334.1L1172.6 334.1L1172.6 347.1M1166.1 334.1L1166.1 347.1" stroke="#00ffff" stroke-width="2"/>
<path d="M1158.6 346.5L1173.6 346.5M1180.1 347.1L1180.1 335.5L1185.2 335.5L1185.2 347.1M1187.5 334.9L1187.5 347.1" stroke="#00ffff"/>
<path d="M1194.1 333.6L1201 333.6L1201 341.5L1194.1 341.5Z" stroke="#00ffff" stroke-width="1.1"/>
<path d="M1193.6 333.1H1201.5V336H1193.6Z" fill="#00ffff"/>
<path d="M1207.5 334.9L1207.5 347.1" stroke="#00ffff"/>
<path d="M1211.5 335.9L1211.5 347.1" stroke="#00ffff" stroke-width="2"/>
<path d="M1211.5 335.5L1216.8 335.5" stroke="#00ffff"/>
<path d="M1211.8 335H1212.8V337H1211.8Z" fill="#00ffff"/>
<path d="M1216.5 335L1216.5 347.1" stroke="#00ffff"/>
<path d="M1223.6 347.1L1223.6 335.5L1224.8 334.1L1236.6 334.1L1236.6 347.1M1230.1 334.1L1230.1 347.1" stroke="#00ffff" stroke-width="2"/>
<path d="M1222.6 346.5L1237.6 346.5M1243.2 347.1L1243.2 335.5L1248.2 335.5L1248.2 347.1" stroke="#00ffff"/>
<path d="M1260.2 347.1L1260.2 335.5L1264.2 335.5" stroke="#00ffff" stroke-width="1.5"/>
<path d="M1263.4 341.5L1265 341.5M1267.5 335.5L1267.5 347.1M1266.6 335.5L1272.4 335.5" stroke="#00ffff"/>
<path d="M1271.6 335.5L1271.6 347.1" stroke="#00ffff" stroke-width="1.7"/>
<path d="M1125.6 341.5L1127.2 341.5" stroke="#00ffff"/>
<path d="M1125.6 352.9L1125.6 364.1" stroke="#00ffff" stroke-width="2"/>
<path d="M1125.6 352.5L1130.4 352.5" stroke="#00ffff"/>
<path d="M1125.9 352H1126.9V354H1125.9Z" fill="#00ffff"/>
<path d="M1130.5 352L1130.5 364.1M1132.2 352.5L1136.8 352.5L1136.8 364.1" stroke="#00ffff"/>
<path d="M1148.9 352.9L1148.9 364.1" stroke="#00ffff" stroke-width="2"/>
<path d="M1148.9 352.5L1154.4 352.5" stroke="#00ffff"/>
<path d="M1149.2 352H1150.2V354H1149.2Z" fill="#00ffff"/>
<path d="M1154.5 352L1154.5 364.1" stroke="#00ffff"/>
<path d="M1159.6 364.1L1159.6 352.5L1160.8 351.1L1172.6 351.1L1172.6 364.1M1166.1 351.1L1166.1 364.1" stroke="#00ffff" stroke-width="2"/>
<path d="M1158.6 363.5L1173.6 363.5M1180.1 364.1L1180.1 352.5L1185.2 352.5L1185.2 364.1M1187.5 351.9L1187.5 364.1" stroke="#00ffff"/>
<path d="M1194.1 350.6L1201 350.6L1201 358.5L1194.1 358.5Z" stroke="#00ffff" stroke-width="1.1"/>
<path d="M1193.6 350.1H1201.5V353H1193.6Z" fill="#00ffff"/>
<path d="M1207.5 351.9L1207.5 364.1" stroke="#00ffff"/>
<path d="M1211.5 352.9L1211.5 364.1" stroke="#00ffff" stroke-width="2"/>
<path d="M1211.5 352.5L1216.8 352.5" stroke="#00ffff"/>
<path d="M1211.8 352H1212.8V354H1211.8Z" fill="#00ffff"/>
<path d="M1216.5 352L1216.5 364.1" stroke="#00ffff"/>
<path d="M1223.6 364.1L1223.6 352.5L1224.8 351.1L1236.6 351.1L1236.6 364.1M1230.1 351.1L1230.1 364.1" stroke="#00ffff" stroke-width="2"/>
<path d="M1222.6 363.5L1237.6 363.5M1243.2 364.1L1243.2 352.5L1248.2 352.5L1248.2 364.1" stroke="#00ffff"/>
<path d="M1260.2 364.1L1260.2 352.5L1264.2 352.5" stroke="#00ffff" stroke-width="1.5"/>
<path d="M1263.4 358.5L1265 358.5M1267.5 352.5L1267.5 364.1M1266.6 352.5L1272.4 352.5" stroke="#00ffff"/>
<path d="M1271.6 352.5L1271.6 364.1" stroke="#00ffff" stroke-width="1.7"/>
<path d="M1125.6 358.5L1127.2 358.5" stroke="#00ffff"/>
<path d="M1125.6 369.9L1125.6 381.1" stroke="#00ffff" stroke-width="2"/>
<path d="M1125.6 369.5L1130.4 369.5" stroke="#00ffff"/>
<path d="M1125.9 369H1126.9V371H1125.9Z" fill="#00ffff"/>
<path d="M1130.5 369L1130.5 381.1M1132.2 369.5L1136.8 369.5L1136.8 381.1" stroke="#00ffff"/>
<path d="M1148.9 369.9L1148.9 381.1" stroke="#00ffff" stroke-width="2"/>
<path d="M1148.9 369.5L1154.4 369.5" stroke="#00ffff"/>
<path d="M1149.2 369H1150.2V371H1149.2Z" fill="#00ffff"/>
<path d="M1154.5 369L1154.5 381.1" stroke="#00ffff"/>
<path d="M1159.6 381.1L1159.6 369.5L1160.8 368.1L1172.6 368.1L1172.6 381.1M1166.1 368.1L1166.1 381.1" stroke="#00ffff" stroke-width="2"/>
<path d="M1158.6 380.5L1173.6 380.5M1180.1 381.1L1180.1 369.5L1185.2 369.5L1185.2 381.1M1187.5 368.9L1187.5 381.1" stroke="#00ffff"/>
<path d="M1194.1 367.6L1201 367.6L1201 375.5L1194.1 375.5Z" stroke="#00ffff" stroke-width="1.1"/>
<path d="M1193.6 367.1H1201.5V370H1193.6Z" fill="#00ffff"/>
<path d="M1207.5 368.9L1207.5 381.1" stroke="#00ffff"/>
<path d="M1211.5 369.9L1211.5 381.1" stroke="#00ffff" stroke-width="2"/>
<path d="M1211.5 369.5L1216.8 369.5" stroke="#00ffff"/>
<path d="M1211.8 369H1212.8V371H1211.8Z" fill="#00ffff"/>
<path d="M1216.5 369L1216.5 381.1" stroke="#00ffff"/>
<path d="M1223.6 381.1L1223.6 369.5L1224.8 368.1L1236.6 368.1L1236.6 381.1M1230.1 368.1L1230.1 381.1" stroke="#00ffff" stroke-width="2"/>
<path d="M1222.6 380.5L1237.6 380.5M1243.2 381.1L1243.2 369.5L1248.2 369.5L1248.2 381.1" stroke="#00ffff"/>
<path d="M1260.2 381.1L1260.2 369.5L1264.2 369.5" stroke="#00ffff" stroke-width="1.5"/>
<path d="M1263.4 375.5L1265 375.5M1267.5 369.5L1267.5 381.1M1266.6 369.5L1272.4 369.5" stroke="#00ffff"/>
<path d="M1271.6 369.5L1271.6 381.1" stroke="#00ffff" stroke-width="1.7"/>
<path d="M1125.6 375.5L1127.2 375.5" stroke="#00ffff"/>
<path d="M1125.6 386.9L1125.6 398.1" stroke="#00ffff" stroke-width="2"/>
<path d="M1125.6 386.5L1130.4 386.5" stroke="#00ffff"/>
<path d="M1125.9 386H1126.9V388H1125.9Z" fill="#00ffff"/>
<path d="M1130.5 386L1130.5 398.1M1132.2 386.5L1136.8 386.5L1136.8 398.1" stroke="#00ffff"/>
<path d="M1148.9 386.9L1148.9 398.1" stroke="#00ffff" stroke-width="2"/>
<path d="M1148.9 386.5L1154.4 386.5" stroke="#00ffff"/>
<path d="M1149.2 386H1150.2V388H1149.2Z" fill="#00ffff"/>
<path d="M1154.5 386L1154.5 398.1" stroke="#00ffff"/>
<path d="M1159.6 398.1L1159.6 386.5L1160.8 385.1L1172.6 385.1L1172.6 398.1M1166.1 385.1L1166.1 398.1" stroke="#00ffff" stroke-width="2"/>
<path d="M1158.6 397.5L1173.6 397.5M1180.1 398.1L1180.1 386.5L1185.2 386.5L1185.2 398.1M1187.5 385.9L1187.5 398.1" stroke="#00ffff"/>
<path d="M1194.1 384.6L1201 384.6L1201 392.5L1194.1 392.5Z" stroke="#00ffff" stroke-width="1.1"/>
<path d="M1193.6 384.1H1201.5V387H1193.6Z" fill="#00ffff"/>
<path d="M1207.5 385.9L1207.5 398.1" stroke="#00ffff"/>
<path d="M1211.5 386.9L1211.5 398.1" stroke="#00ffff" stroke-width="2"/>
<path d="M1211.5 386.5L1216.8 386.5" stroke="#00ffff"/>
<path d="M1211.8 386H1212.8V388H1211.8Z" fill="#00ffff"/>
<path d="M1216.5 386L1216.5 398.1" stroke="#00ffff"/>
<path d="M1223.6 398.1L1223.6 386.5L1224.8 385.1L1236.6 385.1L1236.6 398.1M1230.1 385.1L1230.1 398.1" stroke="#00ffff" stroke-width="2"/>
<path d="M1222.6 397.5L1237.6 397.5M1243.2 398.1L1243.2 386.5L1248.2 386.5L1248.2 398.1" stroke="#00ffff"/>
<path d="M1260.2 398.1L1260.2 386.5L1264.2 386.5" stroke="#00ffff" stroke-width="1.5"/>
<path d="M1263.4 392.5L1265 392.5M1267.5 386.5L1267.5 398.1M1266.6 386.5L1272.4 386.5" stroke="#00ffff"/>
<path d="M1271.6 386.5L1271.6 398.1" stroke="#00ffff" stroke-width="1.7"/>
<path d="M1125.6 392.5L1127.2 392.5" stroke="#00ffff"/>
<path d="M1131.3 92.6L1131.3 400.1" stroke="#cbcbcb" stroke-width="2"/>
<path d="M1156 92.6L1156 400.1M1178.2 92.6L1178.2 400.1" stroke="#cbcbcb" stroke-width="1.5"/>
<path d="M1188.5 92.6L1188.5 400.1M1208.5 92.6L1208.5 400.1" stroke="#cbcbcb"/>
<path d="M1217.8 92.6L1217.8 400.1M1241.2 92.6L1241.2 400.1" stroke="#cbcbcb" stroke-width="1.5"/>
<path d="M1265.6 92.6L1265.6 400.1M1115.2 109.8L1281.2 109.8" stroke="#cbcbcb" stroke-width="2"/>
<path d="M1118.2 110.5L1130.2 110.5M1267.2 110.5L1279.2 110.5" stroke="#555" stroke-dasharray="1 2"/>
<path d="M1115.2 126.8L1281.2 126.8" stroke="#cbcbcb" stroke-width="2"/>
<path d="M1118.2 127.5L1130.2 127.5M1267.2 127.5L1279.2 127.5" stroke="#555" stroke-dasharray="1 2"/>
<path d="M1115.2 143.8L1281.2 143.8" stroke="#cbcbcb" stroke-width="2"/>
<path d="M1118.2 144.5L1130.2 144.5M1267.2 144.5L1279.2 144.5" stroke="#555" stroke-dasharray="1 2"/>
<path d="M1115.2 160.9L1281.2 160.9" stroke="#cbcbcb" stroke-width="2"/>
<path d="M1118.2 161.5L1130.2 161.5M1267.2 161.5L1279.2 161.5" stroke="#555" stroke-dasharray="1 2"/>
<path d="M1115.2 177.9L1281.2 177.9" stroke="#cbcbcb" stroke-width="2"/>
<path d="M1118.2 178.5L1130.2 178.5M1267.2 178.5L1279.2 178.5" stroke="#555" stroke-dasharray="1 2"/>
<path d="M1115.2 194.9L1281.2 194.9" stroke="#cbcbcb" stroke-width="2"/>
<path d="M1118.2 195.5L1130.2 195.5M1267.2 195.5L1279.2 195.5" stroke="#555" stroke-dasharray="1 2"/>
<path d="M1115.2 211.9L1281.2 211.9" stroke="#cbcbcb" stroke-width="2"/>
<path d="M1118.2 212.5L1130.2 212.5M1267.2 212.5L1279.2 212.5" stroke="#555" stroke-dasharray="1 2"/>
<path d="M1115.2 228.9L1281.2 228.9" stroke="#cbcbcb" stroke-width="2"/>
<path d="M1118.2 229.5L1130.2 229.5M1267.2 229.5L1279.2 229.5" stroke="#555" stroke-dasharray="1 2"/>
<path d="M1115.2 246L1281.2 246" stroke="#cbcbcb" stroke-width="2"/>
<path d="M1118.2 246.5L1130.2 246.5M1267.2 246.5L1279.2 246.5" stroke="#555" stroke-dasharray="1 2"/>
<path d="M1115.2 263L1281.2 263" stroke="#cbcbcb" stroke-width="2"/>
<path d="M1118.2 263.5L1130.2 263.5M1267.2 263.5L1279.2 263.5" stroke="#555" stroke-dasharray="1 2"/>
<path d="M1115.2 280L1281.2 280" stroke="#cbcbcb" stroke-width="2"/>
<path d="M1118.2 280.5L1130.2 280.5M1267.2 280.5L1279.2 280.5" stroke="#555" stroke-dasharray="1 2"/>
<path d="M1115.2 297L1281.2 297" stroke="#cbcbcb" stroke-width="2"/>
<path d="M1118.2 297.5L1130.2 297.5M1267.2 297.5L1279.2 297.5" stroke="#555" stroke-dasharray="1 2"/>
<path d="M1115.2 314L1281.2 314" stroke="#cbcbcb" stroke-width="2"/>
<path d="M1118.2 314.5L1130.2 314.5M1267.2 314.5L1279.2 314.5" stroke="#555" stroke-dasharray="1 2"/>
<path d="M1115.2 331.1L1281.2 331.1" stroke="#cbcbcb" stroke-width="2"/>
<path d="M1118.2 331.5L1130.2 331.5M1267.2 331.5L1279.2 331.5" stroke="#555" stroke-dasharray="1 2"/>
<path d="M1115.2 348.1L1281.2 348.1" stroke="#cbcbcb" stroke-width="2"/>
<path d="M1118.2 348.5L1130.2 348.5M1267.2 348.5L1279.2 348.5" stroke="#555" stroke-dasharray="1 2"/>
<path d="M1115.2 365.1L1281.2 365.1" stroke="#cbcbcb" stroke-width="2"/>
<path d="M1118.2 365.5L1130.2 365.5M1267.2 365.5L1279.2 365.5" stroke="#555" stroke-dasharray="1 2"/>
<path d="M1115.2 382.1L1281.2 382.1" stroke="#cbcbcb" stroke-width="2"/>
<path d="M1118.2 382.5L1130.2 382.5M1267.2 382.5L1279.2 382.5" stroke="#555" stroke-dasharray="1 2"/>
<path d="M1115.2 399.1L1281.2 399.1" stroke="#cbcbcb" stroke-width="2"/>
<path d="M1118.2 399.5L1130.2 399.5M1267.2 399.5L1279.2 399.5" stroke="#555" stroke-dasharray="1 2"/>
<path d="M947.2 446.2L947.2 84.6L1280.9 84.6L1280.9 427.6" stroke="#cbcbcb" stroke-width="1.4"/>
<path d="M946.9 92.6L1281.2 92.6" stroke="#cbcbcb" stroke-width="2"/>
<path d="M1112.6 92.6L1112.6 400.6M1115.4 92.6L1115.4 400.6" stroke="#cbcbcb" stroke-width="1.5"/>
<path d="M947.2 95.8L947.2 108.9" stroke="#00ffff" stroke-width="1.6"/>
<path d="M947.2 102.6L947.2 103.3" stroke="#cbcbcb" stroke-width="1.6"/>
<path d="M947.2 112.8L947.2 125.9" stroke="#00ffff" stroke-width="1.6"/>
<path d="M947.2 119.6L947.2 120.3" stroke="#cbcbcb" stroke-width="1.6"/>
<path d="M947.2 129.8L947.2 142.9" stroke="#00ffff" stroke-width="1.6"/>
<path d="M947.2 136.6L947.2 137.3" stroke="#cbcbcb" stroke-width="1.6"/>
<path d="M947.2 146.9L947.2 160" stroke="#00ffff" stroke-width="1.6"/>
<path d="M947.2 153.7L947.2 154.4" stroke="#cbcbcb" stroke-width="1.6"/>
<path d="M947.2 163.9L947.2 177" stroke="#00ffff" stroke-width="1.6"/>
<path d="M947.2 170.7L947.2 171.4" stroke="#cbcbcb" stroke-width="1.6"/>
<path d="M947.2 180.9L947.2 194" stroke="#00ffff" stroke-width="1.6"/>
<path d="M947.2 187.7L947.2 188.4" stroke="#cbcbcb" stroke-width="1.6"/>
<path d="M947.2 197.9L947.2 211" stroke="#00ffff" stroke-width="1.6"/>
<path d="M947.2 204.7L947.2 205.4" stroke="#cbcbcb" stroke-width="1.6"/>
<path d="M947.2 214.9L947.2 228" stroke="#00ffff" stroke-width="1.6"/>
<path d="M947.2 221.7L947.2 222.4" stroke="#cbcbcb" stroke-width="1.6"/>
<path d="M947.2 232L947.2 245.1" stroke="#00ffff" stroke-width="1.6"/>
<path d="M947.2 238.8L947.2 239.5" stroke="#cbcbcb" stroke-width="1.6"/>
<path d="M947.2 249L947.2 262.1" stroke="#00ffff" stroke-width="1.6"/>
<path d="M947.2 255.8L947.2 256.5" stroke="#cbcbcb" stroke-width="1.6"/>
<path d="M947.2 266L947.2 279.1" stroke="#00ffff" stroke-width="1.6"/>
<path d="M947.2 272.8L947.2 273.5" stroke="#cbcbcb" stroke-width="1.6"/>
<path d="M947.2 283L947.2 296.1" stroke="#00ffff" stroke-width="1.6"/>
<path d="M947.2 289.8L947.2 290.5" stroke="#cbcbcb" stroke-width="1.6"/>
<path d="M947.2 300L947.2 313.1" stroke="#00ffff" stroke-width="1.6"/>
<path d="M947.2 306.8L947.2 307.5" stroke="#cbcbcb" stroke-width="1.6"/>
<path d="M947.2 317.1L947.2 330.2" stroke="#00ffff" stroke-width="1.6"/>
<path d="M947.2 323.9L947.2 324.6" stroke="#cbcbcb" stroke-width="1.6"/>
<path d="M947.2 334.1L947.2 347.2" stroke="#00ffff" stroke-width="1.6"/>
<path d="M947.2 340.9L947.2 341.6" stroke="#cbcbcb" stroke-width="1.6"/>
<path d="M947.2 351.1L947.2 364.2" stroke="#00ffff" stroke-width="1.6"/>
<path d="M947.2 357.9L947.2 358.6" stroke="#cbcbcb" stroke-width="1.6"/>
<path d="M947.2 368.1L947.2 381.2" stroke="#00ffff" stroke-width="1.6"/>
<path d="M947.2 374.9L947.2 375.6" stroke="#cbcbcb" stroke-width="1.6"/>
<path d="M947.2 385.1L947.2 398.2" stroke="#00ffff" stroke-width="1.6"/>
<path d="M947.2 391.9L947.2 392.6" stroke="#cbcbcb" stroke-width="1.6"/>
<path d="M1280.9 95.8L1280.9 108.9" stroke="#00ffff" stroke-width="1.6"/>
<path d="M1280.9 102.6L1280.9 103.3" stroke="#cbcbcb" stroke-width="1.6"/>
<path d="M1280.9 112.8L1280.9 125.9" stroke="#00ffff" stroke-width="1.6"/>
<path d="M1280.9 119.6L1280.9 120.3" stroke="#cbcbcb" stroke-width="1.6"/>
<path d="M1280.9 129.8L1280.9 142.9" stroke="#00ffff" stroke-width="1.6"/>
<path d="M1280.9 136.6L1280.9 137.3" stroke="#cbcbcb" stroke-width="1.6"/>
<path d="M1280.9 146.9L1280.9 160" stroke="#00ffff" stroke-width="1.6"/>
<path d="M1280.9 153.7L1280.9 154.4" stroke="#cbcbcb" stroke-width="1.6"/>
<path d="M1280.9 163.9L1280.9 177" stroke="#00ffff" stroke-width="1.6"/>
<path d="M1280.9 170.7L1280.9 171.4" stroke="#cbcbcb" stroke-width="1.6"/>
<path d="M1280.9 180.9L1280.9 194" stroke="#00ffff" stroke-width="1.6"/>
<path d="M1280.9 187.7L1280.9 188.4" stroke="#cbcbcb" stroke-width="1.6"/>
<path d="M1280.9 197.9L1280.9 211" stroke="#00ffff" stroke-width="1.6"/>
<path d="M1280.9 204.7L1280.9 205.4" stroke="#cbcbcb" stroke-width="1.6"/>
<path d="M1280.9 214.9L1280.9 228" stroke="#00ffff" stroke-width="1.6"/>
<path d="M1280.9 221.7L1280.9 222.4" stroke="#cbcbcb" stroke-width="1.6"/>
<path d="M1280.9 232L1280.9 245.1" stroke="#00ffff" stroke-width="1.6"/>
<path d="M1280.9 238.8L1280.9 239.5" stroke="#cbcbcb" stroke-width="1.6"/>
<path d="M1280.9 249L1280.9 262.1" stroke="#00ffff" stroke-width="1.6"/>
<path d="M1280.9 255.8L1280.9 256.5" stroke="#cbcbcb" stroke-width="1.6"/>
<path d="M1280.9 266L1280.9 279.1" stroke="#00ffff" stroke-width="1.6"/>
<path d="M1280.9 272.8L1280.9 273.5" stroke="#cbcbcb" stroke-width="1.6"/>
<path d="M1280.9 283L1280.9 296.1" stroke="#00ffff" stroke-width="1.6"/>
<path d="M1280.9 289.8L1280.9 290.5" stroke="#cbcbcb" stroke-width="1.6"/>
<path d="M1280.9 300L1280.9 313.1" stroke="#00ffff" stroke-width="1.6"/>
<path d="M1280.9 306.8L1280.9 307.5" stroke="#cbcbcb" stroke-width="1.6"/>
<path d="M1280.9 317.1L1280.9 330.2" stroke="#00ffff" stroke-width="1.6"/>
<path d="M1280.9 323.9L1280.9 324.6" stroke="#cbcbcb" stroke-width="1.6"/>
<path d="M1280.9 334.1L1280.9 347.2" stroke="#00ffff" stroke-width="1.6"/>
<path d="M1280.9 340.9L1280.9 341.6" stroke="#cbcbcb" stroke-width="1.6"/>
<path d="M1280.9 351.1L1280.9 364.2" stroke="#00ffff" stroke-width="1.6"/>
<path d="M1280.9 357.9L1280.9 358.6" stroke="#cbcbcb" stroke-width="1.6"/>
<path d="M1280.9 368.1L1280.9 381.2" stroke="#00ffff" stroke-width="1.6"/>
<path d="M1280.9 374.9L1280.9 375.6" stroke="#cbcbcb" stroke-width="1.6"/>
<path d="M1280.9 385.1L1280.9 398.2" stroke="#00ffff" stroke-width="1.6"/>
<path d="M1280.9 391.9L1280.9 392.6" stroke="#cbcbcb" stroke-width="1.6"/>
<path d="M1009.4 92.6L1009.4 64.4L1050.7 64.4L1050.7 92.6" stroke="#cbcbcb" stroke-width="1.1"/>
<path d="M1009.4 67.5L1050.7 67.5M1010.5 67L1010.5 92.6M1048.5 64.4L1048.5 92.6M1034.5 67.4L1034.5 88" stroke="#cbcbcb"/>
<path d="M1025.2 69.3L1032.6 69.3L1032.6 78.4L1025.2 78.4Z" stroke="#00ffff" stroke-width="1.3"/>
<path d="M1028.5 69.3L1028.5 78.4" stroke="#00ffff"/>
<path d="M1038.2 69.3L1045.6 69.3L1045.6 78.4L1038.2 78.4Z" stroke="#00ffff" stroke-width="1.3"/>
<path d="M1041.5 69.3L1041.5 78.4" stroke="#00ffff"/>
<path d="M1010.2 85.2L1048.5 85.2" stroke="#ffff00" stroke-width="1.8"/>
<g transform="translate(2396.2 0) scale(-1 1)">
<path d="M1177.5 92.6L1177.5 64.4L1218.7 64.4L1218.7 92.6" stroke="#cbcbcb" stroke-width="1.1"/>
<path d="M1177.5 67.5L1218.7 67.5M1178.5 67L1178.5 92.6M1216.5 64.4L1216.5 92.6M1202.5 67.4L1202.5 88" stroke="#cbcbcb"/>
<path d="M1193.3 69.3L1200.7 69.3L1200.7 78.4L1193.3 78.4Z" stroke="#00ffff" stroke-width="1.3"/>
<path d="M1197.5 69.3L1197.5 78.4" stroke="#00ffff"/>
<path d="M1206.3 69.3L1213.7 69.3L1213.7 78.4L1206.3 78.4Z" stroke="#00ffff" stroke-width="1.3"/>
<path d="M1210.5 69.3L1210.5 78.4" stroke="#00ffff"/>
<path d="M1178.3 85.2L1216.5 85.2" stroke="#ffff00" stroke-width="1.8"/>
</g>
<path d="M681.5 88.4L681.5 421.3M686.5 88.4L686.5 421.3M691.5 88.4L691.5 421.3M679.3 88.5L707.9 88.5M688.1 105.5L693.8 105.5M684 114.5L693.8 114.5M684 131.5L709.6 131.5M688.1 117.5L693.8 117.5M688.1 125.5L693.8 125.5M688.1 134.5L693.8 134.5M684 148.5L709.6 148.5M688.1 134.5L693.8 134.5M688.1 142.5L693.8 142.5M688.1 151.5L693.8 151.5M684 165.5L709.6 165.5M688.1 151.5L693.8 151.5M688.1 159.5L693.8 159.5M688.1 168.5L693.8 168.5M684 182.5L709.6 182.5M688.1 168.5L693.8 168.5M688.1 176.5L693.8 176.5M688.1 185.5L693.8 185.5M684 199.5L709.6 199.5M688.1 185.5L693.8 185.5M688.1 193.5L693.8 193.5M688.1 202.5L693.8 202.5M684 216.5L709.6 216.5M688.1 202.5L693.8 202.5M688.1 210.5L693.8 210.5M688.1 219.5L693.8 219.5M684 233.5L709.6 233.5M688.1 219.5L693.8 219.5M688.1 227.5L693.8 227.5M688.1 236.5L693.8 236.5M684 250.5L709.6 250.5M688.1 236.5L693.8 236.5M688.1 244.5L693.8 244.5M688.1 253.5L693.8 253.5M684 267.5L709.6 267.5M688.1 253.5L693.8 253.5M688.1 261.5L693.8 261.5M688.1 270.5L693.8 270.5M684 284.5L709.6 284.5M688.1 270.5L693.8 270.5M688.1 278.5L693.8 278.5M688.1 287.5L693.8 287.5M684 301.5L709.6 301.5M688.1 287.5L693.8 287.5M688.1 295.5L693.8 295.5M688.1 304.5L693.8 304.5M684 318.5L709.6 318.5M688.1 304.5L693.8 304.5M688.1 312.5L693.8 312.5M688.1 321.5L693.8 321.5M684 335.5L709.6 335.5M688.1 321.5L693.8 321.5M688.1 329.5L693.8 329.5M688.1 338.5L693.8 338.5M684 352.5L709.6 352.5M688.1 338.5L693.8 338.5M688.1 346.5L693.8 346.5M688.1 355.5L693.8 355.5M684 369.5L709.6 369.5M688.1 355.5L693.8 355.5M688.1 363.5L693.8 363.5M688.1 372.5L693.8 372.5M684 386.5L709.6 386.5M688.1 372.5L693.8 372.5M688.1 380.5L693.8 380.5M688.1 389.5L693.8 389.5M684 403.5L709.6 403.5M688.1 389.5L693.8 389.5M688.1 397.5L693.8 397.5M688.1 406.5L693.8 406.5M684 420.5L709.6 420.5M688.1 406.5L693.8 406.5M688.1 414.5L693.8 414.5" stroke="#00ff00"/>
<text x="690.8" y="131.6" font-size="3.4" transform="rotate(-90 690.8 131.6)" font-weight="bold">1500</text>
<text x="690.8" y="122.6" font-size="3.4" transform="rotate(-90 690.8 122.6)" font-weight="bold">900</text>
<text x="685.9" y="127.5" font-size="2.9" transform="rotate(-90 685.9 127.5)" font-weight="bold">2900</text>
<text x="690.8" y="148.6" font-size="3.4" transform="rotate(-90 690.8 148.6)" font-weight="bold">1500</text>
<text x="690.8" y="139.6" font-size="3.4" transform="rotate(-90 690.8 139.6)" font-weight="bold">900</text>
<text x="685.9" y="144.5" font-size="2.9" transform="rotate(-90 685.9 144.5)" font-weight="bold">2900</text>
<text x="690.8" y="165.6" font-size="3.4" transform="rotate(-90 690.8 165.6)" font-weight="bold">1500</text>
<text x="690.8" y="156.6" font-size="3.4" transform="rotate(-90 690.8 156.6)" font-weight="bold">900</text>
<text x="685.9" y="161.5" font-size="2.9" transform="rotate(-90 685.9 161.5)" font-weight="bold">2900</text>
<text x="690.8" y="182.7" font-size="3.4" transform="rotate(-90 690.8 182.7)" font-weight="bold">1500</text>
<text x="690.8" y="173.7" font-size="3.4" transform="rotate(-90 690.8 173.7)" font-weight="bold">900</text>
<text x="685.9" y="178.6" font-size="2.9" transform="rotate(-90 685.9 178.6)" font-weight="bold">2900</text>
<text x="690.8" y="199.7" font-size="3.4" transform="rotate(-90 690.8 199.7)" font-weight="bold">1500</text>
<text x="690.8" y="190.7" font-size="3.4" transform="rotate(-90 690.8 190.7)" font-weight="bold">900</text>
<text x="685.9" y="195.6" font-size="2.9" transform="rotate(-90 685.9 195.6)" font-weight="bold">2900</text>
<text x="690.8" y="216.7" font-size="3.4" transform="rotate(-90 690.8 216.7)" font-weight="bold">1500</text>
<text x="690.8" y="207.7" font-size="3.4" transform="rotate(-90 690.8 207.7)" font-weight="bold">900</text>
<text x="685.9" y="212.6" font-size="2.9" transform="rotate(-90 685.9 212.6)" font-weight="bold">2900</text>
<text x="690.8" y="233.7" font-size="3.4" transform="rotate(-90 690.8 233.7)" font-weight="bold">1500</text>
<text x="690.8" y="224.7" font-size="3.4" transform="rotate(-90 690.8 224.7)" font-weight="bold">900</text>
<text x="685.9" y="229.6" font-size="2.9" transform="rotate(-90 685.9 229.6)" font-weight="bold">2900</text>
<text x="690.8" y="250.7" font-size="3.4" transform="rotate(-90 690.8 250.7)" font-weight="bold">1500</text>
<text x="690.8" y="241.7" font-size="3.4" transform="rotate(-90 690.8 241.7)" font-weight="bold">900</text>
<text x="685.9" y="246.6" font-size="2.9" transform="rotate(-90 685.9 246.6)" font-weight="bold">2900</text>
<text x="690.8" y="267.8" font-size="3.4" transform="rotate(-90 690.8 267.8)" font-weight="bold">1500</text>
<text x="690.8" y="258.8" font-size="3.4" transform="rotate(-90 690.8 258.8)" font-weight="bold">900</text>
<text x="685.9" y="263.7" font-size="2.9" transform="rotate(-90 685.9 263.7)" font-weight="bold">2900</text>
<text x="690.8" y="284.8" font-size="3.4" transform="rotate(-90 690.8 284.8)" font-weight="bold">1500</text>
<text x="690.8" y="275.8" font-size="3.4" transform="rotate(-90 690.8 275.8)" font-weight="bold">900</text>
<text x="685.9" y="280.7" font-size="2.9" transform="rotate(-90 685.9 280.7)" font-weight="bold">2900</text>
<text x="690.8" y="301.8" font-size="3.4" transform="rotate(-90 690.8 301.8)" font-weight="bold">1500</text>
<text x="690.8" y="292.8" font-size="3.4" transform="rotate(-90 690.8 292.8)" font-weight="bold">900</text>
<text x="685.9" y="297.7" font-size="2.9" transform="rotate(-90 685.9 297.7)" font-weight="bold">2900</text>
<text x="690.8" y="318.8" font-size="3.4" transform="rotate(-90 690.8 318.8)" font-weight="bold">1500</text>
<text x="690.8" y="309.8" font-size="3.4" transform="rotate(-90 690.8 309.8)" font-weight="bold">900</text>
<text x="685.9" y="314.7" font-size="2.9" transform="rotate(-90 685.9 314.7)" font-weight="bold">2900</text>
<text x="690.8" y="335.8" font-size="3.4" transform="rotate(-90 690.8 335.8)" font-weight="bold">1500</text>
<text x="690.8" y="326.8" font-size="3.4" transform="rotate(-90 690.8 326.8)" font-weight="bold">900</text>
<text x="685.9" y="331.7" font-size="2.9" transform="rotate(-90 685.9 331.7)" font-weight="bold">2900</text>
<text x="690.8" y="352.9" font-size="3.4" transform="rotate(-90 690.8 352.9)" font-weight="bold">1500</text>
<text x="690.8" y="343.9" font-size="3.4" transform="rotate(-90 690.8 343.9)" font-weight="bold">900</text>
<text x="685.9" y="348.8" font-size="2.9" transform="rotate(-90 685.9 348.8)" font-weight="bold">2900</text>
<text x="690.8" y="369.9" font-size="3.4" transform="rotate(-90 690.8 369.9)" font-weight="bold">1500</text>
<text x="690.8" y="360.9" font-size="3.4" transform="rotate(-90 690.8 360.9)" font-weight="bold">900</text>
<text x="685.9" y="365.8" font-size="2.9" transform="rotate(-90 685.9 365.8)" font-weight="bold">2900</text>
<text x="690.8" y="386.9" font-size="3.4" transform="rotate(-90 690.8 386.9)" font-weight="bold">1500</text>
<text x="690.8" y="377.9" font-size="3.4" transform="rotate(-90 690.8 377.9)" font-weight="bold">900</text>
<text x="685.9" y="382.8" font-size="2.9" transform="rotate(-90 685.9 382.8)" font-weight="bold">2900</text>
<text x="690.8" y="403.9" font-size="3.4" transform="rotate(-90 690.8 403.9)" font-weight="bold">1500</text>
<text x="690.8" y="394.9" font-size="3.4" transform="rotate(-90 690.8 394.9)" font-weight="bold">900</text>
<text x="685.9" y="399.8" font-size="2.9" transform="rotate(-90 685.9 399.8)" font-weight="bold">2900</text>
<text x="690.8" y="420.9" font-size="3.4" transform="rotate(-90 690.8 420.9)" font-weight="bold">1500</text>
<text x="690.8" y="411.9" font-size="3.4" transform="rotate(-90 690.8 411.9)" font-weight="bold">900</text>
<text x="685.9" y="416.8" font-size="2.9" transform="rotate(-90 685.9 416.8)" font-weight="bold">2900</text>
<text x="690.8" y="112.9" font-size="3.2" transform="rotate(-90 690.8 112.9)" font-weight="bold">1400</text>
<text x="690.8" y="102" font-size="3.2" transform="rotate(-90 690.8 102)" font-weight="bold">3300</text>
<text x="685.9" y="103" font-size="2.9" transform="rotate(-90 685.9 103)" font-weight="bold">4500</text>
<text x="678.3" y="85.5" font-size="3.8" text-anchor="end" font-weight="bold" textLength="11" lengthAdjust="spacingAndGlyphs">52.200</text>
<path d="M676.4 85.7L681 85.7L678.7 87.9Z" stroke="#ffffff" stroke-width="0.8"/>
<text x="662.1" y="85.7" font-size="3.6" text-anchor="middle" font-weight="bold">RF</text>
<text x="678.3" y="111.5" font-size="3.8" text-anchor="end" font-weight="bold" textLength="11" lengthAdjust="spacingAndGlyphs">49.300</text>
<path d="M676.4 111.7L681 111.7L678.7 113.9Z" stroke="#ffffff" stroke-width="0.8"/>
<text x="662.1" y="111.7" font-size="3.6" text-anchor="middle" font-weight="bold">18</text>
<text x="678.3" y="129.1" font-size="3.8" text-anchor="end" font-weight="bold" textLength="11" lengthAdjust="spacingAndGlyphs">46.400</text>
<path d="M676.4 129.3L681 129.3L678.7 131.5Z" stroke="#ffffff" stroke-width="0.8"/>
<text x="662.1" y="129.3" font-size="3.6" text-anchor="middle" font-weight="bold">17</text>
<text x="678.3" y="146.1" font-size="3.8" text-anchor="end" font-weight="bold" textLength="11" lengthAdjust="spacingAndGlyphs">43.500</text>
<path d="M676.4 146.3L681 146.3L678.7 148.5Z" stroke="#ffffff" stroke-width="0.8"/>
<text x="662.1" y="146.3" font-size="3.6" text-anchor="middle" font-weight="bold">16</text>
<text x="678.3" y="163.1" font-size="3.8" text-anchor="end" font-weight="bold" textLength="11" lengthAdjust="spacingAndGlyphs">40.600</text>
<path d="M676.4 163.3L681 163.3L678.7 165.5Z" stroke="#ffffff" stroke-width="0.8"/>
<text x="662.1" y="163.3" font-size="3.6" text-anchor="middle" font-weight="bold">15</text>
<text x="678.3" y="180.2" font-size="3.8" text-anchor="end" font-weight="bold" textLength="11" lengthAdjust="spacingAndGlyphs">37.700</text>
<path d="M676.4 180.4L681 180.4L678.7 182.6Z" stroke="#ffffff" stroke-width="0.8"/>
<text x="662.1" y="180.4" font-size="3.6" text-anchor="middle" font-weight="bold">14</text>
<text x="678.3" y="197.2" font-size="3.8" text-anchor="end" font-weight="bold" textLength="11" lengthAdjust="spacingAndGlyphs">34.800</text>
<path d="M676.4 197.4L681 197.4L678.7 199.6Z" stroke="#ffffff" stroke-width="0.8"/>
<text x="662.1" y="197.4" font-size="3.6" text-anchor="middle" font-weight="bold">13</text>
<text x="678.3" y="214.2" font-size="3.8" text-anchor="end" font-weight="bold" textLength="11" lengthAdjust="spacingAndGlyphs">31.900</text>
<path d="M676.4 214.4L681 214.4L678.7 216.6Z" stroke="#ffffff" stroke-width="0.8"/>
<text x="662.1" y="214.4" font-size="3.6" text-anchor="middle" font-weight="bold">12</text>
<text x="678.3" y="231.2" font-size="3.8" text-anchor="end" font-weight="bold" textLength="11" lengthAdjust="spacingAndGlyphs">29.000</text>
<path d="M676.4 231.4L681 231.4L678.7 233.6Z" stroke="#ffffff" stroke-width="0.8"/>
<text x="662.1" y="231.4" font-size="3.6" text-anchor="middle" font-weight="bold">11</text>
<text x="678.3" y="248.2" font-size="3.8" text-anchor="end" font-weight="bold" textLength="11" lengthAdjust="spacingAndGlyphs">26.100</text>
<path d="M676.4 248.4L681 248.4L678.7 250.6Z" stroke="#ffffff" stroke-width="0.8"/>
<text x="662.1" y="248.4" font-size="3.6" text-anchor="middle" font-weight="bold">10</text>
<text x="678.3" y="265.3" font-size="3.8" text-anchor="end" font-weight="bold" textLength="11" lengthAdjust="spacingAndGlyphs">23.200</text>
<path d="M676.4 265.5L681 265.5L678.7 267.7Z" stroke="#ffffff" stroke-width="0.8"/>
<text x="662.1" y="265.5" font-size="3.6" text-anchor="middle" font-weight="bold">9</text>
<text x="678.3" y="282.3" font-size="3.8" text-anchor="end" font-weight="bold" textLength="11" lengthAdjust="spacingAndGlyphs">20.300</text>
<path d="M676.4 282.5L681 282.5L678.7 284.7Z" stroke="#ffffff" stroke-width="0.8"/>
<text x="662.1" y="282.5" font-size="3.6" text-anchor="middle" font-weight="bold">8</text>
<text x="678.3" y="299.3" font-size="3.8" text-anchor="end" font-weight="bold" textLength="11" lengthAdjust="spacingAndGlyphs">17.400</text>
<path d="M676.4 299.5L681 299.5L678.7 301.7Z" stroke="#ffffff" stroke-width="0.8"/>
<text x="662.1" y="299.5" font-size="3.6" text-anchor="middle" font-weight="bold">7</text>
<text x="678.3" y="316.3" font-size="3.8" text-anchor="end" font-weight="bold" textLength="11" lengthAdjust="spacingAndGlyphs">14.500</text>
<path d="M676.4 316.5L681 316.5L678.7 318.7Z" stroke="#ffffff" stroke-width="0.8"/>
<text x="662.1" y="316.5" font-size="3.6" text-anchor="middle" font-weight="bold">6</text>
<text x="678.3" y="333.3" font-size="3.8" text-anchor="end" font-weight="bold" textLength="11" lengthAdjust="spacingAndGlyphs">11.600</text>
<path d="M676.4 333.5L681 333.5L678.7 335.7Z" stroke="#ffffff" stroke-width="0.8"/>
<text x="662.1" y="333.5" font-size="3.6" text-anchor="middle" font-weight="bold">5</text>
<text x="678.3" y="350.4" font-size="3.8" text-anchor="end" font-weight="bold" textLength="11" lengthAdjust="spacingAndGlyphs">8.700</text>
<path d="M676.4 350.6L681 350.6L678.7 352.8Z" stroke="#ffffff" stroke-width="0.8"/>
<text x="662.1" y="350.6" font-size="3.6" text-anchor="middle" font-weight="bold">4</text>
<text x="678.3" y="367.4" font-size="3.8" text-anchor="end" font-weight="bold" textLength="11" lengthAdjust="spacingAndGlyphs">5.800</text>
<path d="M676.4 367.6L681 367.6L678.7 369.8Z" stroke="#ffffff" stroke-width="0.8"/>
<text x="662.1" y="367.6" font-size="3.6" text-anchor="middle" font-weight="bold">3</text>
<text x="678.3" y="384.4" font-size="3.8" text-anchor="end" font-weight="bold" textLength="11" lengthAdjust="spacingAndGlyphs">2.900</text>
<path d="M676.4 384.6L681 384.6L678.7 386.8Z" stroke="#ffffff" stroke-width="0.8"/>
<text x="662.1" y="384.6" font-size="3.6" text-anchor="middle" font-weight="bold">2</text>
<text x="678.3" y="401.4" font-size="3.8" text-anchor="end" font-weight="bold" textLength="11" lengthAdjust="spacingAndGlyphs">0.000</text>
<path d="M676.4 401.6L681 401.6L678.7 403.8Z" stroke="#ffffff" stroke-width="0.8"/>
<text x="662.1" y="401.6" font-size="3.6" text-anchor="middle" font-weight="bold">1</text>
<text x="678.3" y="418.4" font-size="3.8" text-anchor="end" font-weight="bold" textLength="11" lengthAdjust="spacingAndGlyphs">0.000</text>
<path d="M676.4 418.6L681 418.6L678.7 420.8Z" stroke="#ffffff" stroke-width="0.8"/>
<text x="662.1" y="418.6" font-size="3.6" text-anchor="middle" font-weight="bold">1</text>
<path d="M890.5 88.4L890.5 421.3M895.5 88.4L895.5 421.3M900.5 88.4L900.5 421.3M873.1 88.5L902.9 88.5M887.2 105.5L892.9 105.5M888.8 114.5L900 114.5M872.7 131.5L900 131.5M887.2 117.5L892.9 117.5M887.2 125.5L892.9 125.5M887.2 134.5L892.9 134.5M872.7 148.5L900 148.5M887.2 134.5L892.9 134.5M887.2 142.5L892.9 142.5M887.2 151.5L892.9 151.5M872.7 165.5L900 165.5M887.2 151.5L892.9 151.5M887.2 159.5L892.9 159.5M887.2 168.5L892.9 168.5M872.7 182.5L900 182.5M887.2 168.5L892.9 168.5M887.2 176.5L892.9 176.5M887.2 185.5L892.9 185.5M872.7 199.5L900 199.5M887.2 185.5L892.9 185.5M887.2 193.5L892.9 193.5M887.2 202.5L892.9 202.5M872.7 216.5L900 216.5M887.2 202.5L892.9 202.5M887.2 210.5L892.9 210.5M887.2 219.5L892.9 219.5M872.7 233.5L900 233.5M887.2 219.5L892.9 219.5M887.2 227.5L892.9 227.5M887.2 236.5L892.9 236.5M872.7 250.5L900 250.5M887.2 236.5L892.9 236.5M887.2 244.5L892.9 244.5M887.2 253.5L892.9 253.5M872.7 267.5L900 267.5M887.2 253.5L892.9 253.5M887.2 261.5L892.9 261.5M887.2 270.5L892.9 270.5M872.7 284.5L900 284.5M887.2 270.5L892.9 270.5M887.2 278.5L892.9 278.5M887.2 287.5L892.9 287.5M872.7 301.5L900 301.5M887.2 287.5L892.9 287.5M887.2 295.5L892.9 295.5M887.2 304.5L892.9 304.5M872.7 318.5L900 318.5M887.2 304.5L892.9 304.5M887.2 312.5L892.9 312.5M887.2 321.5L892.9 321.5M872.7 335.5L900 335.5M887.2 321.5L892.9 321.5M887.2 329.5L892.9 329.5M887.2 338.5L892.9 338.5M872.7 352.5L900 352.5M887.2 338.5L892.9 338.5M887.2 346.5L892.9 346.5M887.2 355.5L892.9 355.5M872.7 369.5L900 369.5M887.2 355.5L892.9 355.5M887.2 363.5L892.9 363.5M887.2 372.5L892.9 372.5M872.7 386.5L900 386.5M887.2 372.5L892.9 372.5M887.2 380.5L892.9 380.5M887.2 389.5L892.9 389.5M872.7 403.5L900 403.5M887.2 389.5L892.9 389.5M887.2 397.5L892.9 397.5M887.2 406.5L892.9 406.5M872.7 420.5L900 420.5M887.2 406.5L892.9 406.5M887.2 414.5L892.9 414.5" stroke="#00ff00"/>
<text x="889.9" y="131.6" font-size="3.4" transform="rotate(-90 889.9 131.6)" font-weight="bold">1500</text>
<text x="889.9" y="122.6" font-size="3.4" transform="rotate(-90 889.9 122.6)" font-weight="bold">900</text>
<text x="894.8" y="127.5" font-size="2.9" transform="rotate(-90 894.8 127.5)" font-weight="bold">2900</text>
<text x="889.9" y="148.6" font-size="3.4" transform="rotate(-90 889.9 148.6)" font-weight="bold">1500</text>
<text x="889.9" y="139.6" font-size="3.4" transform="rotate(-90 889.9 139.6)" font-weight="bold">900</text>
<text x="894.8" y="144.5" font-size="2.9" transform="rotate(-90 894.8 144.5)" font-weight="bold">2900</text>
<text x="889.9" y="165.6" font-size="3.4" transform="rotate(-90 889.9 165.6)" font-weight="bold">1500</text>
<text x="889.9" y="156.6" font-size="3.4" transform="rotate(-90 889.9 156.6)" font-weight="bold">900</text>
<text x="894.8" y="161.5" font-size="2.9" transform="rotate(-90 894.8 161.5)" font-weight="bold">2900</text>
<text x="889.9" y="182.7" font-size="3.4" transform="rotate(-90 889.9 182.7)" font-weight="bold">1500</text>
<text x="889.9" y="173.7" font-size="3.4" transform="rotate(-90 889.9 173.7)" font-weight="bold">900</text>
<text x="894.8" y="178.6" font-size="2.9" transform="rotate(-90 894.8 178.6)" font-weight="bold">2900</text>
<text x="889.9" y="199.7" font-size="3.4" transform="rotate(-90 889.9 199.7)" font-weight="bold">1500</text>
<text x="889.9" y="190.7" font-size="3.4" transform="rotate(-90 889.9 190.7)" font-weight="bold">900</text>
<text x="894.8" y="195.6" font-size="2.9" transform="rotate(-90 894.8 195.6)" font-weight="bold">2900</text>
<text x="889.9" y="216.7" font-size="3.4" transform="rotate(-90 889.9 216.7)" font-weight="bold">1500</text>
<text x="889.9" y="207.7" font-size="3.4" transform="rotate(-90 889.9 207.7)" font-weight="bold">900</text>
<text x="894.8" y="212.6" font-size="2.9" transform="rotate(-90 894.8 212.6)" font-weight="bold">2900</text>
<text x="889.9" y="233.7" font-size="3.4" transform="rotate(-90 889.9 233.7)" font-weight="bold">1500</text>
<text x="889.9" y="224.7" font-size="3.4" transform="rotate(-90 889.9 224.7)" font-weight="bold">900</text>
<text x="894.8" y="229.6" font-size="2.9" transform="rotate(-90 894.8 229.6)" font-weight="bold">2900</text>
<text x="889.9" y="250.7" font-size="3.4" transform="rotate(-90 889.9 250.7)" font-weight="bold">1500</text>
<text x="889.9" y="241.7" font-size="3.4" transform="rotate(-90 889.9 241.7)" font-weight="bold">900</text>
<text x="894.8" y="246.6" font-size="2.9" transform="rotate(-90 894.8 246.6)" font-weight="bold">2900</text>
<text x="889.9" y="267.8" font-size="3.4" transform="rotate(-90 889.9 267.8)" font-weight="bold">1500</text>
<text x="889.9" y="258.8" font-size="3.4" transform="rotate(-90 889.9 258.8)" font-weight="bold">900</text>
<text x="894.8" y="263.7" font-size="2.9" transform="rotate(-90 894.8 263.7)" font-weight="bold">2900</text>
<text x="889.9" y="284.8" font-size="3.4" transform="rotate(-90 889.9 284.8)" font-weight="bold">1500</text>
<text x="889.9" y="275.8" font-size="3.4" transform="rotate(-90 889.9 275.8)" font-weight="bold">900</text>
<text x="894.8" y="280.7" font-size="2.9" transform="rotate(-90 894.8 280.7)" font-weight="bold">2900</text>
<text x="889.9" y="301.8" font-size="3.4" transform="rotate(-90 889.9 301.8)" font-weight="bold">1500</text>
<text x="889.9" y="292.8" font-size="3.4" transform="rotate(-90 889.9 292.8)" font-weight="bold">900</text>
<text x="894.8" y="297.7" font-size="2.9" transform="rotate(-90 894.8 297.7)" font-weight="bold">2900</text>
<text x="889.9" y="318.8" font-size="3.4" transform="rotate(-90 889.9 318.8)" font-weight="bold">1500</text>
<text x="889.9" y="309.8" font-size="3.4" transform="rotate(-90 889.9 309.8)" font-weight="bold">900</text>
<text x="894.8" y="314.7" font-size="2.9" transform="rotate(-90 894.8 314.7)" font-weight="bold">2900</text>
<text x="889.9" y="335.8" font-size="3.4" transform="rotate(-90 889.9 335.8)" font-weight="bold">1500</text>
<text x="889.9" y="326.8" font-size="3.4" transform="rotate(-90 889.9 326.8)" font-weight="bold">900</text>
<text x="894.8" y="331.7" font-size="2.9" transform="rotate(-90 894.8 331.7)" font-weight="bold">2900</text>
<text x="889.9" y="352.9" font-size="3.4" transform="rotate(-90 889.9 352.9)" font-weight="bold">1500</text>
<text x="889.9" y="343.9" font-size="3.4" transform="rotate(-90 889.9 343.9)" font-weight="bold">900</text>
<text x="894.8" y="348.8" font-size="2.9" transform="rotate(-90 894.8 348.8)" font-weight="bold">2900</text>
<text x="889.9" y="369.9" font-size="3.4" transform="rotate(-90 889.9 369.9)" font-weight="bold">1500</text>
<text x="889.9" y="360.9" font-size="3.4" transform="rotate(-90 889.9 360.9)" font-weight="bold">900</text>
<text x="894.8" y="365.8" font-size="2.9" transform="rotate(-90 894.8 365.8)" font-weight="bold">2900</text>
<text x="889.9" y="386.9" font-size="3.4" transform="rotate(-90 889.9 386.9)" font-weight="bold">1500</text>
<text x="889.9" y="377.9" font-size="3.4" transform="rotate(-90 889.9 377.9)" font-weight="bold">900</text>
<text x="894.8" y="382.8" font-size="2.9" transform="rotate(-90 894.8 382.8)" font-weight="bold">2900</text>
<text x="889.9" y="403.9" font-size="3.4" transform="rotate(-90 889.9 403.9)" font-weight="bold">1500</text>
<text x="889.9" y="394.9" font-size="3.4" transform="rotate(-90 889.9 394.9)" font-weight="bold">900</text>
<text x="894.8" y="399.8" font-size="2.9" transform="rotate(-90 894.8 399.8)" font-weight="bold">2900</text>
<text x="889.9" y="420.9" font-size="3.4" transform="rotate(-90 889.9 420.9)" font-weight="bold">1500</text>
<text x="889.9" y="411.9" font-size="3.4" transform="rotate(-90 889.9 411.9)" font-weight="bold">900</text>
<text x="894.8" y="416.8" font-size="2.9" transform="rotate(-90 894.8 416.8)" font-weight="bold">2900</text>
<text x="889.9" y="112.9" font-size="3.2" transform="rotate(-90 889.9 112.9)" font-weight="bold">1400</text>
<text x="889.9" y="102" font-size="3.2" transform="rotate(-90 889.9 102)" font-weight="bold">3300</text>
<text x="894.8" y="103" font-size="2.9" transform="rotate(-90 894.8 103)" font-weight="bold">4500</text>
<text x="898.4" y="85.5" font-size="3.8" font-weight="bold" textLength="10" lengthAdjust="spacingAndGlyphs">52.200</text>
<path d="M895.6 85.7L900 85.7L897.8 87.9Z" stroke="#ffffff" stroke-width="0.8"/>
<text x="898.4" y="111.5" font-size="3.8" font-weight="bold" textLength="10" lengthAdjust="spacingAndGlyphs">49.300</text>
<path d="M895.6 111.7L900 111.7L897.8 113.9Z" stroke="#ffffff" stroke-width="0.8"/>
<text x="898.4" y="129.1" font-size="3.8" font-weight="bold" textLength="10" lengthAdjust="spacingAndGlyphs">46.400</text>
<path d="M895.6 129.3L900 129.3L897.8 131.5Z" stroke="#ffffff" stroke-width="0.8"/>
<text x="898.4" y="146.1" font-size="3.8" font-weight="bold" textLength="10" lengthAdjust="spacingAndGlyphs">43.500</text>
<path d="M895.6 146.3L900 146.3L897.8 148.5Z" stroke="#ffffff" stroke-width="0.8"/>
<text x="898.4" y="163.1" font-size="3.8" font-weight="bold" textLength="10" lengthAdjust="spacingAndGlyphs">40.600</text>
<path d="M895.6 163.3L900 163.3L897.8 165.5Z" stroke="#ffffff" stroke-width="0.8"/>
<text x="898.4" y="180.2" font-size="3.8" font-weight="bold" textLength="10" lengthAdjust="spacingAndGlyphs">37.700</text>
<path d="M895.6 180.4L900 180.4L897.8 182.6Z" stroke="#ffffff" stroke-width="0.8"/>
<text x="898.4" y="197.2" font-size="3.8" font-weight="bold" textLength="10" lengthAdjust="spacingAndGlyphs">34.800</text>
<path d="M895.6 197.4L900 197.4L897.8 199.6Z" stroke="#ffffff" stroke-width="0.8"/>
<text x="898.4" y="214.2" font-size="3.8" font-weight="bold" textLength="10" lengthAdjust="spacingAndGlyphs">31.900</text>
<path d="M895.6 214.4L900 214.4L897.8 216.6Z" stroke="#ffffff" stroke-width="0.8"/>
<text x="898.4" y="231.2" font-size="3.8" font-weight="bold" textLength="10" lengthAdjust="spacingAndGlyphs">29.000</text>
<path d="M895.6 231.4L900 231.4L897.8 233.6Z" stroke="#ffffff" stroke-width="0.8"/>
<text x="898.4" y="248.2" font-size="3.8" font-weight="bold" textLength="10" lengthAdjust="spacingAndGlyphs">26.100</text>
<path d="M895.6 248.4L900 248.4L897.8 250.6Z" stroke="#ffffff" stroke-width="0.8"/>
<text x="898.4" y="265.3" font-size="3.8" font-weight="bold" textLength="10" lengthAdjust="spacingAndGlyphs">23.200</text>
<path d="M895.6 265.5L900 265.5L897.8 267.7Z" stroke="#ffffff" stroke-width="0.8"/>
<text x="898.4" y="282.3" font-size="3.8" font-weight="bold" textLength="10" lengthAdjust="spacingAndGlyphs">20.300</text>
<path d="M895.6 282.5L900 282.5L897.8 284.7Z" stroke="#ffffff" stroke-width="0.8"/>
<text x="898.4" y="299.3" font-size="3.8" font-weight="bold" textLength="10" lengthAdjust="spacingAndGlyphs">17.400</text>
<path d="M895.6 299.5L900 299.5L897.8 301.7Z" stroke="#ffffff" stroke-width="0.8"/>
<text x="898.4" y="316.3" font-size="3.8" font-weight="bold" textLength="10" lengthAdjust="spacingAndGlyphs">14.500</text>
<path d="M895.6 316.5L900 316.5L897.8 318.7Z" stroke="#ffffff" stroke-width="0.8"/>
<text x="898.4" y="333.3" font-size="3.8" font-weight="bold" textLength="10" lengthAdjust="spacingAndGlyphs">11.600</text>
<path d="M895.6 333.5L900 333.5L897.8 335.7Z" stroke="#ffffff" stroke-width="0.8"/>
<text x="898.4" y="350.4" font-size="3.8" font-weight="bold" textLength="10" lengthAdjust="spacingAndGlyphs">8.700</text>
<path d="M895.6 350.6L900 350.6L897.8 352.8Z" stroke="#ffffff" stroke-width="0.8"/>
<text x="898.4" y="367.4" font-size="3.8" font-weight="bold" textLength="10" lengthAdjust="spacingAndGlyphs">5.800</text>
<path d="M895.6 367.6L900 367.6L897.8 369.8Z" stroke="#ffffff" stroke-width="0.8"/>
<text x="898.4" y="384.4" font-size="3.8" font-weight="bold" textLength="10" lengthAdjust="spacingAndGlyphs">2.900</text>
<path d="M895.6 384.6L900 384.6L897.8 386.8Z" stroke="#ffffff" stroke-width="0.8"/>
<text x="898.4" y="401.4" font-size="3.8" font-weight="bold" textLength="10" lengthAdjust="spacingAndGlyphs">0.000</text>
<path d="M895.6 401.6L900 401.6L897.8 403.8Z" stroke="#ffffff" stroke-width="0.8"/>
<text x="898.4" y="418.4" font-size="3.8" font-weight="bold" textLength="10" lengthAdjust="spacingAndGlyphs">0.000</text>
<path d="M895.6 418.6L900 418.6L897.8 420.8Z" stroke="#ffffff" stroke-width="0.8"/>
<path d="M919.5 67.3L919.5 399.1M923.5 67.3L923.5 399.1M928.5 67.3L928.5 399.1M916 67.5L944.8 67.5M925.2 84.5L930.9 84.5M921 92.5L930.9 92.5M921 109.5L946.9 109.5M925.2 95.5L930.9 95.5M925.2 103.5L930.9 103.5M925.2 112.5L930.9 112.5M921 126.5L946.9 126.5M925.2 112.5L930.9 112.5M925.2 120.5L930.9 120.5M925.2 129.5L930.9 129.5M921 143.5L946.9 143.5M925.2 129.5L930.9 129.5M925.2 137.5L930.9 137.5M925.2 146.5L930.9 146.5M921 160.5L946.9 160.5M925.2 146.5L930.9 146.5M925.2 154.5L930.9 154.5M925.2 163.5L930.9 163.5M921 177.5L946.9 177.5M925.2 163.5L930.9 163.5M925.2 171.5L930.9 171.5M925.2 180.5L930.9 180.5M921 194.5L946.9 194.5M925.2 180.5L930.9 180.5M925.2 188.5L930.9 188.5M925.2 197.5L930.9 197.5M921 211.5L946.9 211.5M925.2 197.5L930.9 197.5M925.2 205.5L930.9 205.5M925.2 214.5L930.9 214.5M921 228.5L946.9 228.5M925.2 214.5L930.9 214.5M925.2 222.5L930.9 222.5M925.2 231.5L930.9 231.5M921 245.5L946.9 245.5M925.2 231.5L930.9 231.5M925.2 239.5L930.9 239.5M925.2 248.5L930.9 248.5M921 262.5L946.9 262.5M925.2 248.5L930.9 248.5M925.2 256.5L930.9 256.5M925.2 265.5L930.9 265.5M921 279.5L946.9 279.5M925.2 265.5L930.9 265.5M925.2 273.5L930.9 273.5M925.2 282.5L930.9 282.5M921 296.5L946.9 296.5M925.2 282.5L930.9 282.5M925.2 290.5L930.9 290.5M925.2 299.5L930.9 299.5M921 313.5L946.9 313.5M925.2 299.5L930.9 299.5M925.2 307.5L930.9 307.5M925.2 316.5L930.9 316.5M921 330.5L946.9 330.5M925.2 316.5L930.9 316.5M925.2 324.5L930.9 324.5M925.2 333.5L930.9 333.5M921 347.5L946.9 347.5M925.2 333.5L930.9 333.5M925.2 341.5L930.9 341.5M925.2 350.5L930.9 350.5M921 364.5L946.9 364.5M925.2 350.5L930.9 350.5M925.2 358.5L930.9 358.5M925.2 367.5L930.9 367.5M921 381.5L946.9 381.5M925.2 367.5L930.9 367.5M925.2 375.5L930.9 375.5M925.2 384.5L930.9 384.5M921 398.5L946.9 398.5M925.2 384.5L930.9 384.5M925.2 392.5L930.9 392.5" stroke="#00ff00"/>
<text x="927.9" y="109.4" font-size="3.4" transform="rotate(-90 927.9 109.4)" font-weight="bold">1500</text>
<text x="927.9" y="100.4" font-size="3.4" transform="rotate(-90 927.9 100.4)" font-weight="bold">900</text>
<text x="922.9" y="105.3" font-size="2.9" transform="rotate(-90 922.9 105.3)" font-weight="bold">2900</text>
<text x="927.9" y="126.4" font-size="3.4" transform="rotate(-90 927.9 126.4)" font-weight="bold">1500</text>
<text x="927.9" y="117.4" font-size="3.4" transform="rotate(-90 927.9 117.4)" font-weight="bold">900</text>
<text x="922.9" y="122.3" font-size="2.9" transform="rotate(-90 922.9 122.3)" font-weight="bold">2900</text>
<text x="927.9" y="143.4" font-size="3.4" transform="rotate(-90 927.9 143.4)" font-weight="bold">1500</text>
<text x="927.9" y="134.4" font-size="3.4" transform="rotate(-90 927.9 134.4)" font-weight="bold">900</text>
<text x="922.9" y="139.3" font-size="2.9" transform="rotate(-90 922.9 139.3)" font-weight="bold">2900</text>
<text x="927.9" y="160.5" font-size="3.4" transform="rotate(-90 927.9 160.5)" font-weight="bold">1500</text>
<text x="927.9" y="151.5" font-size="3.4" transform="rotate(-90 927.9 151.5)" font-weight="bold">900</text>
<text x="922.9" y="156.4" font-size="2.9" transform="rotate(-90 922.9 156.4)" font-weight="bold">2900</text>
<text x="927.9" y="177.5" font-size="3.4" transform="rotate(-90 927.9 177.5)" font-weight="bold">1500</text>
<text x="927.9" y="168.5" font-size="3.4" transform="rotate(-90 927.9 168.5)" font-weight="bold">900</text>
<text x="922.9" y="173.4" font-size="2.9" transform="rotate(-90 922.9 173.4)" font-weight="bold">2900</text>
<text x="927.9" y="194.5" font-size="3.4" transform="rotate(-90 927.9 194.5)" font-weight="bold">1500</text>
<text x="927.9" y="185.5" font-size="3.4" transform="rotate(-90 927.9 185.5)" font-weight="bold">900</text>
<text x="922.9" y="190.4" font-size="2.9" transform="rotate(-90 922.9 190.4)" font-weight="bold">2900</text>
<text x="927.9" y="211.5" font-size="3.4" transform="rotate(-90 927.9 211.5)" font-weight="bold">1500</text>
<text x="927.9" y="202.5" font-size="3.4" transform="rotate(-90 927.9 202.5)" font-weight="bold">900</text>
<text x="922.9" y="207.4" font-size="2.9" transform="rotate(-90 922.9 207.4)" font-weight="bold">2900</text>
<text x="927.9" y="228.5" font-size="3.4" transform="rotate(-90 927.9 228.5)" font-weight="bold">1500</text>
<text x="927.9" y="219.5" font-size="3.4" transform="rotate(-90 927.9 219.5)" font-weight="bold">900</text>
<text x="922.9" y="224.4" font-size="2.9" transform="rotate(-90 922.9 224.4)" font-weight="bold">2900</text>
<text x="927.9" y="245.6" font-size="3.4" transform="rotate(-90 927.9 245.6)" font-weight="bold">1500</text>
<text x="927.9" y="236.6" font-size="3.4" transform="rotate(-90 927.9 236.6)" font-weight="bold">900</text>
<text x="922.9" y="241.5" font-size="2.9" transform="rotate(-90 922.9 241.5)" font-weight="bold">2900</text>
<text x="927.9" y="262.6" font-size="3.4" transform="rotate(-90 927.9 262.6)" font-weight="bold">1500</text>
<text x="927.9" y="253.6" font-size="3.4" transform="rotate(-90 927.9 253.6)" font-weight="bold">900</text>
<text x="922.9" y="258.5" font-size="2.9" transform="rotate(-90 922.9 258.5)" font-weight="bold">2900</text>
<text x="927.9" y="279.6" font-size="3.4" transform="rotate(-90 927.9 279.6)" font-weight="bold">1500</text>
<text x="927.9" y="270.6" font-size="3.4" transform="rotate(-90 927.9 270.6)" font-weight="bold">900</text>
<text x="922.9" y="275.5" font-size="2.9" transform="rotate(-90 922.9 275.5)" font-weight="bold">2900</text>
<text x="927.9" y="296.6" font-size="3.4" transform="rotate(-90 927.9 296.6)" font-weight="bold">1500</text>
<text x="927.9" y="287.6" font-size="3.4" transform="rotate(-90 927.9 287.6)" font-weight="bold">900</text>
<text x="922.9" y="292.5" font-size="2.9" transform="rotate(-90 922.9 292.5)" font-weight="bold">2900</text>
<text x="927.9" y="313.6" font-size="3.4" transform="rotate(-90 927.9 313.6)" font-weight="bold">1500</text>
<text x="927.9" y="304.6" font-size="3.4" transform="rotate(-90 927.9 304.6)" font-weight="bold">900</text>
<text x="922.9" y="309.5" font-size="2.9" transform="rotate(-90 922.9 309.5)" font-weight="bold">2900</text>
<text x="927.9" y="330.7" font-size="3.4" transform="rotate(-90 927.9 330.7)" font-weight="bold">1500</text>
<text x="927.9" y="321.7" font-size="3.4" transform="rotate(-90 927.9 321.7)" font-weight="bold">900</text>
<text x="922.9" y="326.6" font-size="2.9" transform="rotate(-90 922.9 326.6)" font-weight="bold">2900</text>
<text x="927.9" y="347.7" font-size="3.4" transform="rotate(-90 927.9 347.7)" font-weight="bold">1500</text>
<text x="927.9" y="338.7" font-size="3.4" transform="rotate(-90 927.9 338.7)" font-weight="bold">900</text>
<text x="922.9" y="343.6" font-size="2.9" transform="rotate(-90 922.9 343.6)" font-weight="bold">2900</text>
<text x="927.9" y="364.7" font-size="3.4" transform="rotate(-90 927.9 364.7)" font-weight="bold">1500</text>
<text x="927.9" y="355.7" font-size="3.4" transform="rotate(-90 927.9 355.7)" font-weight="bold">900</text>
<text x="922.9" y="360.6" font-size="2.9" transform="rotate(-90 922.9 360.6)" font-weight="bold">2900</text>
<text x="927.9" y="381.7" font-size="3.4" transform="rotate(-90 927.9 381.7)" font-weight="bold">1500</text>
<text x="927.9" y="372.7" font-size="3.4" transform="rotate(-90 927.9 372.7)" font-weight="bold">900</text>
<text x="922.9" y="377.6" font-size="2.9" transform="rotate(-90 922.9 377.6)" font-weight="bold">2900</text>
<text x="927.9" y="398.7" font-size="3.4" transform="rotate(-90 927.9 398.7)" font-weight="bold">1500</text>
<text x="927.9" y="389.7" font-size="3.4" transform="rotate(-90 927.9 389.7)" font-weight="bold">900</text>
<text x="922.9" y="394.6" font-size="2.9" transform="rotate(-90 922.9 394.6)" font-weight="bold">2900</text>
<text x="927.9" y="91.1" font-size="3.2" transform="rotate(-90 927.9 91.1)" font-weight="bold">1400</text>
<text x="927.9" y="81.1" font-size="3.2" transform="rotate(-90 927.9 81.1)" font-weight="bold">3300</text>
<text x="922.9" y="82.1" font-size="2.9" transform="rotate(-90 922.9 82.1)" font-weight="bold">4500</text>
<text x="918.6" y="64.4" font-size="3.8" text-anchor="end" font-weight="bold" textLength="8.4" lengthAdjust="spacingAndGlyphs">52.200</text>
<path d="M919 64.6L923.6 64.6L921.3 66.8Z" stroke="#ffffff" stroke-width="0.8"/>
<text x="918.6" y="89.7" font-size="3.8" text-anchor="end" font-weight="bold" textLength="8.4" lengthAdjust="spacingAndGlyphs">49.300</text>
<path d="M919 89.9L923.6 89.9L921.3 92.1Z" stroke="#ffffff" stroke-width="0.8"/>
<text x="918.6" y="106.9" font-size="3.8" text-anchor="end" font-weight="bold" textLength="8.4" lengthAdjust="spacingAndGlyphs">46.400</text>
<path d="M919 107.1L923.6 107.1L921.3 109.3Z" stroke="#ffffff" stroke-width="0.8"/>
<text x="918.6" y="123.9" font-size="3.8" text-anchor="end" font-weight="bold" textLength="8.4" lengthAdjust="spacingAndGlyphs">43.500</text>
<path d="M919 124.1L923.6 124.1L921.3 126.3Z" stroke="#ffffff" stroke-width="0.8"/>
<text x="918.6" y="140.9" font-size="3.8" text-anchor="end" font-weight="bold" textLength="8.4" lengthAdjust="spacingAndGlyphs">40.600</text>
<path d="M919 141.1L923.6 141.1L921.3 143.3Z" stroke="#ffffff" stroke-width="0.8"/>
<text x="918.6" y="158" font-size="3.8" text-anchor="end" font-weight="bold" textLength="8.4" lengthAdjust="spacingAndGlyphs">37.700</text>
<path d="M919 158.2L923.6 158.2L921.3 160.4Z" stroke="#ffffff" stroke-width="0.8"/>
<text x="918.6" y="175" font-size="3.8" text-anchor="end" font-weight="bold" textLength="8.4" lengthAdjust="spacingAndGlyphs">34.800</text>
<path d="M919 175.2L923.6 175.2L921.3 177.4Z" stroke="#ffffff" stroke-width="0.8"/>
<text x="918.6" y="192" font-size="3.8" text-anchor="end" font-weight="bold" textLength="8.4" lengthAdjust="spacingAndGlyphs">31.900</text>
<path d="M919 192.2L923.6 192.2L921.3 194.4Z" stroke="#ffffff" stroke-width="0.8"/>
<text x="918.6" y="209" font-size="3.8" text-anchor="end" font-weight="bold" textLength="8.4" lengthAdjust="spacingAndGlyphs">29.000</text>
<path d="M919 209.2L923.6 209.2L921.3 211.4Z" stroke="#ffffff" stroke-width="0.8"/>
<text x="918.6" y="226" font-size="3.8" text-anchor="end" font-weight="bold" textLength="8.4" lengthAdjust="spacingAndGlyphs">26.100</text>
<path d="M919 226.2L923.6 226.2L921.3 228.4Z" stroke="#ffffff" stroke-width="0.8"/>
<text x="918.6" y="243.1" font-size="3.8" text-anchor="end" font-weight="bold" textLength="8.4" lengthAdjust="spacingAndGlyphs">23.200</text>
<path d="M919 243.3L923.6 243.3L921.3 245.5Z" stroke="#ffffff" stroke-width="0.8"/>
<text x="918.6" y="260.1" font-size="3.8" text-anchor="end" font-weight="bold" textLength="8.4" lengthAdjust="spacingAndGlyphs">20.300</text>
<path d="M919 260.3L923.6 260.3L921.3 262.5Z" stroke="#ffffff" stroke-width="0.8"/>
<text x="918.6" y="277.1" font-size="3.8" text-anchor="end" font-weight="bold" textLength="8.4" lengthAdjust="spacingAndGlyphs">17.400</text>
<path d="M919 277.3L923.6 277.3L921.3 279.5Z" stroke="#ffffff" stroke-width="0.8"/>
<text x="918.6" y="294.1" font-size="3.8" text-anchor="end" font-weight="bold" textLength="8.4" lengthAdjust="spacingAndGlyphs">14.500</text>
<path d="M919 294.3L923.6 294.3L921.3 296.5Z" stroke="#ffffff" stroke-width="0.8"/>
<text x="918.6" y="311.1" font-size="3.8" text-anchor="end" font-weight="bold" textLength="8.4" lengthAdjust="spacingAndGlyphs">11.600</text>
<path d="M919 311.3L923.6 311.3L921.3 313.5Z" stroke="#ffffff" stroke-width="0.8"/>
<text x="918.6" y="328.2" font-size="3.8" text-anchor="end" font-weight="bold" textLength="8.4" lengthAdjust="spacingAndGlyphs">8.700</text>
<path d="M919 328.4L923.6 328.4L921.3 330.6Z" stroke="#ffffff" stroke-width="0.8"/>
<text x="918.6" y="345.2" font-size="3.8" text-anchor="end" font-weight="bold" textLength="8.4" lengthAdjust="spacingAndGlyphs">5.800</text>
<path d="M919 345.4L923.6 345.4L921.3 347.6Z" stroke="#ffffff" stroke-width="0.8"/>
<text x="918.6" y="362.2" font-size="3.8" text-anchor="end" font-weight="bold" textLength="8.4" lengthAdjust="spacingAndGlyphs">2.900</text>
<path d="M919 362.4L923.6 362.4L921.3 364.6Z" stroke="#ffffff" stroke-width="0.8"/>
<text x="918.6" y="379.2" font-size="3.8" text-anchor="end" font-weight="bold" textLength="8.4" lengthAdjust="spacingAndGlyphs">0.000</text>
<path d="M919 379.4L923.6 379.4L921.3 381.6Z" stroke="#ffffff" stroke-width="0.8"/>
<text x="918.6" y="396.2" font-size="3.8" text-anchor="end" font-weight="bold" textLength="8.4" lengthAdjust="spacingAndGlyphs">0.000</text>
<path d="M919 396.4L923.6 396.4L921.3 398.6Z" stroke="#ffffff" stroke-width="0.8"/>
<path d="M1299.5 67.3L1299.5 399.1M1304.5 67.3L1304.5 399.1M1308.5 67.3L1308.5 399.1M1283.2 67.5L1312.1 67.5M1296.1 84.5L1301.8 84.5M1297.7 92.5L1308.7 92.5M1281.2 109.5L1307 109.5M1296.1 95.5L1301.8 95.5M1296.1 103.5L1301.8 103.5M1296.1 112.5L1301.8 112.5M1281.2 126.5L1307 126.5M1296.1 112.5L1301.8 112.5M1296.1 120.5L1301.8 120.5M1296.1 129.5L1301.8 129.5M1281.2 143.5L1307 143.5M1296.1 129.5L1301.8 129.5M1296.1 137.5L1301.8 137.5M1296.1 146.5L1301.8 146.5M1281.2 160.5L1307 160.5M1296.1 146.5L1301.8 146.5M1296.1 154.5L1301.8 154.5M1296.1 163.5L1301.8 163.5M1281.2 177.5L1307 177.5M1296.1 163.5L1301.8 163.5M1296.1 171.5L1301.8 171.5M1296.1 180.5L1301.8 180.5M1281.2 194.5L1307 194.5M1296.1 180.5L1301.8 180.5M1296.1 188.5L1301.8 188.5M1296.1 197.5L1301.8 197.5M1281.2 211.5L1307 211.5M1296.1 197.5L1301.8 197.5M1296.1 205.5L1301.8 205.5M1296.1 214.5L1301.8 214.5M1281.2 228.5L1307 228.5M1296.1 214.5L1301.8 214.5M1296.1 222.5L1301.8 222.5M1296.1 231.5L1301.8 231.5M1281.2 245.5L1307 245.5M1296.1 231.5L1301.8 231.5M1296.1 239.5L1301.8 239.5M1296.1 248.5L1301.8 248.5M1281.2 262.5L1307 262.5M1296.1 248.5L1301.8 248.5M1296.1 256.5L1301.8 256.5M1296.1 265.5L1301.8 265.5M1281.2 279.5L1307 279.5M1296.1 265.5L1301.8 265.5M1296.1 273.5L1301.8 273.5M1296.1 282.5L1301.8 282.5M1281.2 296.5L1307 296.5M1296.1 282.5L1301.8 282.5M1296.1 290.5L1301.8 290.5M1296.1 299.5L1301.8 299.5M1281.2 313.5L1307 313.5M1296.1 299.5L1301.8 299.5M1296.1 307.5L1301.8 307.5M1296.1 316.5L1301.8 316.5M1281.2 330.5L1307 330.5M1296.1 316.5L1301.8 316.5M1296.1 324.5L1301.8 324.5M1296.1 333.5L1301.8 333.5M1281.2 347.5L1307 347.5M1296.1 333.5L1301.8 333.5M1296.1 341.5L1301.8 341.5M1296.1 350.5L1301.8 350.5M1281.2 364.5L1307 364.5M1296.1 350.5L1301.8 350.5M1296.1 358.5L1301.8 358.5M1296.1 367.5L1301.8 367.5M1281.2 381.5L1307 381.5M1296.1 367.5L1301.8 367.5M1296.1 375.5L1301.8 375.5M1296.1 384.5L1301.8 384.5M1281.2 398.5L1307 398.5M1296.1 384.5L1301.8 384.5M1296.1 392.5L1301.8 392.5" stroke="#00ff00"/>
<text x="1298.8" y="109.4" font-size="3.4" transform="rotate(-90 1298.8 109.4)" font-weight="bold">1500</text>
<text x="1298.8" y="100.4" font-size="3.4" transform="rotate(-90 1298.8 100.4)" font-weight="bold">900</text>
<text x="1303.9" y="105.3" font-size="2.9" transform="rotate(-90 1303.9 105.3)" font-weight="bold">2900</text>
<text x="1298.8" y="126.4" font-size="3.4" transform="rotate(-90 1298.8 126.4)" font-weight="bold">1500</text>
<text x="1298.8" y="117.4" font-size="3.4" transform="rotate(-90 1298.8 117.4)" font-weight="bold">900</text>
<text x="1303.9" y="122.3" font-size="2.9" transform="rotate(-90 1303.9 122.3)" font-weight="bold">2900</text>
<text x="1298.8" y="143.4" font-size="3.4" transform="rotate(-90 1298.8 143.4)" font-weight="bold">1500</text>
<text x="1298.8" y="134.4" font-size="3.4" transform="rotate(-90 1298.8 134.4)" font-weight="bold">900</text>
<text x="1303.9" y="139.3" font-size="2.9" transform="rotate(-90 1303.9 139.3)" font-weight="bold">2900</text>
<text x="1298.8" y="160.5" font-size="3.4" transform="rotate(-90 1298.8 160.5)" font-weight="bold">1500</text>
<text x="1298.8" y="151.5" font-size="3.4" transform="rotate(-90 1298.8 151.5)" font-weight="bold">900</text>
<text x="1303.9" y="156.4" font-size="2.9" transform="rotate(-90 1303.9 156.4)" font-weight="bold">2900</text>
<text x="1298.8" y="177.5" font-size="3.4" transform="rotate(-90 1298.8 177.5)" font-weight="bold">1500</text>
<text x="1298.8" y="168.5" font-size="3.4" transform="rotate(-90 1298.8 168.5)" font-weight="bold">900</text>
<text x="1303.9" y="173.4" font-size="2.9" transform="rotate(-90 1303.9 173.4)" font-weight="bold">2900</text>
<text x="1298.8" y="194.5" font-size="3.4" transform="rotate(-90 1298.8 194.5)" font-weight="bold">1500</text>
<text x="1298.8" y="185.5" font-size="3.4" transform="rotate(-90 1298.8 185.5)" font-weight="bold">900</text>
<text x="1303.9" y="190.4" font-size="2.9" transform="rotate(-90 1303.9 190.4)" font-weight="bold">2900</text>
<text x="1298.8" y="211.5" font-size="3.4" transform="rotate(-90 1298.8 211.5)" font-weight="bold">1500</text>
<text x="1298.8" y="202.5" font-size="3.4" transform="rotate(-90 1298.8 202.5)" font-weight="bold">900</text>
<text x="1303.9" y="207.4" font-size="2.9" transform="rotate(-90 1303.9 207.4)" font-weight="bold">2900</text>
<text x="1298.8" y="228.5" font-size="3.4" transform="rotate(-90 1298.8 228.5)" font-weight="bold">1500</text>
<text x="1298.8" y="219.5" font-size="3.4" transform="rotate(-90 1298.8 219.5)" font-weight="bold">900</text>
<text x="1303.9" y="224.4" font-size="2.9" transform="rotate(-90 1303.9 224.4)" font-weight="bold">2900</text>
<text x="1298.8" y="245.6" font-size="3.4" transform="rotate(-90 1298.8 245.6)" font-weight="bold">1500</text>
<text x="1298.8" y="236.6" font-size="3.4" transform="rotate(-90 1298.8 236.6)" font-weight="bold">900</text>
<text x="1303.9" y="241.5" font-size="2.9" transform="rotate(-90 1303.9 241.5)" font-weight="bold">2900</text>
<text x="1298.8" y="262.6" font-size="3.4" transform="rotate(-90 1298.8 262.6)" font-weight="bold">1500</text>
<text x="1298.8" y="253.6" font-size="3.4" transform="rotate(-90 1298.8 253.6)" font-weight="bold">900</text>
<text x="1303.9" y="258.5" font-size="2.9" transform="rotate(-90 1303.9 258.5)" font-weight="bold">2900</text>
<text x="1298.8" y="279.6" font-size="3.4" transform="rotate(-90 1298.8 279.6)" font-weight="bold">1500</text>
<text x="1298.8" y="270.6" font-size="3.4" transform="rotate(-90 1298.8 270.6)" font-weight="bold">900</text>
<text x="1303.9" y="275.5" font-size="2.9" transform="rotate(-90 1303.9 275.5)" font-weight="bold">2900</text>
<text x="1298.8" y="296.6" font-size="3.4" transform="rotate(-90 1298.8 296.6)" font-weight="bold">1500</text>
<text x="1298.8" y="287.6" font-size="3.4" transform="rotate(-90 1298.8 287.6)" font-weight="bold">900</text>
<text x="1303.9" y="292.5" font-size="2.9" transform="rotate(-90 1303.9 292.5)" font-weight="bold">2900</text>
<text x="1298.8" y="313.6" font-size="3.4" transform="rotate(-90 1298.8 313.6)" font-weight="bold">1500</text>
<text x="1298.8" y="304.6" font-size="3.4" transform="rotate(-90 1298.8 304.6)" font-weight="bold">900</text>
<text x="1303.9" y="309.5" font-size="2.9" transform="rotate(-90 1303.9 309.5)" font-weight="bold">2900</text>
<text x="1298.8" y="330.7" font-size="3.4" transform="rotate(-90 1298.8 330.7)" font-weight="bold">1500</text>
<text x="1298.8" y="321.7" font-size="3.4" transform="rotate(-90 1298.8 321.7)" font-weight="bold">900</text>
<text x="1303.9" y="326.6" font-size="2.9" transform="rotate(-90 1303.9 326.6)" font-weight="bold">2900</text>
<text x="1298.8" y="347.7" font-size="3.4" transform="rotate(-90 1298.8 347.7)" font-weight="bold">1500</text>
<text x="1298.8" y="338.7" font-size="3.4" transform="rotate(-90 1298.8 338.7)" font-weight="bold">900</text>
<text x="1303.9" y="343.6" font-size="2.9" transform="rotate(-90 1303.9 343.6)" font-weight="bold">2900</text>
<text x="1298.8" y="364.7" font-size="3.4" transform="rotate(-90 1298.8 364.7)" font-weight="bold">1500</text>
<text x="1298.8" y="355.7" font-size="3.4" transform="rotate(-90 1298.8 355.7)" font-weight="bold">900</text>
<text x="1303.9" y="360.6" font-size="2.9" transform="rotate(-90 1303.9 360.6)" font-weight="bold">2900</text>
<text x="1298.8" y="381.7" font-size="3.4" transform="rotate(-90 1298.8 381.7)" font-weight="bold">1500</text>
<text x="1298.8" y="372.7" font-size="3.4" transform="rotate(-90 1298.8 372.7)" font-weight="bold">900</text>
<text x="1303.9" y="377.6" font-size="2.9" transform="rotate(-90 1303.9 377.6)" font-weight="bold">2900</text>
<text x="1298.8" y="398.7" font-size="3.4" transform="rotate(-90 1298.8 398.7)" font-weight="bold">1500</text>
<text x="1298.8" y="389.7" font-size="3.4" transform="rotate(-90 1298.8 389.7)" font-weight="bold">900</text>
<text x="1303.9" y="394.6" font-size="2.9" transform="rotate(-90 1303.9 394.6)" font-weight="bold">2900</text>
<text x="1298.8" y="91.1" font-size="3.2" transform="rotate(-90 1298.8 91.1)" font-weight="bold">1400</text>
<text x="1298.8" y="81.1" font-size="3.2" transform="rotate(-90 1298.8 81.1)" font-weight="bold">3300</text>
<text x="1303.9" y="82.1" font-size="2.9" transform="rotate(-90 1303.9 82.1)" font-weight="bold">4500</text>
<text x="1312.5" y="72" font-size="3.8" font-weight="bold" textLength="14.5" lengthAdjust="spacingAndGlyphs">52.200</text>
<path d="M1309.9 64.6L1314.3 64.6L1312.1 66.8Z" stroke="#ffffff" stroke-width="0.8"/>
<text x="1312.5" y="89.7" font-size="3.8" font-weight="bold" textLength="14.5" lengthAdjust="spacingAndGlyphs">49.300</text>
<path d="M1309.9 89.9L1314.3 89.9L1312.1 92.1Z" stroke="#ffffff" stroke-width="0.8"/>
<text x="1312.5" y="106.9" font-size="3.8" font-weight="bold" textLength="14.5" lengthAdjust="spacingAndGlyphs">46.400</text>
<path d="M1309.9 107.1L1314.3 107.1L1312.1 109.3Z" stroke="#ffffff" stroke-width="0.8"/>
<text x="1312.5" y="123.9" font-size="3.8" font-weight="bold" textLength="14.5" lengthAdjust="spacingAndGlyphs">43.500</text>
<path d="M1309.9 124.1L1314.3 124.1L1312.1 126.3Z" stroke="#ffffff" stroke-width="0.8"/>
<text x="1312.5" y="140.9" font-size="3.8" font-weight="bold" textLength="14.5" lengthAdjust="spacingAndGlyphs">40.600</text>
<path d="M1309.9 141.1L1314.3 141.1L1312.1 143.3Z" stroke="#ffffff" stroke-width="0.8"/>
<text x="1312.5" y="158" font-size="3.8" font-weight="bold" textLength="14.5" lengthAdjust="spacingAndGlyphs">37.700</text>
<path d="M1309.9 158.2L1314.3 158.2L1312.1 160.4Z" stroke="#ffffff" stroke-width="0.8"/>
<text x="1312.5" y="175" font-size="3.8" font-weight="bold" textLength="14.5" lengthAdjust="spacingAndGlyphs">34.800</text>
<path d="M1309.9 175.2L1314.3 175.2L1312.1 177.4Z" stroke="#ffffff" stroke-width="0.8"/>
<text x="1312.5" y="192" font-size="3.8" font-weight="bold" textLength="14.5" lengthAdjust="spacingAndGlyphs">31.900</text>
<path d="M1309.9 192.2L1314.3 192.2L1312.1 194.4Z" stroke="#ffffff" stroke-width="0.8"/>
<text x="1312.5" y="209" font-size="3.8" font-weight="bold" textLength="14.5" lengthAdjust="spacingAndGlyphs">29.000</text>
<path d="M1309.9 209.2L1314.3 209.2L1312.1 211.4Z" stroke="#ffffff" stroke-width="0.8"/>
<text x="1312.5" y="226" font-size="3.8" font-weight="bold" textLength="14.5" lengthAdjust="spacingAndGlyphs">26.100</text>
<path d="M1309.9 226.2L1314.3 226.2L1312.1 228.4Z" stroke="#ffffff" stroke-width="0.8"/>
<text x="1312.5" y="243.1" font-size="3.8" font-weight="bold" textLength="14.5" lengthAdjust="spacingAndGlyphs">23.200</text>
<path d="M1309.9 243.3L1314.3 243.3L1312.1 245.5Z" stroke="#ffffff" stroke-width="0.8"/>
<text x="1312.5" y="260.1" font-size="3.8" font-weight="bold" textLength="14.5" lengthAdjust="spacingAndGlyphs">20.300</text>
<path d="M1309.9 260.3L1314.3 260.3L1312.1 262.5Z" stroke="#ffffff" stroke-width="0.8"/>
<text x="1312.5" y="277.1" font-size="3.8" font-weight="bold" textLength="14.5" lengthAdjust="spacingAndGlyphs">17.400</text>
<path d="M1309.9 277.3L1314.3 277.3L1312.1 279.5Z" stroke="#ffffff" stroke-width="0.8"/>
<text x="1312.5" y="294.1" font-size="3.8" font-weight="bold" textLength="14.5" lengthAdjust="spacingAndGlyphs">14.500</text>
<path d="M1309.9 294.3L1314.3 294.3L1312.1 296.5Z" stroke="#ffffff" stroke-width="0.8"/>
<text x="1312.5" y="311.1" font-size="3.8" font-weight="bold" textLength="14.5" lengthAdjust="spacingAndGlyphs">11.600</text>
<path d="M1309.9 311.3L1314.3 311.3L1312.1 313.5Z" stroke="#ffffff" stroke-width="0.8"/>
<text x="1312.5" y="328.2" font-size="3.8" font-weight="bold" textLength="14.5" lengthAdjust="spacingAndGlyphs">8.700</text>
<path d="M1309.9 328.4L1314.3 328.4L1312.1 330.6Z" stroke="#ffffff" stroke-width="0.8"/>
<text x="1312.5" y="345.2" font-size="3.8" font-weight="bold" textLength="14.5" lengthAdjust="spacingAndGlyphs">5.800</text>
<path d="M1309.9 345.4L1314.3 345.4L1312.1 347.6Z" stroke="#ffffff" stroke-width="0.8"/>
<text x="1312.5" y="362.2" font-size="3.8" font-weight="bold" textLength="14.5" lengthAdjust="spacingAndGlyphs">2.900</text>
<path d="M1309.9 362.4L1314.3 362.4L1312.1 364.6Z" stroke="#ffffff" stroke-width="0.8"/>
<text x="1312.5" y="379.2" font-size="3.8" font-weight="bold" textLength="14.5" lengthAdjust="spacingAndGlyphs">0.000</text>
<path d="M1309.9 379.4L1314.3 379.4L1312.1 381.6Z" stroke="#ffffff" stroke-width="0.8"/>
<text x="1312.5" y="396.2" font-size="3.8" font-weight="bold" textLength="14.5" lengthAdjust="spacingAndGlyphs">0.000</text>
<path d="M1309.9 396.4L1314.3 396.4L1312.1 398.6Z" stroke="#ffffff" stroke-width="0.8"/>
<path d="M1232.4 597.6L1236 603.9M1232.4 588.4L1241.3 603.9M1232.4 579.2L1246.6 603.9M1232.4 570.1L1251.9 603.9M1232.4 560.9L1257.2 603.9M1232.4 551.7L1262.5 603.9M1232.4 542.5L1267.8 603.9M1232.4 533.4L1273.1 603.9M1232.4 524.2L1276.9 601.2M1232.4 515L1276.9 592M1236.1 512.4L1276.9 582.9M1241.4 512.4L1276.9 573.7M1246.7 512.4L1276.9 564.5M1252 512.4L1276.9 555.4M1257.3 512.4L1276.9 546.2M1262.6 512.4L1276.9 537M1267.9 512.4L1276.9 527.9M1273.2 512.4L1276.9 518.7" stroke="#cbcbcb" stroke-width="0.9"/>
<path d="M1232.5 512.4L1232.5 603.9M1276.5 512.4L1276.5 603.9" stroke="#cbcbcb"/>
<path d="M1373.5 585.1L1374.8 587.3M1373.5 575.9L1380.1 587.3M1373.5 566.7L1385.4 587.3M1373.5 557.6L1390.7 587.3M1373.5 548.4L1396 587.3M1373.5 539.2L1401.3 587.3M1373.5 530L1406.6 587.3M1373.5 520.9L1411.9 587.3M1373.9 512.4L1417.2 587.3M1379.2 512.4L1422.5 587.3M1384.5 512.4L1427.8 587.3M1389.8 512.4L1433.1 587.3M1395.1 512.4L1438.4 587.3M1400.4 512.4L1443.7 587.3M1405.7 512.4L1449 587.3M1411 512.4L1454.3 587.3M1416.3 512.4L1459.6 587.3M1421.6 512.4L1464.9 587.3M1426.9 512.4L1470.2 587.3M1432.2 512.4L1475.5 587.3M1437.5 512.4L1480.8 587.3M1442.8 512.4L1486.1 587.3M1448.1 512.4L1491.4 587.3M1453.4 512.4L1491.6 578.4M1458.7 512.4L1491.6 569.2M1464 512.4L1491.6 560M1469.3 512.4L1491.6 550.9M1474.6 512.4L1491.6 541.7M1479.9 512.4L1491.6 532.5M1485.2 512.4L1491.6 523.4M1490.5 512.4L1491.6 514.2" stroke="#cbcbcb" stroke-width="0.9"/>
<path d="M1373.5 512.4L1373.5 587.3M1491.5 512.4L1491.5 587.3" stroke="#cbcbcb"/>
<path d="M1321 580.8L1324.7 587.3M1321 571.7L1330 587.3M1321 562.5L1335.3 587.3M1326.2 562.4L1340.6 587.3M1331.5 562.4L1345.9 587.3M1336.8 562.4L1351.2 587.3M1342.1 562.4L1356.5 587.3M1347.4 562.4L1361.8 587.3M1352.7 562.4L1367.1 587.3M1358 562.4L1372.4 587.3M1363.3 562.4L1373.5 580M1368.6 562.4L1373.5 570.9" stroke="#cbcbcb" stroke-width="0.9"/>
<path d="M1361.2 562.4L1321 562.4L1321 578.4" stroke="#ffffff" stroke-width="1.1"/>
<path d="M1361.2 562.5L1373.5 562.5M1364.5 562.4L1364.5 587.3M1222 512.5L1506.3 512.5M1363.5 510.9L1363.5 514.9" stroke="#00ff00"/>
<path d="M1286.5 512.4L1286.5 613.7M1320.5 512.4L1320.5 613.7M1322.5 512.4L1322.5 613.7M1491.5 512.4L1491.5 613.7" stroke="#b0b0b0" stroke-dasharray="14 1.6 1.2 1.6"/>
<path d="M1208 570.2L1226.9 570.2L1232.2 578" stroke="#00ff00"/>
<path d="M1394.5 706.7L1391.4 708.8L1394.5 711.2" stroke="#ffffff" stroke-width="0.9"/>
<path d="M1392.8 708.5L1410.7 708.5M1410.5 706.9L1410.5 711" stroke="#ffffff"/>
<text x="1398.2" y="706.5" font-size="2" font-weight="bold">1:150</text>
<text x="1418.2" y="711" font-size="4.6" font-weight="bold" textLength="46.5" lengthAdjust="spacingAndGlyphs">地下车库剖面图及立面图</text>
<text x="1384.2" y="719.6" font-size="3.6" font-weight="bold" textLength="8.2" lengthAdjust="spacingAndGlyphs">工程</text>
<text x="1405.3" y="719.6" font-size="3.4" font-weight="bold" textLength="22.8" lengthAdjust="spacingAndGlyphs">某住宅小区地下车库</text>
<text x="1455" y="719.6" font-size="3.6" font-weight="bold" textLength="8.2" lengthAdjust="spacingAndGlyphs">图名</text>
<text x="1483.1" y="719.6" font-size="3.4" font-weight="bold" textLength="20" lengthAdjust="spacingAndGlyphs">剖面图 立面图</text>
<text x="1384.5" y="726.6" font-size="3.2" font-weight="bold" textLength="8.6" lengthAdjust="spacingAndGlyphs">审 定</text>
<text x="1384.5" y="740.4" font-size="3.2" font-weight="bold" textLength="8.6" lengthAdjust="spacingAndGlyphs">审 核</text>
<text x="1402.9" y="727.2" font-size="4.6" font-weight="bold" textLength="10.2" lengthAdjust="spacingAndGlyphs">张工</text>
<text x="1403.3" y="730.7" font-size="2.4" font-weight="bold">工</text>
<text x="1402.9" y="740.9" font-size="4.8" font-weight="bold" textLength="10.4" lengthAdjust="spacingAndGlyphs">李工</text>
<text x="1419.5" y="726.6" font-size="3.2" font-weight="bold" textLength="8.2" lengthAdjust="spacingAndGlyphs">校 对</text>
<text x="1419.5" y="733.7" font-size="3.2" font-weight="bold" textLength="8.2" lengthAdjust="spacingAndGlyphs">设 计</text>
<text x="1419.5" y="740.4" font-size="3.2" font-weight="bold" textLength="8.2" lengthAdjust="spacingAndGlyphs">制 图</text>
<text x="1436.8" y="727.2" font-size="4.8" font-weight="bold" textLength="10.4" lengthAdjust="spacingAndGlyphs">王工</text>
<text x="1436.8" y="735.2" font-size="5.4" font-weight="bold" textLength="10.4" lengthAdjust="spacingAndGlyphs">赵工</text>
<text x="1460.4" y="730.7" font-size="3.4" font-weight="bold" textLength="19" lengthAdjust="spacingAndGlyphs">设计号 09-018</text>
<text x="1460.4" y="736.1" font-size="3.4" font-weight="bold" textLength="19.6" lengthAdjust="spacingAndGlyphs">日期 2009.08</text>
<text x="1499.9" y="725.5" font-size="2.7" font-weight="bold" textLength="6.6" lengthAdjust="spacingAndGlyphs">图别</text>
<text x="1512" y="725.5" font-size="2.7" font-weight="bold" textLength="13" lengthAdjust="spacingAndGlyphs">建施图</text>
<text x="1529.8" y="725.5" font-size="2.4" font-weight="bold" textLength="2.4" lengthAdjust="spacingAndGlyphs">01</text>
<text x="1499.9" y="730.7" font-size="2.7" font-weight="bold" textLength="6.6" lengthAdjust="spacingAndGlyphs">图号</text>
<text x="1512" y="730.7" font-size="2.7" font-weight="bold" textLength="13" lengthAdjust="spacingAndGlyphs">建-15</text>
<text x="1529.8" y="730.7" font-size="2.4" font-weight="bold" textLength="2.4" lengthAdjust="spacingAndGlyphs">02</text>
<text x="1499.9" y="735.9" font-size="2.7" font-weight="bold" textLength="6.6" lengthAdjust="spacingAndGlyphs">比例</text>
<text x="1529.8" y="735.9" font-size="2.4" font-weight="bold" textLength="2.4" lengthAdjust="spacingAndGlyphs">03</text>
<text x="1499.9" y="740.2" font-size="2.7" font-weight="bold" textLength="6.6" lengthAdjust="spacingAndGlyphs">版次</text>
<text x="1512" y="740.2" font-size="2.7" font-weight="bold" textLength="13" lengthAdjust="spacingAndGlyphs">第一版</text>
<text x="1529.8" y="740.2" font-size="2.4" font-weight="bold" textLength="2.4" lengthAdjust="spacingAndGlyphs">A</text>
<circle cx="504.8" cy="610.9" r="2.2" stroke="#00ff00" stroke-width="0.9"/>
<path d="M505.5 609.6L513 601.6L534.2 601.6" stroke="#00ff00"/>
<circle cx="537.8" cy="601.4" r="4.1" stroke="#00ff00"/>
<path d="M533.7 601.5L541.9 601.5" stroke="#00ff00"/>
<text x="517.2" y="600.6" font-size="3.5" font-weight="bold" textLength="17" lengthAdjust="spacingAndGlyphs">变形缝详见</text>
<text x="523" y="604.8" font-size="2.8" font-weight="bold" textLength="6.2" lengthAdjust="spacingAndGlyphs">建施</text>
<text x="537.8" y="600.7" font-size="3" text-anchor="middle" font-weight="bold">3</text>
<text x="537.8" y="604.6" font-size="3" text-anchor="middle" font-weight="bold">J8</text>
<path d="M505.8 615.8L514 628.2L533.6 628.2" stroke="#00ff00"/>
<circle cx="537.8" cy="628.4" r="4.1" stroke="#00ff00"/>
<path d="M533.7 628.5L541.9 628.5" stroke="#00ff00"/>
<text x="520.2" y="627.2" font-size="3.3" font-weight="bold" textLength="9.6" lengthAdjust="spacingAndGlyphs">变形缝</text>
<text x="519.5" y="631.9" font-size="3.3" font-weight="bold" textLength="12.2" lengthAdjust="spacingAndGlyphs">详见建施</text>
<text x="537.8" y="627.6" font-size="3" text-anchor="middle" font-weight="bold">5</text>
<text x="537.8" y="631.7" font-size="3" text-anchor="middle" font-weight="bold">J8</text>
<circle cx="787.4" cy="592" r="2.2" stroke="#00ff00" stroke-width="0.9"/>
<path d="M788.1 590.7L795.6 582.7L816.8 582.7" stroke="#00ff00"/>
<circle cx="820.4" cy="582.5" r="4.1" stroke="#00ff00"/>
<path d="M816.3 582.5L824.5 582.5" stroke="#00ff00"/>
<text x="799.8" y="581.7" font-size="3.5" font-weight="bold" textLength="17" lengthAdjust="spacingAndGlyphs">变形缝详见</text>
<text x="805.6" y="585.9" font-size="2.8" font-weight="bold" textLength="6.2" lengthAdjust="spacingAndGlyphs">建施</text>
<text x="820.4" y="581.8" font-size="3" text-anchor="middle" font-weight="bold">3</text>
<text x="820.4" y="585.7" font-size="3" text-anchor="middle" font-weight="bold">J8</text>
<path d="M788.4 596.9L796.6 609.3L816.2 609.3" stroke="#00ff00"/>
<circle cx="820.4" cy="609.5" r="4.1" stroke="#00ff00"/>
<path d="M816.3 609.5L824.5 609.5" stroke="#00ff00"/>
<text x="802.8" y="608.3" font-size="3.3" font-weight="bold" textLength="9.6" lengthAdjust="spacingAndGlyphs">变形缝</text>
<text x="802.1" y="613" font-size="3.3" font-weight="bold" textLength="12.2" lengthAdjust="spacingAndGlyphs">详见建施</text>
<text x="820.4" y="608.7" font-size="3" text-anchor="middle" font-weight="bold">5</text>
<text x="820.4" y="612.8" font-size="3" text-anchor="middle" font-weight="bold">J8</text>
<text x="316" y="625.4" font-size="3.2" font-weight="bold" textLength="6" lengthAdjust="spacingAndGlyphs">i=2%</text>
<text x="337.6" y="647.6" font-size="3.2" font-weight="bold" textLength="9" lengthAdjust="spacingAndGlyphs">-5.400</text>
<path d="M388.6 647.5L398.1 647.5" stroke="#00ff00"/>
<path d="M391.1 646.8L393.1 644.8L395.1 646.8Z" fill="#ffffff"/>
<path d="M417.8 620.5L427.3 620.5" stroke="#00ff00"/>
<path d="M420.3 620.2L422.3 618.2L424.3 620.2Z" fill="#ffffff"/>
<text x="430.5" y="619.2" font-size="3.2" font-weight="bold" textLength="6" lengthAdjust="spacingAndGlyphs">±0.00</text>
<text x="476.5" y="643.8" font-size="3.2" font-weight="bold" textLength="8" lengthAdjust="spacingAndGlyphs">i=2.5%</text>
<path d="M558.8 642.5L568.3 642.5" stroke="#00ff00"/>
<path d="M561.3 642.2L563.3 640.2L565.3 642.2Z" fill="#ffffff"/>
<path d="M645 604.5L654.5 604.5" stroke="#00ff00"/>
<path d="M647.5 603.8L649.5 601.8L651.5 603.8Z" fill="#ffffff"/>
<text x="656.5" y="602.8" font-size="3.2" font-weight="bold" textLength="6" lengthAdjust="spacingAndGlyphs">1.20</text>
<path d="M663 629.5L672.5 629.5" stroke="#00ff00"/>
<path d="M665.5 629.4L667.5 627.4L669.5 629.4Z" fill="#ffffff"/>
<text x="770.2" y="624.2" font-size="3.2" font-weight="bold" textLength="8.5" lengthAdjust="spacingAndGlyphs">-4.20</text>
<path d="M802 625.5L811.5 625.5" stroke="#00ff00"/>
<path d="M804.5 625.2L806.5 623.2L808.5 625.2Z" fill="#ffffff"/>
<path d="M954 611.5L963.5 611.5" stroke="#00ff00"/>
<path d="M956.5 611.2L958.5 609.2L960.5 611.2Z" fill="#ffffff"/>
<path d="M1046 581.5L1055.5 581.5" stroke="#00ff00"/>
<path d="M1048.5 581.2L1050.5 579.2L1052.5 581.2Z" fill="#ffffff"/>
<text x="1057.5" y="580" font-size="3.2" font-weight="bold" textLength="6.4" lengthAdjust="spacingAndGlyphs">2.40</text>
<text x="1052.2" y="603.8" font-size="3.2" font-weight="bold" textLength="9.8" lengthAdjust="spacingAndGlyphs">i=2.5%</text>
<path d="M1163.5 605.5L1173 605.5" stroke="#00ff00"/>
<path d="M1166 605L1168 603L1170 605Z" fill="#ffffff"/>
<path d="M1213.5 603.5L1223 603.5" stroke="#00ff00"/>
<path d="M1216 603.6L1218 601.6L1220 603.6Z" fill="#ffffff"/>
<text x="1205" y="569.6" font-size="3.3" font-weight="bold" textLength="19.5" lengthAdjust="spacingAndGlyphs">相邻建筑外墙</text>
<path d="M1204.5 570.5L1226.5 570.5" stroke="#00ff00"/>
<text x="1233.5" y="577.2" font-size="3.3" font-weight="bold" textLength="13.5" lengthAdjust="spacingAndGlyphs">▽2.400</text>
<text x="1298.5" y="576.6" font-size="3.3" font-weight="bold" textLength="9.5" lengthAdjust="spacingAndGlyphs">2.400</text>
<path d="M1305.5 577L1307.3 578.6L1309.1 577" stroke="#ffffff" stroke-width="0.8"/>
<text x="1338" y="560.4" font-size="3.4" font-weight="bold" textLength="11" lengthAdjust="spacingAndGlyphs">4.800</text>
<path d="M1345.8 560.8L1347.4 562.4L1349 560.8" stroke="#ffffff" stroke-width="0.8"/>
<text x="1343" y="582.2" font-size="3" font-weight="bold" textLength="8.5" lengthAdjust="spacingAndGlyphs">2400</text>
<text x="1365.6" y="579.6" font-size="2.8" transform="rotate(-90 1365.6 579.6)" font-weight="bold" textLength="8" lengthAdjust="spacingAndGlyphs">2400</text>
<text x="1262.5" y="595.6" font-size="3" font-weight="bold" textLength="6" lengthAdjust="spacingAndGlyphs">车库</text>
<text x="1426" y="575.6" font-size="3" font-weight="bold" textLength="5" lengthAdjust="spacingAndGlyphs">商铺</text>
<text x="1432" y="586.2" font-size="3.4" font-weight="bold" textLength="11" lengthAdjust="spacingAndGlyphs">±0.000</text>
<text x="1497.5" y="590.4" font-size="2.4" font-weight="bold" textLength="6" lengthAdjust="spacingAndGlyphs">-0.45</text>
<text x="567.3" y="442" font-size="3.2" font-weight="bold" textLength="6.8" lengthAdjust="spacingAndGlyphs">1.20</text>
<path d="M585.5 443.5L595 443.5" stroke="#00ff00"/>
<path d="M588 442.8L590 440.8L592 442.8Z" fill="#ffffff"/>
<text x="598.6" y="465.8" font-size="3.2" font-weight="bold" textLength="8" lengthAdjust="spacingAndGlyphs">-4.20</text>
<path d="M640.5 465.5L650 465.5" stroke="#00ff00"/>
<path d="M643 465.2L645 463.2L647 465.2Z" fill="#ffffff"/>
<text x="537" y="478.4" font-size="3.3" font-weight="bold" textLength="21" lengthAdjust="spacingAndGlyphs">室外地坪 -5.400</text>
<path d="M564.3 470.4L558.4 479.3L536.5 479.3" stroke="#00ff00"/>
<text x="533" y="425" font-size="3" font-weight="bold" textLength="6.6" lengthAdjust="spacingAndGlyphs">雨篷</text>
<path d="M641 465.5L650.5 465.5" stroke="#00ff00"/>
<path d="M643.5 465.2L645.5 463.2L647.5 465.2Z" fill="#ffffff"/>
<path d="M674 441.5L683.5 441.5" stroke="#00ff00"/>
<path d="M676.5 441.2L678.5 439.2L680.5 441.2Z" fill="#ffffff"/>
<text x="690" y="438.8" font-size="3.2" font-weight="bold" textLength="6" lengthAdjust="spacingAndGlyphs">2.40</text>
<path d="M786.4 438.5L792.6 438.5M786.5 436.6L786.5 439.4M792.5 436.6L792.5 439.4M1060.8 415.5L1066.6 415.5M1060.5 413.8L1060.5 416.6M1066.5 413.8L1066.5 416.6" stroke="#ffffff"/>
<path d="M914.3 445.5L923.8 445.5" stroke="#00ff00"/>
<path d="M916.8 445.4L918.8 443.4L920.8 445.4Z" fill="#ffffff"/>
<text x="1200.6" y="411.6" font-size="3" font-weight="bold" textLength="7.6" lengthAdjust="spacingAndGlyphs">车库</text>
<text x="1304.5" y="419.4" font-size="3.2" font-weight="bold" textLength="8.8" lengthAdjust="spacingAndGlyphs">i=2.5%</text>
<text x="1335.9" y="396.4" font-size="3.2" font-weight="bold" textLength="5" lengthAdjust="spacingAndGlyphs">4.8</text>
<path d="M1349.3 397.5L1358.8 397.5" stroke="#00ff00"/>
<path d="M1351.8 397.4L1353.8 395.4L1355.8 397.4Z" fill="#ffffff"/>
<path d="M1415 421.5L1424.5 421.5" stroke="#00ff00"/>
<path d="M1417.5 421.6L1419.5 419.6L1421.5 421.6Z" fill="#ffffff"/>
<path d="M1288.5 396L1291.5 397.5L1288.5 399.5L1291.5 401.5L1289.5 404" stroke="#ffffff" stroke-width="0.9"/>
</svg>
</body></html>
